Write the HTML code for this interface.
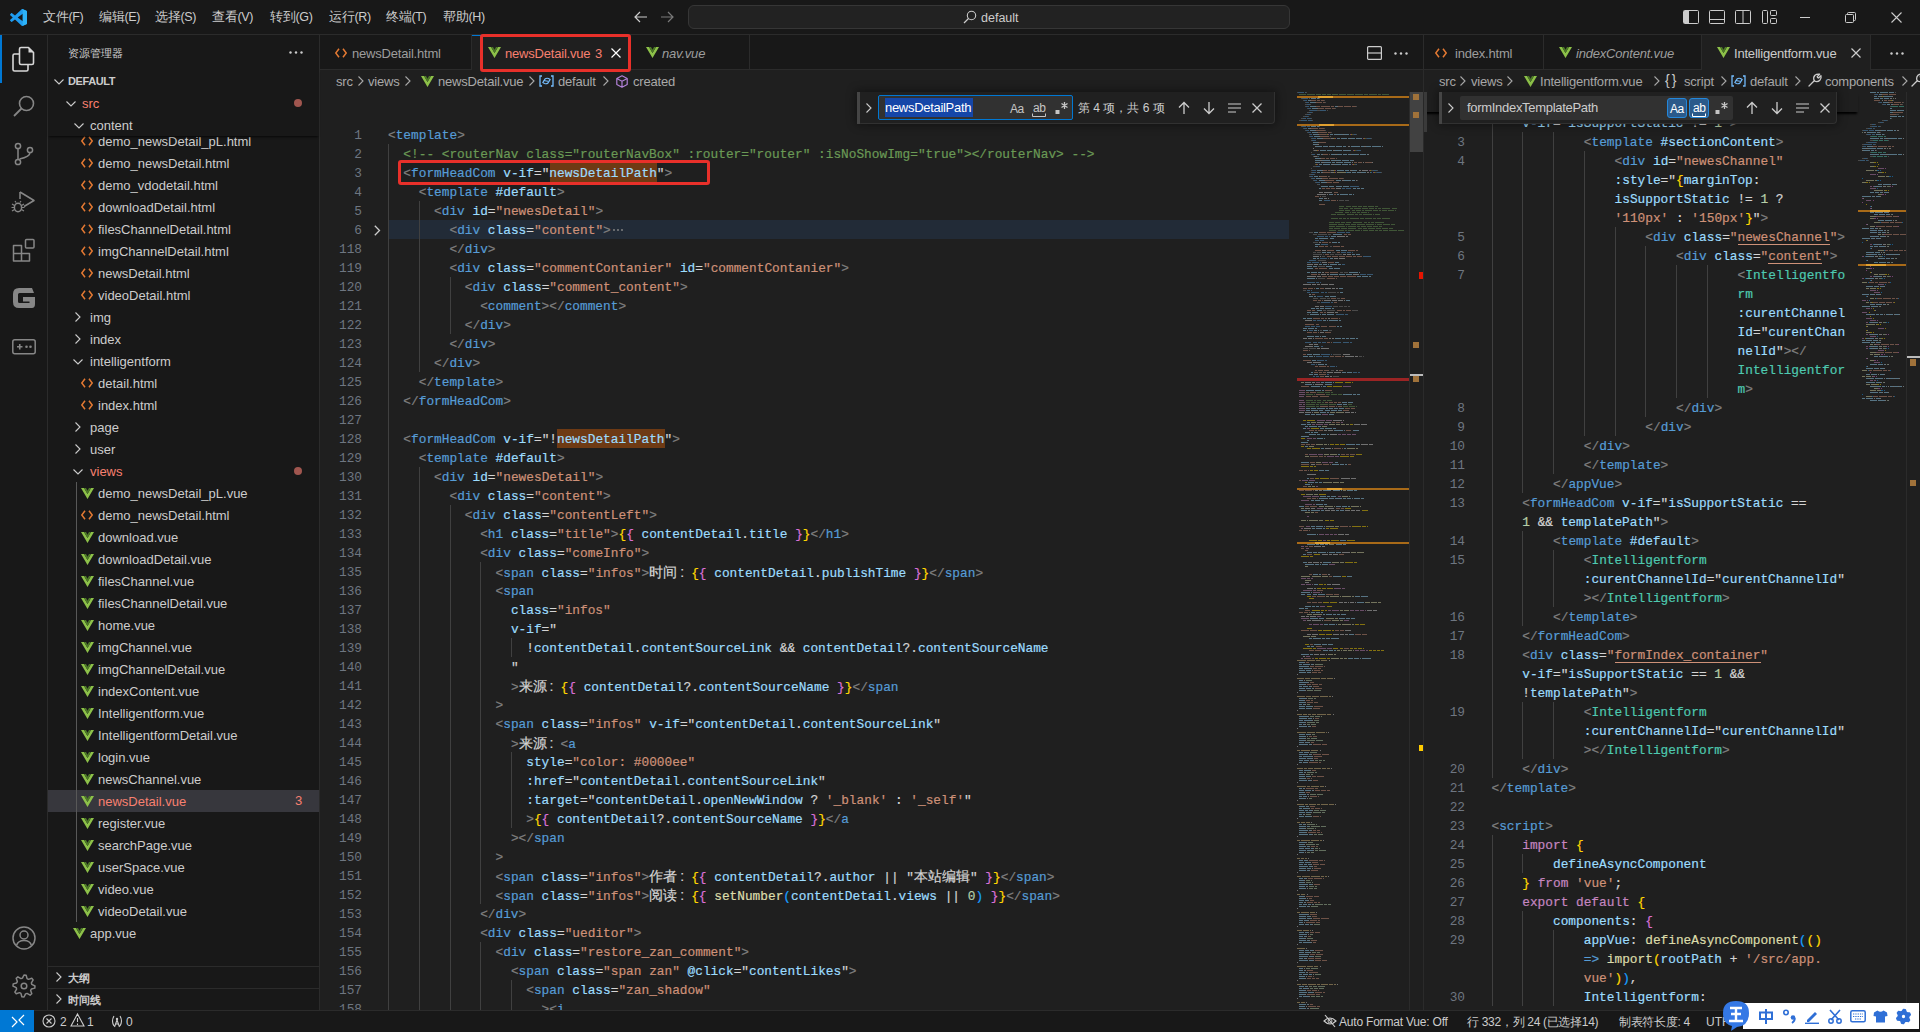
<!DOCTYPE html><html><head><meta charset="utf-8"><style>
*{box-sizing:border-box}
html,body{margin:0;padding:0;width:1920px;height:1032px;overflow:hidden;background:#181818}
body{position:relative;font-family:"Liberation Sans",sans-serif;font-size:13px;color:#cccccc}
.a{position:absolute}
.cr{position:absolute;height:19px;line-height:19px;padding-top:1px;-webkit-text-stroke:0.2px currentColor;white-space:pre;font-family:"Liberation Mono",monospace;font-size:12.81px;color:#d4d4d4}
.ln{position:absolute;height:19px;line-height:19px;padding-top:1px;text-align:right;font-family:"Liberation Mono",monospace;font-size:12.81px;color:#6e7681;width:40px}
.tr{position:absolute;height:22px;line-height:22px;white-space:pre;font-size:13px;color:#cccccc}
.ig{position:absolute;width:1px;background:#404040}
.ui{position:absolute;white-space:pre;line-height:16px}
svg{position:absolute;overflow:visible}
</style></head><body>
<div class="a" style="left:0;top:0;width:1920px;height:35px;background:#181818;border-bottom:1px solid #2b2b2b"></div><div class="a" style="left:0;top:35px;width:48px;height:975px;background:#181818;border-right:1px solid #2b2b2b"></div><div class="a" style="left:48px;top:35px;width:272px;height:975px;background:#181818;border-right:1px solid #2b2b2b"></div><div class="a" style="left:320px;top:35px;width:1103px;height:975px;background:#1f1f1f"></div><div class="a" style="left:1423px;top:35px;width:1px;height:975px;background:#2b2b2b"></div><div class="a" style="left:1424px;top:35px;width:496px;height:975px;background:#1f1f1f"></div><div class="a" style="left:320px;top:35px;width:1103px;height:35px;background:#181818;border-bottom:1px solid #2b2b2b"></div><div class="a" style="left:1424px;top:35px;width:496px;height:35px;background:#181818;border-bottom:1px solid #2b2b2b"></div><svg style="left:9.5px;top:8.5px" width="17" height="17" viewBox="0 0 100 100"><path fill-rule="evenodd" fill="#1f9cf0" d="M96.46 10.8 L75.86 0.87 C73.48 -0.28 70.63 0.2 68.76 2.07 L29.36 38.03 L12.19 25 C10.6 23.79 8.37 23.89 6.89 25.24 L1.39 30.24 C-0.42 31.89 -0.42 34.74 1.38 36.39 L16.27 50 L1.38 63.61 C-0.42 65.26 -0.42 68.11 1.39 69.76 L6.89 74.76 C8.37 76.11 10.6 76.21 12.19 75 L29.36 61.97 L68.76 97.93 C70.63 99.8 73.48 100.28 75.86 99.13 L96.46 89.2 C98.6 88.17 100 86 100 83.6 V16.4 C100 14 98.6 11.83 96.46 10.8 Z M75.03 72.7 L45.1 50 L75.03 27.3 Z"/><path fill="#2db3f8" d="M75.86 0.87 L96.46 10.8 C98.6 11.83 100 14 100 16.4 V83.6 C100 86 98.6 88.17 96.46 89.2 L75.86 99.13 C73.48 100.28 70.63 99.8 68.76 97.93 C71.5 99.5 75 98 75 95 V5 C75 2 71.5 0.5 68.76 2.07 C70.63 0.2 73.48 -0.28 75.86 0.87 Z"/></svg><div class="ui" style="left:43px;top:9px;font-size:12.5px;color:#cccccc;letter-spacing:-0.3px">文件(F)</div><div class="ui" style="left:99px;top:9px;font-size:12.5px;color:#cccccc;letter-spacing:-0.3px">编辑(E)</div><div class="ui" style="left:155px;top:9px;font-size:12.5px;color:#cccccc;letter-spacing:-0.3px">选择(S)</div><div class="ui" style="left:212px;top:9px;font-size:12.5px;color:#cccccc;letter-spacing:-0.3px">查看(V)</div><div class="ui" style="left:270px;top:9px;font-size:12.5px;color:#cccccc;letter-spacing:-0.3px">转到(G)</div><div class="ui" style="left:329px;top:9px;font-size:12.5px;color:#cccccc;letter-spacing:-0.3px">运行(R)</div><div class="ui" style="left:386px;top:9px;font-size:12.5px;color:#cccccc;letter-spacing:-0.3px">终端(T)</div><div class="ui" style="left:443px;top:9px;font-size:12.5px;color:#cccccc;letter-spacing:-0.3px">帮助(H)</div><svg style="left:634px;top:11px" width="14" height="12"><path d="M1 6 H13 M6 1 L1 6 L6 11" stroke="#cccccc" stroke-width="1.2" fill="none"/></svg><svg style="left:660px;top:11px" width="14" height="12"><path d="M1 6 H13 M8 1 L13 6 L8 11" stroke="#7a7a7a" stroke-width="1.2" fill="none"/></svg><div class="a" style="left:688px;top:5px;width:602px;height:24px;background:#222222;border:1px solid #363636;border-radius:6px"></div><svg style="left:963px;top:10px" width="14" height="14"><circle cx="8.5" cy="5.5" r="4.2" stroke="#cccccc" stroke-width="1.1" fill="none"/><path d="M5.5 8.5 L1 13" stroke="#cccccc" stroke-width="1.2"/></svg><div class="ui" style="left:981px;top:10px;font-size:12.5px;color:#cccccc">default</div><svg style="left:1683px;top:10px" width="16" height="14"><rect x="0.5" y="0.5" width="15" height="13" rx="1" stroke="#cccccc" fill="none"/><rect x="1" y="1" width="5" height="12" fill="#cccccc"/></svg><svg style="left:1709px;top:10px" width="16" height="14"><rect x="0.5" y="0.5" width="15" height="13" rx="1" stroke="#cccccc" fill="none"/><path d="M1 9.5 H15" stroke="#cccccc"/></svg><svg style="left:1735px;top:10px" width="16" height="14"><rect x="0.5" y="0.5" width="15" height="13" rx="1" stroke="#cccccc" fill="none"/><path d="M8 1 V13" stroke="#cccccc"/></svg><svg style="left:1762px;top:10px" width="15" height="14"><rect x="0.5" y="0.5" width="5" height="13" rx="1" stroke="#cccccc" fill="none"/><rect x="8.5" y="0.5" width="6" height="5" rx="1" stroke="#cccccc" fill="none"/><rect x="8.5" y="8.5" width="6" height="5" rx="1" stroke="#cccccc" fill="none"/></svg><svg style="left:1800px;top:12px" width="11" height="11"><path d="M0 5.5 H10" stroke="#cccccc" stroke-width="1"/></svg><svg style="left:1845px;top:12px" width="11" height="11"><rect x="0.5" y="2.5" width="8" height="8" rx="1" stroke="#cccccc" fill="none"/><path d="M2.5 2.5 V1.5 Q2.5 0.5 3.5 0.5 H9.5 Q10.5 0.5 10.5 1.5 V7.5 Q10.5 8.5 9.5 8.5 H8.5" stroke="#cccccc" fill="none"/></svg><svg style="left:1891px;top:12px" width="11" height="11"><path d="M0.5 0.5 L10.5 10.5 M10.5 0.5 L0.5 10.5" stroke="#cccccc" stroke-width="1.1"/></svg><div class="a" style="left:0;top:35px;width:2px;height:48px;background:#0078d4"></div><svg style="left:12px;top:46px" width="24" height="26"><path d="M9 1.5 H16.5 L21.5 6.5 V17 Q21.5 18.5 20 18.5 H9 Q7.5 18.5 7.5 17 V3 Q7.5 1.5 9 1.5 Z" stroke="#d7d7d7" stroke-width="1.6" fill="none" stroke-linejoin="round"/><path d="M16.5 1.5 L21.5 6.5 H16.5 Z" fill="#d7d7d7"/><path d="M7.5 8 H2.5 Q1 8 1 9.5 V23.5 Q1 25 2.5 25 H14.5 Q16 25 16 23.5 V18.5" stroke="#d7d7d7" stroke-width="1.6" fill="none" stroke-linejoin="round"/></svg><svg style="left:12px;top:94px" width="24" height="24"><circle cx="14.5" cy="9.5" r="7" stroke="#868686" stroke-width="1.6" fill="none"/><path d="M9.5 14.5 L2 22" stroke="#868686" stroke-width="1.8"/></svg><svg style="left:13px;top:142px" width="22" height="24"><circle cx="5" cy="4" r="2.6" stroke="#868686" stroke-width="1.5" fill="none"/><circle cx="5" cy="20" r="2.6" stroke="#868686" stroke-width="1.5" fill="none"/><circle cx="17" cy="8" r="2.6" stroke="#868686" stroke-width="1.5" fill="none"/><path d="M5 6.6 V17.4 M17 10.6 Q17 15 6.5 17" stroke="#868686" stroke-width="1.5" fill="none"/></svg><svg style="left:11px;top:190px" width="26" height="24"><path d="M9 2 L23 10.5 L13 16.5" stroke="#868686" stroke-width="1.5" fill="none" stroke-linejoin="round"/><path d="M9 2 V9" stroke="#868686" stroke-width="1.5"/><ellipse cx="7" cy="17.5" rx="3.6" ry="4.2" stroke="#868686" stroke-width="1.5" fill="none"/><path d="M1 14 L3.5 15.5 M1 21 L3.5 19.5 M13 14 L10.5 15.5 M13 21 L10.5 19.5 M0.5 17.5 H3 M11 17.5 H13.5 M5 12.5 L4 11 M9 12.5 L10 11" stroke="#868686" stroke-width="1.2"/></svg><svg style="left:12px;top:238px" width="24" height="24"><path d="M1.5 7.5 H9.5 V15.5 H17.5 V23 H1.5 Z M1.5 15.5 H9.5 V23" stroke="#868686" stroke-width="1.5" fill="none" stroke-linejoin="round"/><rect x="13.5" y="1.5" width="8.5" height="8.5" rx="1" stroke="#868686" stroke-width="1.5" fill="none"/></svg><svg style="left:12px;top:287px" width="24" height="22"><path d="M20 1 H7 Q1 1 1 7 V15 Q1 21 7 21 H20 Q23 21 23 17 V10 H11 V14.5 H17.5 V16 H7.5 Q6 16 6 14.5 V7.5 Q6 6 7.5 6 H22 Z" fill="#868686"/></svg><svg style="left:12px;top:339px" width="24" height="16"><rect x="0.8" y="0.8" width="22.4" height="14" rx="2" stroke="#868686" stroke-width="1.5" fill="none"/><path d="M5 7.8 H10.5 M7.75 5 V10.5" stroke="#868686" stroke-width="1.6"/><circle cx="14.5" cy="7.8" r="1.3" fill="#868686"/><circle cx="18.5" cy="7.8" r="1.3" fill="#868686"/></svg><svg style="left:12px;top:926px" width="24" height="24"><circle cx="12" cy="12" r="11" stroke="#868686" stroke-width="1.5" fill="none"/><circle cx="12" cy="9" r="4" stroke="#868686" stroke-width="1.5" fill="none"/><path d="M4.5 19.5 Q6 14.5 12 14.5 Q18 14.5 19.5 19.5" stroke="#868686" stroke-width="1.5" fill="none"/></svg><svg style="left:12px;top:974px" width="24" height="24"><polygon points="12.00,1.00 14.15,1.21 15.06,4.61 16.44,5.35 19.78,4.22 21.15,5.89 19.39,8.94 19.85,10.44 23.00,12.00 22.79,14.15 19.39,15.06 18.65,16.44 19.78,19.78 18.11,21.15 15.06,19.39 13.56,19.85 12.00,23.00 9.85,22.79 8.94,19.39 7.56,18.65 4.22,19.78 2.85,18.11 4.61,15.06 4.15,13.56 1.00,12.00 1.21,9.85 4.61,8.94 5.35,7.56 4.22,4.22 5.89,2.85 8.94,4.61 10.44,4.15" stroke="#868686" stroke-width="1.5" fill="none" stroke-linejoin="round"/><circle cx="12" cy="12" r="2.8" stroke="#868686" stroke-width="1.5" fill="none"/></svg><div class="ui" style="left:68px;top:45px;font-size:11px;color:#cccccc">资源管理器</div><svg style="left:289px;top:51px" width="14" height="4"><circle cx="1.5" cy="1.5" r="1.2" fill="#cccccc"/><circle cx="7" cy="1.5" r="1.2" fill="#cccccc"/><circle cx="12.5" cy="1.5" r="1.2" fill="#cccccc"/></svg><div class="a" style="left:48px;top:790px;width:271px;height:22px;background:#37373d"></div><div class="a" style="left:76px;top:482px;width:1px;height:440px;background:#585858"></div><svg style="left:81px;top:136px" width="12" height="10"><path d="M4 0.8 L0.8 5 L4 9.2 M8 0.8 L11.2 5 L8 9.2" stroke="#e37933" stroke-width="1.5" fill="none"/></svg><div class="tr" style="left:98px;top:131px;color:#cccccc;letter-spacing:0px">demo_newsDetail_pL.html</div><svg style="left:81px;top:158px" width="12" height="10"><path d="M4 0.8 L0.8 5 L4 9.2 M8 0.8 L11.2 5 L8 9.2" stroke="#e37933" stroke-width="1.5" fill="none"/></svg><div class="tr" style="left:98px;top:153px;color:#cccccc;letter-spacing:0px">demo_newsDetail.html</div><svg style="left:81px;top:180px" width="12" height="10"><path d="M4 0.8 L0.8 5 L4 9.2 M8 0.8 L11.2 5 L8 9.2" stroke="#e37933" stroke-width="1.5" fill="none"/></svg><div class="tr" style="left:98px;top:175px;color:#cccccc;letter-spacing:0px">demo_vdodetail.html</div><svg style="left:81px;top:202px" width="12" height="10"><path d="M4 0.8 L0.8 5 L4 9.2 M8 0.8 L11.2 5 L8 9.2" stroke="#e37933" stroke-width="1.5" fill="none"/></svg><div class="tr" style="left:98px;top:197px;color:#cccccc;letter-spacing:0px">downloadDetail.html</div><svg style="left:81px;top:224px" width="12" height="10"><path d="M4 0.8 L0.8 5 L4 9.2 M8 0.8 L11.2 5 L8 9.2" stroke="#e37933" stroke-width="1.5" fill="none"/></svg><div class="tr" style="left:98px;top:219px;color:#cccccc;letter-spacing:0px">filesChannelDetail.html</div><svg style="left:81px;top:246px" width="12" height="10"><path d="M4 0.8 L0.8 5 L4 9.2 M8 0.8 L11.2 5 L8 9.2" stroke="#e37933" stroke-width="1.5" fill="none"/></svg><div class="tr" style="left:98px;top:241px;color:#cccccc;letter-spacing:0px">imgChannelDetail.html</div><svg style="left:81px;top:268px" width="12" height="10"><path d="M4 0.8 L0.8 5 L4 9.2 M8 0.8 L11.2 5 L8 9.2" stroke="#e37933" stroke-width="1.5" fill="none"/></svg><div class="tr" style="left:98px;top:263px;color:#cccccc;letter-spacing:0px">newsDetail.html</div><svg style="left:81px;top:290px" width="12" height="10"><path d="M4 0.8 L0.8 5 L4 9.2 M8 0.8 L11.2 5 L8 9.2" stroke="#e37933" stroke-width="1.5" fill="none"/></svg><div class="tr" style="left:98px;top:285px;color:#cccccc;letter-spacing:0px">videoDetail.html</div><svg style="left:75px;top:312px" width="6" height="10"><path d="M0.5 0.5 L5 5 L0.5 9.5" stroke="#cccccc" stroke-width="1.1" fill="none"/></svg><div class="tr" style="left:90px;top:307px;color:#cccccc;letter-spacing:0px">img</div><svg style="left:75px;top:334px" width="6" height="10"><path d="M0.5 0.5 L5 5 L0.5 9.5" stroke="#cccccc" stroke-width="1.1" fill="none"/></svg><div class="tr" style="left:90px;top:329px;color:#cccccc;letter-spacing:0px">index</div><svg style="left:73px;top:359px" width="10" height="6"><path d="M0.5 0.5 L5 5 L9.5 0.5" stroke="#cccccc" stroke-width="1.1" fill="none"/></svg><div class="tr" style="left:90px;top:351px;color:#cccccc;letter-spacing:0px">intelligentform</div><svg style="left:81px;top:378px" width="12" height="10"><path d="M4 0.8 L0.8 5 L4 9.2 M8 0.8 L11.2 5 L8 9.2" stroke="#e37933" stroke-width="1.5" fill="none"/></svg><div class="tr" style="left:98px;top:373px;color:#cccccc;letter-spacing:0px">detail.html</div><svg style="left:81px;top:400px" width="12" height="10"><path d="M4 0.8 L0.8 5 L4 9.2 M8 0.8 L11.2 5 L8 9.2" stroke="#e37933" stroke-width="1.5" fill="none"/></svg><div class="tr" style="left:98px;top:395px;color:#cccccc;letter-spacing:0px">index.html</div><svg style="left:75px;top:422px" width="6" height="10"><path d="M0.5 0.5 L5 5 L0.5 9.5" stroke="#cccccc" stroke-width="1.1" fill="none"/></svg><div class="tr" style="left:90px;top:417px;color:#cccccc;letter-spacing:0px">page</div><svg style="left:75px;top:444px" width="6" height="10"><path d="M0.5 0.5 L5 5 L0.5 9.5" stroke="#cccccc" stroke-width="1.1" fill="none"/></svg><div class="tr" style="left:90px;top:439px;color:#cccccc;letter-spacing:0px">user</div><svg style="left:73px;top:469px" width="10" height="6"><path d="M0.5 0.5 L5 5 L9.5 0.5" stroke="#cccccc" stroke-width="1.1" fill="none"/></svg><div class="tr" style="left:90px;top:461px;color:#f88070;letter-spacing:0px">views</div><div class="a" style="left:294px;top:467px;width:8px;height:8px;border-radius:4px;background:#a0564f"></div><svg style="left:81px;top:488px" width="13" height="11" viewBox="0 0 13 11"><path d="M0 0 H3 L6.5 6 L10 0 H13 L6.5 11 Z" fill="#8dc149"/><path d="M3 0 H5 L6.5 2.7 L8 0 H10 L6.5 6 Z" fill="#4d7a27"/></svg><div class="tr" style="left:98px;top:483px;color:#cccccc;letter-spacing:0px">demo_newsDetail_pL.vue</div><svg style="left:81px;top:510px" width="12" height="10"><path d="M4 0.8 L0.8 5 L4 9.2 M8 0.8 L11.2 5 L8 9.2" stroke="#e37933" stroke-width="1.5" fill="none"/></svg><div class="tr" style="left:98px;top:505px;color:#cccccc;letter-spacing:0px">demo_newsDetail.html</div><svg style="left:81px;top:532px" width="13" height="11" viewBox="0 0 13 11"><path d="M0 0 H3 L6.5 6 L10 0 H13 L6.5 11 Z" fill="#8dc149"/><path d="M3 0 H5 L6.5 2.7 L8 0 H10 L6.5 6 Z" fill="#4d7a27"/></svg><div class="tr" style="left:98px;top:527px;color:#cccccc;letter-spacing:0px">download.vue</div><svg style="left:81px;top:554px" width="13" height="11" viewBox="0 0 13 11"><path d="M0 0 H3 L6.5 6 L10 0 H13 L6.5 11 Z" fill="#8dc149"/><path d="M3 0 H5 L6.5 2.7 L8 0 H10 L6.5 6 Z" fill="#4d7a27"/></svg><div class="tr" style="left:98px;top:549px;color:#cccccc;letter-spacing:0px">downloadDetail.vue</div><svg style="left:81px;top:576px" width="13" height="11" viewBox="0 0 13 11"><path d="M0 0 H3 L6.5 6 L10 0 H13 L6.5 11 Z" fill="#8dc149"/><path d="M3 0 H5 L6.5 2.7 L8 0 H10 L6.5 6 Z" fill="#4d7a27"/></svg><div class="tr" style="left:98px;top:571px;color:#cccccc;letter-spacing:0px">filesChannel.vue</div><svg style="left:81px;top:598px" width="13" height="11" viewBox="0 0 13 11"><path d="M0 0 H3 L6.5 6 L10 0 H13 L6.5 11 Z" fill="#8dc149"/><path d="M3 0 H5 L6.5 2.7 L8 0 H10 L6.5 6 Z" fill="#4d7a27"/></svg><div class="tr" style="left:98px;top:593px;color:#cccccc;letter-spacing:0px">filesChannelDetail.vue</div><svg style="left:81px;top:620px" width="13" height="11" viewBox="0 0 13 11"><path d="M0 0 H3 L6.5 6 L10 0 H13 L6.5 11 Z" fill="#8dc149"/><path d="M3 0 H5 L6.5 2.7 L8 0 H10 L6.5 6 Z" fill="#4d7a27"/></svg><div class="tr" style="left:98px;top:615px;color:#cccccc;letter-spacing:0px">home.vue</div><svg style="left:81px;top:642px" width="13" height="11" viewBox="0 0 13 11"><path d="M0 0 H3 L6.5 6 L10 0 H13 L6.5 11 Z" fill="#8dc149"/><path d="M3 0 H5 L6.5 2.7 L8 0 H10 L6.5 6 Z" fill="#4d7a27"/></svg><div class="tr" style="left:98px;top:637px;color:#cccccc;letter-spacing:0px">imgChannel.vue</div><svg style="left:81px;top:664px" width="13" height="11" viewBox="0 0 13 11"><path d="M0 0 H3 L6.5 6 L10 0 H13 L6.5 11 Z" fill="#8dc149"/><path d="M3 0 H5 L6.5 2.7 L8 0 H10 L6.5 6 Z" fill="#4d7a27"/></svg><div class="tr" style="left:98px;top:659px;color:#cccccc;letter-spacing:0px">imgChannelDetail.vue</div><svg style="left:81px;top:686px" width="13" height="11" viewBox="0 0 13 11"><path d="M0 0 H3 L6.5 6 L10 0 H13 L6.5 11 Z" fill="#8dc149"/><path d="M3 0 H5 L6.5 2.7 L8 0 H10 L6.5 6 Z" fill="#4d7a27"/></svg><div class="tr" style="left:98px;top:681px;color:#cccccc;letter-spacing:0px">indexContent.vue</div><svg style="left:81px;top:708px" width="13" height="11" viewBox="0 0 13 11"><path d="M0 0 H3 L6.5 6 L10 0 H13 L6.5 11 Z" fill="#8dc149"/><path d="M3 0 H5 L6.5 2.7 L8 0 H10 L6.5 6 Z" fill="#4d7a27"/></svg><div class="tr" style="left:98px;top:703px;color:#cccccc;letter-spacing:0px">Intelligentform.vue</div><svg style="left:81px;top:730px" width="13" height="11" viewBox="0 0 13 11"><path d="M0 0 H3 L6.5 6 L10 0 H13 L6.5 11 Z" fill="#8dc149"/><path d="M3 0 H5 L6.5 2.7 L8 0 H10 L6.5 6 Z" fill="#4d7a27"/></svg><div class="tr" style="left:98px;top:725px;color:#cccccc;letter-spacing:0px">IntelligentformDetail.vue</div><svg style="left:81px;top:752px" width="13" height="11" viewBox="0 0 13 11"><path d="M0 0 H3 L6.5 6 L10 0 H13 L6.5 11 Z" fill="#8dc149"/><path d="M3 0 H5 L6.5 2.7 L8 0 H10 L6.5 6 Z" fill="#4d7a27"/></svg><div class="tr" style="left:98px;top:747px;color:#cccccc;letter-spacing:0px">login.vue</div><svg style="left:81px;top:774px" width="13" height="11" viewBox="0 0 13 11"><path d="M0 0 H3 L6.5 6 L10 0 H13 L6.5 11 Z" fill="#8dc149"/><path d="M3 0 H5 L6.5 2.7 L8 0 H10 L6.5 6 Z" fill="#4d7a27"/></svg><div class="tr" style="left:98px;top:769px;color:#cccccc;letter-spacing:0px">newsChannel.vue</div><svg style="left:81px;top:796px" width="13" height="11" viewBox="0 0 13 11"><path d="M0 0 H3 L6.5 6 L10 0 H13 L6.5 11 Z" fill="#8dc149"/><path d="M3 0 H5 L6.5 2.7 L8 0 H10 L6.5 6 Z" fill="#4d7a27"/></svg><div class="tr" style="left:98px;top:791px;color:#f88070;letter-spacing:0px">newsDetail.vue</div><div class="tr" style="left:295px;top:790px;color:#f88070">3</div><svg style="left:81px;top:818px" width="13" height="11" viewBox="0 0 13 11"><path d="M0 0 H3 L6.5 6 L10 0 H13 L6.5 11 Z" fill="#8dc149"/><path d="M3 0 H5 L6.5 2.7 L8 0 H10 L6.5 6 Z" fill="#4d7a27"/></svg><div class="tr" style="left:98px;top:813px;color:#cccccc;letter-spacing:0px">register.vue</div><svg style="left:81px;top:840px" width="13" height="11" viewBox="0 0 13 11"><path d="M0 0 H3 L6.5 6 L10 0 H13 L6.5 11 Z" fill="#8dc149"/><path d="M3 0 H5 L6.5 2.7 L8 0 H10 L6.5 6 Z" fill="#4d7a27"/></svg><div class="tr" style="left:98px;top:835px;color:#cccccc;letter-spacing:0px">searchPage.vue</div><svg style="left:81px;top:862px" width="13" height="11" viewBox="0 0 13 11"><path d="M0 0 H3 L6.5 6 L10 0 H13 L6.5 11 Z" fill="#8dc149"/><path d="M3 0 H5 L6.5 2.7 L8 0 H10 L6.5 6 Z" fill="#4d7a27"/></svg><div class="tr" style="left:98px;top:857px;color:#cccccc;letter-spacing:0px">userSpace.vue</div><svg style="left:81px;top:884px" width="13" height="11" viewBox="0 0 13 11"><path d="M0 0 H3 L6.5 6 L10 0 H13 L6.5 11 Z" fill="#8dc149"/><path d="M3 0 H5 L6.5 2.7 L8 0 H10 L6.5 6 Z" fill="#4d7a27"/></svg><div class="tr" style="left:98px;top:879px;color:#cccccc;letter-spacing:0px">video.vue</div><svg style="left:81px;top:906px" width="13" height="11" viewBox="0 0 13 11"><path d="M0 0 H3 L6.5 6 L10 0 H13 L6.5 11 Z" fill="#8dc149"/><path d="M3 0 H5 L6.5 2.7 L8 0 H10 L6.5 6 Z" fill="#4d7a27"/></svg><div class="tr" style="left:98px;top:901px;color:#cccccc;letter-spacing:0px">videoDetail.vue</div><svg style="left:73px;top:928px" width="13" height="11" viewBox="0 0 13 11"><path d="M0 0 H3 L6.5 6 L10 0 H13 L6.5 11 Z" fill="#8dc149"/><path d="M3 0 H5 L6.5 2.7 L8 0 H10 L6.5 6 Z" fill="#4d7a27"/></svg><div class="tr" style="left:90px;top:923px;color:#cccccc;letter-spacing:0px">app.vue</div><div class="a" style="left:48px;top:69px;width:271px;height:67px;background:#181818;box-shadow:0 2px 2px -1px rgba(0,0,0,0.7)"></div><svg style="left:54px;top:79px" width="10" height="6"><path d="M0.5 0.5 L5 5 L9.5 0.5" stroke="#cccccc" stroke-width="1.1" fill="none"/></svg><div class="tr" style="left:68px;top:70px;font-size:11px;font-weight:bold;color:#cccccc;letter-spacing:-0.4px">DEFAULT</div><svg style="left:66px;top:101px" width="10" height="6"><path d="M0.5 0.5 L5 5 L9.5 0.5" stroke="#cccccc" stroke-width="1.1" fill="none"/></svg><div class="tr" style="left:82px;top:93px;color:#f88070">src</div><div class="a" style="left:294px;top:99px;width:8px;height:8px;border-radius:4px;background:#a0564f"></div><svg style="left:74px;top:123px" width="10" height="6"><path d="M0.5 0.5 L5 5 L9.5 0.5" stroke="#cccccc" stroke-width="1.1" fill="none"/></svg><div class="tr" style="left:90px;top:115px">content</div><div class="a" style="left:48px;top:966px;width:271px;height:1px;background:#2b2b2b"></div><div class="a" style="left:48px;top:988px;width:271px;height:1px;background:#2b2b2b"></div><svg style="left:56px;top:972px" width="6" height="10"><path d="M0.5 0.5 L5 5 L0.5 9.5" stroke="#cccccc" stroke-width="1.1" fill="none"/></svg><div class="tr" style="left:68px;top:967px;font-size:11px;font-weight:bold">大纲</div><svg style="left:56px;top:994px" width="6" height="10"><path d="M0.5 0.5 L5 5 L0.5 9.5" stroke="#cccccc" stroke-width="1.1" fill="none"/></svg><div class="tr" style="left:68px;top:989px;font-size:11px;font-weight:bold">时间线</div><div class="a" style="left:471px;top:35px;width:1px;height:34px;background:#2b2b2b"></div><svg style="left:335px;top:48px" width="12" height="10"><path d="M4 0.8 L0.8 5 L4 9.2 M8 0.8 L11.2 5 L8 9.2" stroke="#e37933" stroke-width="1.5" fill="none"/></svg><div class="ui" style="left:352px;top:46px;font-size:13px;color:#9d9d9d;letter-spacing:-0.2px">newsDetail.html</div><div class="a" style="left:472px;top:35px;width:158px;height:35px;background:#1f1f1f;border-top:1px solid #0078d4"></div><svg style="left:488px;top:47px" width="13" height="11" viewBox="0 0 13 11"><path d="M0 0 H3 L6.5 6 L10 0 H13 L6.5 11 Z" fill="#8dc149"/><path d="M3 0 H5 L6.5 2.7 L8 0 H10 L6.5 6 Z" fill="#4d7a27"/></svg><div class="ui" style="left:505px;top:46px;font-size:13px;color:#f88070;letter-spacing:-0.2px">newsDetail.vue</div><div class="ui" style="left:595px;top:46px;font-size:13px;color:#f88070;letter-spacing:-0.2px">3</div><svg style="left:611px;top:48px" width="10" height="10"><path d="M0.5 0.5 L9.5 9.5 M9.5 0.5 L0.5 9.5" stroke="#ffffff" stroke-width="1.2"/></svg><div class="a" style="left:630px;top:35px;width:1px;height:34px;background:#2b2b2b"></div><svg style="left:646px;top:47px" width="13" height="11" viewBox="0 0 13 11"><path d="M0 0 H3 L6.5 6 L10 0 H13 L6.5 11 Z" fill="#8dc149"/><path d="M3 0 H5 L6.5 2.7 L8 0 H10 L6.5 6 Z" fill="#4d7a27"/></svg><div class="ui" style="left:662px;top:46px;font-size:13px;color:#9d9d9d;font-style:italic;letter-spacing:-0.2px">nav.vue</div><div class="a" style="left:749px;top:35px;width:1px;height:34px;background:#2b2b2b"></div><svg style="left:1367px;top:46px" width="15" height="14"><rect x="0.6" y="0.6" width="13.8" height="12.8" rx="1" stroke="#cccccc" stroke-width="1.2" fill="none"/><path d="M1 7 H14" stroke="#cccccc" stroke-width="1.2"/></svg><svg style="left:1394px;top:52px" width="14" height="4"><circle cx="1.5" cy="1.5" r="1.2" fill="#cccccc"/><circle cx="7" cy="1.5" r="1.2" fill="#cccccc"/><circle cx="12.5" cy="1.5" r="1.2" fill="#cccccc"/></svg><div class="ui" style="left:336px;top:74px;font-size:13px;color:#a9a9a9;letter-spacing:-0.2px">src</div><svg style="left:358px;top:76px" width="6" height="10"><path d="M0.5 0.5 L5 5 L0.5 9.5" stroke="#a9a9a9" stroke-width="1.1" fill="none"/></svg><div class="ui" style="left:368px;top:74px;font-size:13px;color:#a9a9a9;letter-spacing:-0.2px">views</div><svg style="left:405px;top:76px" width="6" height="10"><path d="M0.5 0.5 L5 5 L0.5 9.5" stroke="#a9a9a9" stroke-width="1.1" fill="none"/></svg><svg style="left:421px;top:76px" width="13" height="11" viewBox="0 0 13 11"><path d="M0 0 H3 L6.5 6 L10 0 H13 L6.5 11 Z" fill="#8dc149"/><path d="M3 0 H5 L6.5 2.7 L8 0 H10 L6.5 6 Z" fill="#4d7a27"/></svg><div class="ui" style="left:438px;top:74px;font-size:13px;color:#a9a9a9;letter-spacing:-0.2px">newsDetail.vue</div><svg style="left:529px;top:76px" width="6" height="10"><path d="M0.5 0.5 L5 5 L0.5 9.5" stroke="#a9a9a9" stroke-width="1.1" fill="none"/></svg><svg style="left:539px;top:75px" width="15" height="12"><path d="M3 1 H1 V11 H3 M12 1 H14 V11 H12" stroke="#75beff" stroke-width="1.3" fill="none"/><path d="M3.8 7.5 L6 4 Q7.5 2.8 9.5 3.5 L11.2 4.5 L9 8 Q7.5 9.2 5.5 8.5 Z M4.5 5.5 L10.5 6.5" stroke="#75beff" stroke-width="1.2" fill="none" stroke-linejoin="round"/></svg><div class="ui" style="left:558px;top:74px;font-size:13px;color:#a9a9a9;letter-spacing:-0.2px">default</div><svg style="left:603px;top:76px" width="6" height="10"><path d="M0.5 0.5 L5 5 L0.5 9.5" stroke="#a9a9a9" stroke-width="1.1" fill="none"/></svg><svg style="left:616px;top:75px" width="12" height="13"><path d="M6 0.8 L11.2 3.5 V9.5 L6 12.2 L0.8 9.5 V3.5 Z M0.8 3.5 L6 6.2 L11.2 3.5 M6 6.2 V12.2" stroke="#b180d7" stroke-width="1.2" fill="none" stroke-linejoin="round"/></svg><div class="ui" style="left:633px;top:74px;font-size:13px;color:#a9a9a9;letter-spacing:-0.2px">created</div><div class="a" style="left:388px;top:220px;width:901px;height:19px;background:#222b37"></div><div class="a" style="left:549.5px;top:163px;width:107.7px;height:19px;background:#6e3a14"></div><div class="a" style="left:557.2px;top:429px;width:107.7px;height:19px;background:#6e3a14"></div><div class="ig" style="left:388px;top:144px;height:874px"></div><div class="ig" style="left:419px;top:201px;height:171px"></div><div class="ig" style="left:419px;top:467px;height:551px"></div><div class="ig" style="left:450px;top:277px;height:57px"></div><div class="ig" style="left:450px;top:505px;height:513px"></div><div class="ig" style="left:480px;top:562px;height:342px"></div><div class="ig" style="left:480px;top:942px;height:76px"></div><div class="ig" style="left:511px;top:638px;height:19px"></div><div class="ig" style="left:511px;top:752px;height:76px"></div><div class="ig" style="left:511px;top:980px;height:38px"></div><div class="ln" style="left:322px;top:125px">1</div><div class="cr" style="left:388.00px;top:125px"><span style="color:#808080;">&lt;</span><span style="color:#569cd6;">template</span><span style="color:#808080;">&gt;</span></div><div class="ln" style="left:322px;top:144px">2</div><div class="cr" style="left:388.00px;top:144px">  <span style="color:#6a9955;">&lt;!-- &lt;routerNav class="routerNavBox" :router="router" :isNoShowImg="true"&gt;&lt;/routerNav&gt; --&gt;</span></div><div class="ln" style="left:322px;top:163px">3</div><div class="cr" style="left:388.00px;top:163px">  <span style="color:#808080;">&lt;</span><span style="color:#569cd6;">formHeadCom</span> <span style="color:#9cdcfe;">v-if</span><span style="color:#d4d4d4;">=</span><span style="color:#d4d4d4;">"</span><span style="color:#9cdcfe;">newsDetailPath</span><span style="color:#d4d4d4;">"</span><span style="color:#808080;">&gt;</span></div><div class="ln" style="left:322px;top:182px">4</div><div class="cr" style="left:388.00px;top:182px">    <span style="color:#808080;">&lt;</span><span style="color:#569cd6;">template</span> <span style="color:#9cdcfe;">#default</span><span style="color:#808080;">&gt;</span></div><div class="ln" style="left:322px;top:201px">5</div><div class="cr" style="left:388.00px;top:201px">      <span style="color:#808080;">&lt;</span><span style="color:#569cd6;">div</span> <span style="color:#9cdcfe;">id</span><span style="color:#d4d4d4;">=</span><span style="color:#ce9178;">"</span><span style="color:#ce9178;">newesDetail"</span><span style="color:#808080;">&gt;</span></div><div class="ln" style="left:322px;top:220px">6</div><div class="cr" style="left:388.00px;top:220px">        <span style="color:#808080;">&lt;</span><span style="color:#569cd6;">div</span> <span style="color:#9cdcfe;">class</span><span style="color:#d4d4d4;">=</span><span style="color:#ce9178;">"</span><span style="color:#ce9178;">content"</span><span style="color:#808080;">&gt;</span></div><div class="ln" style="left:322px;top:239px">118</div><div class="cr" style="left:388.00px;top:239px">        <span style="color:#808080;">&lt;/</span><span style="color:#569cd6;">div</span><span style="color:#808080;">&gt;</span></div><div class="ln" style="left:322px;top:258px">119</div><div class="cr" style="left:388.00px;top:258px">        <span style="color:#808080;">&lt;</span><span style="color:#569cd6;">div</span> <span style="color:#9cdcfe;">class</span><span style="color:#d4d4d4;">=</span><span style="color:#ce9178;">"</span><span style="color:#ce9178;">commentContanier"</span> <span style="color:#9cdcfe;">id</span><span style="color:#d4d4d4;">=</span><span style="color:#ce9178;">"</span><span style="color:#ce9178;">commentContanier"</span><span style="color:#808080;">&gt;</span></div><div class="ln" style="left:322px;top:277px">120</div><div class="cr" style="left:388.00px;top:277px">          <span style="color:#808080;">&lt;</span><span style="color:#569cd6;">div</span> <span style="color:#9cdcfe;">class</span><span style="color:#d4d4d4;">=</span><span style="color:#ce9178;">"</span><span style="color:#ce9178;">comment_content"</span><span style="color:#808080;">&gt;</span></div><div class="ln" style="left:322px;top:296px">121</div><div class="cr" style="left:388.00px;top:296px">            <span style="color:#808080;">&lt;</span><span style="color:#569cd6;">comment</span><span style="color:#808080;">&gt;</span><span style="color:#808080;">&lt;/</span><span style="color:#569cd6;">comment</span><span style="color:#808080;">&gt;</span></div><div class="ln" style="left:322px;top:315px">122</div><div class="cr" style="left:388.00px;top:315px">          <span style="color:#808080;">&lt;/</span><span style="color:#569cd6;">div</span><span style="color:#808080;">&gt;</span></div><div class="ln" style="left:322px;top:334px">123</div><div class="cr" style="left:388.00px;top:334px">        <span style="color:#808080;">&lt;/</span><span style="color:#569cd6;">div</span><span style="color:#808080;">&gt;</span></div><div class="ln" style="left:322px;top:353px">124</div><div class="cr" style="left:388.00px;top:353px">      <span style="color:#808080;">&lt;/</span><span style="color:#569cd6;">div</span><span style="color:#808080;">&gt;</span></div><div class="ln" style="left:322px;top:372px">125</div><div class="cr" style="left:388.00px;top:372px">    <span style="color:#808080;">&lt;/</span><span style="color:#569cd6;">template</span><span style="color:#808080;">&gt;</span></div><div class="ln" style="left:322px;top:391px">126</div><div class="cr" style="left:388.00px;top:391px">  <span style="color:#808080;">&lt;/</span><span style="color:#569cd6;">formHeadCom</span><span style="color:#808080;">&gt;</span></div><div class="ln" style="left:322px;top:410px">127</div><div class="cr" style="left:388.00px;top:410px"></div><div class="ln" style="left:322px;top:429px">128</div><div class="cr" style="left:388.00px;top:429px">  <span style="color:#808080;">&lt;</span><span style="color:#569cd6;">formHeadCom</span> <span style="color:#9cdcfe;">v-if</span><span style="color:#d4d4d4;">=</span><span style="color:#d4d4d4;">"</span><span style="color:#d4d4d4;">!</span><span style="color:#9cdcfe;">newsDetailPath</span><span style="color:#d4d4d4;">"</span><span style="color:#808080;">&gt;</span></div><div class="ln" style="left:322px;top:448px">129</div><div class="cr" style="left:388.00px;top:448px">    <span style="color:#808080;">&lt;</span><span style="color:#569cd6;">template</span> <span style="color:#9cdcfe;">#default</span><span style="color:#808080;">&gt;</span></div><div class="ln" style="left:322px;top:467px">130</div><div class="cr" style="left:388.00px;top:467px">      <span style="color:#808080;">&lt;</span><span style="color:#569cd6;">div</span> <span style="color:#9cdcfe;">id</span><span style="color:#d4d4d4;">=</span><span style="color:#ce9178;">"</span><span style="color:#ce9178;">newesDetail"</span><span style="color:#808080;">&gt;</span></div><div class="ln" style="left:322px;top:486px">131</div><div class="cr" style="left:388.00px;top:486px">        <span style="color:#808080;">&lt;</span><span style="color:#569cd6;">div</span> <span style="color:#9cdcfe;">class</span><span style="color:#d4d4d4;">=</span><span style="color:#ce9178;">"</span><span style="color:#ce9178;">content"</span><span style="color:#808080;">&gt;</span></div><div class="ln" style="left:322px;top:505px">132</div><div class="cr" style="left:388.00px;top:505px">          <span style="color:#808080;">&lt;</span><span style="color:#569cd6;">div</span> <span style="color:#9cdcfe;">class</span><span style="color:#d4d4d4;">=</span><span style="color:#ce9178;">"</span><span style="color:#ce9178;">contentLeft"</span><span style="color:#808080;">&gt;</span></div><div class="ln" style="left:322px;top:524px">133</div><div class="cr" style="left:388.00px;top:524px">            <span style="color:#808080;">&lt;</span><span style="color:#569cd6;">h1</span> <span style="color:#9cdcfe;">class</span><span style="color:#d4d4d4;">=</span><span style="color:#ce9178;">"</span><span style="color:#ce9178;">title"</span><span style="color:#808080;">&gt;</span><span style="color:#ffd700;">{</span><span style="color:#da70d6;">{</span> <span style="color:#9cdcfe;">contentDetail</span><span style="color:#d4d4d4;">.</span><span style="color:#9cdcfe;">title</span> <span style="color:#da70d6;">}</span><span style="color:#ffd700;">}</span><span style="color:#808080;">&lt;/</span><span style="color:#569cd6;">h1</span><span style="color:#808080;">&gt;</span></div><div class="ln" style="left:322px;top:543px">134</div><div class="cr" style="left:388.00px;top:543px">            <span style="color:#808080;">&lt;</span><span style="color:#569cd6;">div</span> <span style="color:#9cdcfe;">class</span><span style="color:#d4d4d4;">=</span><span style="color:#ce9178;">"</span><span style="color:#ce9178;">comeInfo"</span><span style="color:#808080;">&gt;</span></div><div class="ln" style="left:322px;top:562px">135</div><div class="cr" style="left:388.00px;top:562px">              <span style="color:#808080;">&lt;</span><span style="color:#569cd6;">span</span> <span style="color:#9cdcfe;">class</span><span style="color:#d4d4d4;">=</span><span style="color:#ce9178;">"</span><span style="color:#ce9178;">infos"</span><span style="color:#808080;">&gt;</span><span style="color:#d4d4d4;font-family:'Liberation Sans',sans-serif;font-size:14px;letter-spacing:0;display:inline-block;width:14px;text-align:left;">时</span><span style="color:#d4d4d4;font-family:'Liberation Sans',sans-serif;font-size:14px;letter-spacing:0;display:inline-block;width:14px;text-align:left;">间</span><span style="color:#d4d4d4;font-family:'Liberation Sans',sans-serif;font-size:14px;letter-spacing:0;display:inline-block;width:14px;text-align:left;padding-left:3px;">:</span><span style="color:#ffd700;">{</span><span style="color:#da70d6;">{</span> <span style="color:#9cdcfe;">contentDetail</span><span style="color:#d4d4d4;">.</span><span style="color:#9cdcfe;">publishTime</span> <span style="color:#da70d6;">}</span><span style="color:#ffd700;">}</span><span style="color:#808080;">&lt;/</span><span style="color:#569cd6;">span</span><span style="color:#808080;">&gt;</span></div><div class="ln" style="left:322px;top:581px">136</div><div class="cr" style="left:388.00px;top:581px">              <span style="color:#808080;">&lt;</span><span style="color:#569cd6;">span</span></div><div class="ln" style="left:322px;top:600px">137</div><div class="cr" style="left:388.00px;top:600px">                <span style="color:#9cdcfe;">class</span><span style="color:#d4d4d4;">=</span><span style="color:#ce9178;">"</span><span style="color:#ce9178;">infos"</span></div><div class="ln" style="left:322px;top:619px">138</div><div class="cr" style="left:388.00px;top:619px">                <span style="color:#9cdcfe;">v-if</span><span style="color:#d4d4d4;">=</span><span style="color:#d4d4d4;">"</span></div><div class="ln" style="left:322px;top:638px">139</div><div class="cr" style="left:388.00px;top:638px">                  <span style="color:#d4d4d4;">!</span><span style="color:#9cdcfe;">contentDetail</span><span style="color:#d4d4d4;">.</span><span style="color:#9cdcfe;">contentSourceLink</span> <span style="color:#d4d4d4;">&amp;</span><span style="color:#d4d4d4;">&amp;</span> <span style="color:#9cdcfe;">contentDetail</span><span style="color:#d4d4d4;">?</span><span style="color:#d4d4d4;">.</span><span style="color:#9cdcfe;">contentSourceName</span></div><div class="ln" style="left:322px;top:657px">140</div><div class="cr" style="left:388.00px;top:657px">                <span style="color:#d4d4d4;">"</span></div><div class="ln" style="left:322px;top:676px">141</div><div class="cr" style="left:388.00px;top:676px">                <span style="color:#808080;">&gt;</span><span style="color:#d4d4d4;font-family:'Liberation Sans',sans-serif;font-size:14px;letter-spacing:0;display:inline-block;width:14px;text-align:left;">来</span><span style="color:#d4d4d4;font-family:'Liberation Sans',sans-serif;font-size:14px;letter-spacing:0;display:inline-block;width:14px;text-align:left;">源</span><span style="color:#d4d4d4;font-family:'Liberation Sans',sans-serif;font-size:14px;letter-spacing:0;display:inline-block;width:14px;text-align:left;padding-left:3px;">:</span><span style="color:#ffd700;">{</span><span style="color:#da70d6;">{</span> <span style="color:#9cdcfe;">contentDetail</span><span style="color:#d4d4d4;">?</span><span style="color:#d4d4d4;">.</span><span style="color:#9cdcfe;">contentSourceName</span> <span style="color:#da70d6;">}</span><span style="color:#ffd700;">}</span><span style="color:#808080;">&lt;/</span><span style="color:#569cd6;">span</span></div><div class="ln" style="left:322px;top:695px">142</div><div class="cr" style="left:388.00px;top:695px">              <span style="color:#808080;">&gt;</span></div><div class="ln" style="left:322px;top:714px">143</div><div class="cr" style="left:388.00px;top:714px">              <span style="color:#808080;">&lt;</span><span style="color:#569cd6;">span</span> <span style="color:#9cdcfe;">class</span><span style="color:#d4d4d4;">=</span><span style="color:#ce9178;">"</span><span style="color:#ce9178;">infos"</span> <span style="color:#9cdcfe;">v-if</span><span style="color:#d4d4d4;">=</span><span style="color:#d4d4d4;">"</span><span style="color:#9cdcfe;">contentDetail</span><span style="color:#d4d4d4;">.</span><span style="color:#9cdcfe;">contentSourceLink</span><span style="color:#d4d4d4;">"</span></div><div class="ln" style="left:322px;top:733px">144</div><div class="cr" style="left:388.00px;top:733px">                <span style="color:#808080;">&gt;</span><span style="color:#d4d4d4;font-family:'Liberation Sans',sans-serif;font-size:14px;letter-spacing:0;display:inline-block;width:14px;text-align:left;">来</span><span style="color:#d4d4d4;font-family:'Liberation Sans',sans-serif;font-size:14px;letter-spacing:0;display:inline-block;width:14px;text-align:left;">源</span><span style="color:#d4d4d4;font-family:'Liberation Sans',sans-serif;font-size:14px;letter-spacing:0;display:inline-block;width:14px;text-align:left;padding-left:3px;">:</span><span style="color:#808080;">&lt;</span><span style="color:#569cd6;">a</span></div><div class="ln" style="left:322px;top:752px">145</div><div class="cr" style="left:388.00px;top:752px">                  <span style="color:#9cdcfe;">style</span><span style="color:#d4d4d4;">=</span><span style="color:#ce9178;">"</span><span style="color:#ce9178;">color: #0000ee"</span></div><div class="ln" style="left:322px;top:771px">146</div><div class="cr" style="left:388.00px;top:771px">                  <span style="color:#9cdcfe;">:href</span><span style="color:#d4d4d4;">=</span><span style="color:#d4d4d4;">"</span><span style="color:#9cdcfe;">contentDetail</span><span style="color:#d4d4d4;">.</span><span style="color:#9cdcfe;">contentSourceLink</span><span style="color:#d4d4d4;">"</span></div><div class="ln" style="left:322px;top:790px">147</div><div class="cr" style="left:388.00px;top:790px">                  <span style="color:#9cdcfe;">:target</span><span style="color:#d4d4d4;">=</span><span style="color:#d4d4d4;">"</span><span style="color:#9cdcfe;">contentDetail</span><span style="color:#d4d4d4;">.</span><span style="color:#9cdcfe;">openNewWindow</span> <span style="color:#d4d4d4;">?</span> <span style="color:#ce9178;">'_blank'</span> <span style="color:#d4d4d4;">:</span> <span style="color:#ce9178;">'_self'</span><span style="color:#d4d4d4;">"</span></div><div class="ln" style="left:322px;top:809px">148</div><div class="cr" style="left:388.00px;top:809px">                  <span style="color:#808080;">&gt;</span><span style="color:#ffd700;">{</span><span style="color:#da70d6;">{</span> <span style="color:#9cdcfe;">contentDetail</span><span style="color:#d4d4d4;">?</span><span style="color:#d4d4d4;">.</span><span style="color:#9cdcfe;">contentSourceName</span> <span style="color:#da70d6;">}</span><span style="color:#ffd700;">}</span><span style="color:#808080;">&lt;/</span><span style="color:#569cd6;">a</span></div><div class="ln" style="left:322px;top:828px">149</div><div class="cr" style="left:388.00px;top:828px">                <span style="color:#808080;">&gt;</span><span style="color:#808080;">&lt;/</span><span style="color:#569cd6;">span</span></div><div class="ln" style="left:322px;top:847px">150</div><div class="cr" style="left:388.00px;top:847px">              <span style="color:#808080;">&gt;</span></div><div class="ln" style="left:322px;top:866px">151</div><div class="cr" style="left:388.00px;top:866px">              <span style="color:#808080;">&lt;</span><span style="color:#569cd6;">span</span> <span style="color:#9cdcfe;">class</span><span style="color:#d4d4d4;">=</span><span style="color:#ce9178;">"</span><span style="color:#ce9178;">infos"</span><span style="color:#808080;">&gt;</span><span style="color:#d4d4d4;font-family:'Liberation Sans',sans-serif;font-size:14px;letter-spacing:0;display:inline-block;width:14px;text-align:left;">作</span><span style="color:#d4d4d4;font-family:'Liberation Sans',sans-serif;font-size:14px;letter-spacing:0;display:inline-block;width:14px;text-align:left;">者</span><span style="color:#d4d4d4;font-family:'Liberation Sans',sans-serif;font-size:14px;letter-spacing:0;display:inline-block;width:14px;text-align:left;padding-left:3px;">:</span><span style="color:#ffd700;">{</span><span style="color:#da70d6;">{</span> <span style="color:#9cdcfe;">contentDetail</span><span style="color:#d4d4d4;">?</span><span style="color:#d4d4d4;">.</span><span style="color:#9cdcfe;">author</span> <span style="color:#d4d4d4;">|</span><span style="color:#d4d4d4;">|</span> <span style="color:#d4d4d4;">"</span><span style="color:#d4d4d4;font-family:'Liberation Sans',sans-serif;font-size:14px;letter-spacing:0;display:inline-block;width:14px;text-align:left;">本</span><span style="color:#d4d4d4;font-family:'Liberation Sans',sans-serif;font-size:14px;letter-spacing:0;display:inline-block;width:14px;text-align:left;">站</span><span style="color:#d4d4d4;font-family:'Liberation Sans',sans-serif;font-size:14px;letter-spacing:0;display:inline-block;width:14px;text-align:left;">编</span><span style="color:#d4d4d4;font-family:'Liberation Sans',sans-serif;font-size:14px;letter-spacing:0;display:inline-block;width:14px;text-align:left;">辑</span><span style="color:#d4d4d4;">"</span> <span style="color:#da70d6;">}</span><span style="color:#ffd700;">}</span><span style="color:#808080;">&lt;/</span><span style="color:#569cd6;">span</span><span style="color:#808080;">&gt;</span></div><div class="ln" style="left:322px;top:885px">152</div><div class="cr" style="left:388.00px;top:885px">              <span style="color:#808080;">&lt;</span><span style="color:#569cd6;">span</span> <span style="color:#9cdcfe;">class</span><span style="color:#d4d4d4;">=</span><span style="color:#ce9178;">"</span><span style="color:#ce9178;">infos"</span><span style="color:#808080;">&gt;</span><span style="color:#d4d4d4;font-family:'Liberation Sans',sans-serif;font-size:14px;letter-spacing:0;display:inline-block;width:14px;text-align:left;">阅</span><span style="color:#d4d4d4;font-family:'Liberation Sans',sans-serif;font-size:14px;letter-spacing:0;display:inline-block;width:14px;text-align:left;">读</span><span style="color:#d4d4d4;font-family:'Liberation Sans',sans-serif;font-size:14px;letter-spacing:0;display:inline-block;width:14px;text-align:left;padding-left:3px;">:</span><span style="color:#ffd700;">{</span><span style="color:#da70d6;">{</span> <span style="color:#dcdcaa;">setNumber</span><span style="color:#179fff;">(</span><span style="color:#9cdcfe;">contentDetail</span><span style="color:#d4d4d4;">.</span><span style="color:#9cdcfe;">views</span> <span style="color:#d4d4d4;">|</span><span style="color:#d4d4d4;">|</span> <span style="color:#b5cea8;">0</span><span style="color:#179fff;">)</span> <span style="color:#da70d6;">}</span><span style="color:#ffd700;">}</span><span style="color:#808080;">&lt;/</span><span style="color:#569cd6;">span</span><span style="color:#808080;">&gt;</span></div><div class="ln" style="left:322px;top:904px">153</div><div class="cr" style="left:388.00px;top:904px">            <span style="color:#808080;">&lt;/</span><span style="color:#569cd6;">div</span><span style="color:#808080;">&gt;</span></div><div class="ln" style="left:322px;top:923px">154</div><div class="cr" style="left:388.00px;top:923px">            <span style="color:#808080;">&lt;</span><span style="color:#569cd6;">div</span> <span style="color:#9cdcfe;">class</span><span style="color:#d4d4d4;">=</span><span style="color:#ce9178;">"</span><span style="color:#ce9178;">ueditor"</span><span style="color:#808080;">&gt;</span></div><div class="ln" style="left:322px;top:942px">155</div><div class="cr" style="left:388.00px;top:942px">              <span style="color:#808080;">&lt;</span><span style="color:#569cd6;">div</span> <span style="color:#9cdcfe;">class</span><span style="color:#d4d4d4;">=</span><span style="color:#ce9178;">"</span><span style="color:#ce9178;">restore_zan_comment"</span><span style="color:#808080;">&gt;</span></div><div class="ln" style="left:322px;top:961px">156</div><div class="cr" style="left:388.00px;top:961px">                <span style="color:#808080;">&lt;</span><span style="color:#569cd6;">span</span> <span style="color:#9cdcfe;">class</span><span style="color:#d4d4d4;">=</span><span style="color:#ce9178;">"</span><span style="color:#ce9178;">span zan"</span> <span style="color:#9cdcfe;">@click</span><span style="color:#d4d4d4;">=</span><span style="color:#d4d4d4;">"</span><span style="color:#9cdcfe;">contentLikes</span><span style="color:#d4d4d4;">"</span><span style="color:#808080;">&gt;</span></div><div class="ln" style="left:322px;top:980px">157</div><div class="cr" style="left:388.00px;top:980px">                  <span style="color:#808080;">&lt;</span><span style="color:#569cd6;">span</span> <span style="color:#9cdcfe;">class</span><span style="color:#d4d4d4;">=</span><span style="color:#ce9178;">"</span><span style="color:#ce9178;">zan_shadow"</span></div><div class="ln" style="left:322px;top:999px">158</div><div class="cr" style="left:388.00px;top:999px">                    <span style="color:#808080;">&gt;</span><span style="color:#808080;">&lt;</span><span style="color:#569cd6;">i</span></div><svg style="left:613.0px;top:229px" width="12" height="3"><circle cx="1" cy="1" r="0.9" fill="#8a8a8a"/><circle cx="5" cy="1" r="0.9" fill="#8a8a8a"/><circle cx="9" cy="1" r="0.9" fill="#8a8a8a"/></svg><svg style="left:374px;top:225px" width="7" height="11"><path d="M0.8 0.8 L5.5 5.5 L0.8 10.2" stroke="#cccccc" stroke-width="1.3" fill="none"/></svg><svg style="left:1435px;top:48px" width="12" height="10"><path d="M4 0.8 L0.8 5 L4 9.2 M8 0.8 L11.2 5 L8 9.2" stroke="#e37933" stroke-width="1.5" fill="none"/></svg><div class="ui" style="left:1455px;top:46px;font-size:13px;color:#9d9d9d;letter-spacing:-0.2px">index.html</div><div class="a" style="left:1543px;top:35px;width:1px;height:34px;background:#2b2b2b"></div><svg style="left:1559px;top:47px" width="13" height="11" viewBox="0 0 13 11"><path d="M0 0 H3 L6.5 6 L10 0 H13 L6.5 11 Z" fill="#8dc149"/><path d="M3 0 H5 L6.5 2.7 L8 0 H10 L6.5 6 Z" fill="#4d7a27"/></svg><div class="ui" style="left:1576px;top:46px;font-size:13px;color:#9d9d9d;font-style:italic;letter-spacing:-0.2px">indexContent.vue</div><div class="a" style="left:1701px;top:35px;width:1px;height:34px;background:#2b2b2b"></div><div class="a" style="left:1702px;top:35px;width:168px;height:35px;background:#1f1f1f"></div><svg style="left:1717px;top:47px" width="13" height="11" viewBox="0 0 13 11"><path d="M0 0 H3 L6.5 6 L10 0 H13 L6.5 11 Z" fill="#8dc149"/><path d="M3 0 H5 L6.5 2.7 L8 0 H10 L6.5 6 Z" fill="#4d7a27"/></svg><div class="ui" style="left:1734px;top:46px;font-size:13px;color:#cccccc;letter-spacing:-0.2px">Intelligentform.vue</div><svg style="left:1851px;top:48px" width="10" height="10"><path d="M0.5 0.5 L9.5 9.5 M9.5 0.5 L0.5 9.5" stroke="#cccccc" stroke-width="1.2"/></svg><div class="a" style="left:1870px;top:35px;width:1px;height:34px;background:#2b2b2b"></div><svg style="left:1890px;top:52px" width="14" height="4"><circle cx="1.5" cy="1.5" r="1.2" fill="#cccccc"/><circle cx="7" cy="1.5" r="1.2" fill="#cccccc"/><circle cx="12.5" cy="1.5" r="1.2" fill="#cccccc"/></svg><div class="ui" style="left:1439px;top:74px;font-size:13px;color:#a9a9a9;letter-spacing:-0.2px">src</div><svg style="left:1460px;top:76px" width="6" height="10"><path d="M0.5 0.5 L5 5 L0.5 9.5" stroke="#a9a9a9" stroke-width="1.1" fill="none"/></svg><div class="ui" style="left:1471px;top:74px;font-size:13px;color:#a9a9a9;letter-spacing:-0.2px">views</div><svg style="left:1507px;top:76px" width="6" height="10"><path d="M0.5 0.5 L5 5 L0.5 9.5" stroke="#a9a9a9" stroke-width="1.1" fill="none"/></svg><svg style="left:1524px;top:76px" width="13" height="11" viewBox="0 0 13 11"><path d="M0 0 H3 L6.5 6 L10 0 H13 L6.5 11 Z" fill="#8dc149"/><path d="M3 0 H5 L6.5 2.7 L8 0 H10 L6.5 6 Z" fill="#4d7a27"/></svg><div class="ui" style="left:1540px;top:74px;font-size:13px;color:#a9a9a9;letter-spacing:-0.2px">Intelligentform.vue</div><svg style="left:1654px;top:76px" width="6" height="10"><path d="M0.5 0.5 L5 5 L0.5 9.5" stroke="#a9a9a9" stroke-width="1.1" fill="none"/></svg><div class="ui" style="left:1665px;top:72px;font-size:14px;color:#cccccc;letter-spacing:2px">{}</div><div class="ui" style="left:1684px;top:74px;font-size:13px;color:#a9a9a9;letter-spacing:-0.2px">script</div><svg style="left:1721px;top:76px" width="6" height="10"><path d="M0.5 0.5 L5 5 L0.5 9.5" stroke="#a9a9a9" stroke-width="1.1" fill="none"/></svg><svg style="left:1731px;top:75px" width="15" height="12"><path d="M3 1 H1 V11 H3 M12 1 H14 V11 H12" stroke="#75beff" stroke-width="1.3" fill="none"/><path d="M3.8 7.5 L6 4 Q7.5 2.8 9.5 3.5 L11.2 4.5 L9 8 Q7.5 9.2 5.5 8.5 Z M4.5 5.5 L10.5 6.5" stroke="#75beff" stroke-width="1.2" fill="none" stroke-linejoin="round"/></svg><div class="ui" style="left:1750px;top:74px;font-size:13px;color:#a9a9a9;letter-spacing:-0.2px">default</div><svg style="left:1795px;top:76px" width="6" height="10"><path d="M0.5 0.5 L5 5 L0.5 9.5" stroke="#a9a9a9" stroke-width="1.1" fill="none"/></svg><svg style="left:1807px;top:73px" width="15" height="15"><path d="M2 13 L7.5 7.5 M7.2 7.8 Q5.8 4.5 8 2.3 Q10 0.6 12.6 1.2 L10.2 3.6 L10.6 4.6 L11.6 5 L14 2.6 Q14.6 5.2 12.9 7.2 Q10.6 9.4 7.4 8" stroke="#cccccc" stroke-width="1.3" fill="none" stroke-linejoin="round" stroke-linecap="round"/></svg><div class="ui" style="left:1825px;top:74px;font-size:13px;color:#a9a9a9;letter-spacing:-0.2px">components</div><svg style="left:1902px;top:76px" width="6" height="10"><path d="M0.5 0.5 L5 5 L0.5 9.5" stroke="#a9a9a9" stroke-width="1.1" fill="none"/></svg><svg style="left:1910px;top:73px" width="15" height="15"><path d="M2 13 L7.5 7.5 M7.2 7.8 Q5.8 4.5 8 2.3 Q10 0.6 12.6 1.2 L10.2 3.6 L10.6 4.6 L11.6 5 L14 2.6 Q14.6 5.2 12.9 7.2 Q10.6 9.4 7.4 8" stroke="#cccccc" stroke-width="1.3" fill="none" stroke-linejoin="round" stroke-linecap="round"/></svg><div class="ig" style="left:1492px;top:124px;height:654px"></div><div class="ig" style="left:1492px;top:835px;height:171px"></div><div class="ig" style="left:1522px;top:132px;height:361px"></div><div class="ig" style="left:1522px;top:531px;height:95px"></div><div class="ig" style="left:1522px;top:702px;height:57px"></div><div class="ig" style="left:1522px;top:854px;height:19px"></div><div class="ig" style="left:1522px;top:911px;height:95px"></div><div class="ig" style="left:1553px;top:132px;height:342px"></div><div class="ig" style="left:1553px;top:550px;height:57px"></div><div class="ig" style="left:1553px;top:702px;height:57px"></div><div class="ig" style="left:1553px;top:930px;height:76px"></div><div class="ig" style="left:1584px;top:151px;height:285px"></div><div class="ig" style="left:1615px;top:227px;height:209px"></div><div class="ig" style="left:1645px;top:246px;height:171px"></div><div class="ig" style="left:1676px;top:265px;height:133px"></div><div class="ig" style="left:1707px;top:265px;height:133px"></div><div class="cr" style="left:1522.26px;top:113px"><span style="color:#9cdcfe;">v-if</span><span style="color:#d4d4d4;">=</span><span style="color:#d4d4d4;">"</span><span style="color:#9cdcfe;">isSupportStatic</span> <span style="color:#d4d4d4;">!</span><span style="color:#d4d4d4;">=</span> <span style="color:#b5cea8;">1</span><span style="color:#d4d4d4;">"</span><span style="color:#808080;">&gt;</span></div><div class="ln" style="left:1425px;top:132px">3</div><div class="cr" style="left:1583.78px;top:132px"><span style="color:#808080;">&lt;</span><span style="color:#569cd6;">template</span> <span style="color:#9cdcfe;">#sectionContent</span><span style="color:#808080;">&gt;</span></div><div class="ln" style="left:1425px;top:151px">4</div><div class="cr" style="left:1614.54px;top:151px"><span style="color:#808080;">&lt;</span><span style="color:#569cd6;">div</span> <span style="color:#9cdcfe;">id</span><span style="color:#d4d4d4;">=</span><span style="color:#ce9178;">"</span><span style="color:#ce9178;">newesChannel"</span></div><div class="cr" style="left:1614.54px;top:170px"><span style="color:#9cdcfe;">:style</span><span style="color:#d4d4d4;">=</span><span style="color:#d4d4d4;">"</span><span style="color:#ffd700;">{</span><span style="color:#9cdcfe;">marginTop</span><span style="color:#d4d4d4;">:</span></div><div class="cr" style="left:1614.54px;top:189px"><span style="color:#9cdcfe;">isSupportStatic</span> <span style="color:#d4d4d4;">!</span><span style="color:#d4d4d4;">=</span> <span style="color:#b5cea8;">1</span> <span style="color:#d4d4d4;">?</span></div><div class="cr" style="left:1614.54px;top:208px"><span style="color:#ce9178;">'110px'</span> <span style="color:#d4d4d4;">:</span> <span style="color:#ce9178;">'150px'</span><span style="color:#ffd700;">}</span><span style="color:#d4d4d4;">"</span><span style="color:#808080;">&gt;</span></div><div class="ln" style="left:1425px;top:227px">5</div><div class="cr" style="left:1645.30px;top:227px"><span style="color:#808080;">&lt;</span><span style="color:#569cd6;">div</span> <span style="color:#9cdcfe;">class</span><span style="color:#d4d4d4;">=</span><span style="color:#ce9178;">"</span><span style="color:#ce9178;">newesChannel"</span><span style="color:#808080;">&gt;</span></div><div class="ln" style="left:1425px;top:246px">6</div><div class="cr" style="left:1676.06px;top:246px"><span style="color:#808080;">&lt;</span><span style="color:#569cd6;">div</span> <span style="color:#9cdcfe;">class</span><span style="color:#d4d4d4;">=</span><span style="color:#ce9178;">"</span><span style="color:#ce9178;">content"</span><span style="color:#808080;">&gt;</span></div><div class="ln" style="left:1425px;top:265px">7</div><div class="cr" style="left:1737.58px;top:265px"><span style="color:#808080;">&lt;</span><span style="color:#4ec9b0;">Intelligentfo</span></div><div class="cr" style="left:1737.58px;top:284px"><span style="color:#4ec9b0;">rm</span></div><div class="cr" style="left:1737.58px;top:303px"><span style="color:#9cdcfe;">:curentChannel</span></div><div class="cr" style="left:1737.58px;top:322px"><span style="color:#9cdcfe;">Id</span><span style="color:#d4d4d4;">=</span><span style="color:#d4d4d4;">"</span><span style="color:#9cdcfe;">curentChan</span></div><div class="cr" style="left:1737.58px;top:341px"><span style="color:#9cdcfe;">nelId</span><span style="color:#d4d4d4;">"</span><span style="color:#808080;">&gt;&lt;/</span></div><div class="cr" style="left:1737.58px;top:360px"><span style="color:#4ec9b0;">Intelligentfor</span></div><div class="cr" style="left:1737.58px;top:379px"><span style="color:#4ec9b0;">m</span><span style="color:#808080;">&gt;</span></div><div class="ln" style="left:1425px;top:398px">8</div><div class="cr" style="left:1676.06px;top:398px"><span style="color:#808080;">&lt;/</span><span style="color:#569cd6;">div</span><span style="color:#808080;">&gt;</span></div><div class="ln" style="left:1425px;top:417px">9</div><div class="cr" style="left:1645.30px;top:417px"><span style="color:#808080;">&lt;/</span><span style="color:#569cd6;">div</span><span style="color:#808080;">&gt;</span></div><div class="ln" style="left:1425px;top:436px">10</div><div class="cr" style="left:1583.78px;top:436px"><span style="color:#808080;">&lt;/</span><span style="color:#569cd6;">div</span><span style="color:#808080;">&gt;</span></div><div class="ln" style="left:1425px;top:455px">11</div><div class="cr" style="left:1583.78px;top:455px"><span style="color:#808080;">&lt;/</span><span style="color:#569cd6;">template</span><span style="color:#808080;">&gt;</span></div><div class="ln" style="left:1425px;top:474px">12</div><div class="cr" style="left:1553.02px;top:474px"><span style="color:#808080;">&lt;/</span><span style="color:#569cd6;">appVue</span><span style="color:#808080;">&gt;</span></div><div class="ln" style="left:1425px;top:493px">13</div><div class="cr" style="left:1522.26px;top:493px"><span style="color:#808080;">&lt;</span><span style="color:#569cd6;">formHeadCom</span> <span style="color:#9cdcfe;">v-if</span><span style="color:#d4d4d4;">=</span><span style="color:#d4d4d4;">"</span><span style="color:#9cdcfe;">isSupportStatic</span> <span style="color:#d4d4d4;">=</span><span style="color:#d4d4d4;">=</span></div><div class="cr" style="left:1522.26px;top:512px"><span style="color:#b5cea8;">1</span> <span style="color:#d4d4d4;">&amp;</span><span style="color:#d4d4d4;">&amp;</span> <span style="color:#9cdcfe;">templatePath</span><span style="color:#d4d4d4;">"</span><span style="color:#808080;">&gt;</span></div><div class="ln" style="left:1425px;top:531px">14</div><div class="cr" style="left:1553.02px;top:531px"><span style="color:#808080;">&lt;</span><span style="color:#569cd6;">template</span> <span style="color:#9cdcfe;">#default</span><span style="color:#808080;">&gt;</span></div><div class="ln" style="left:1425px;top:550px">15</div><div class="cr" style="left:1583.78px;top:550px"><span style="color:#808080;">&lt;</span><span style="color:#4ec9b0;">Intelligentform</span></div><div class="cr" style="left:1583.78px;top:569px"><span style="color:#9cdcfe;">:curentChannelId</span><span style="color:#d4d4d4;">=</span><span style="color:#d4d4d4;">"</span><span style="color:#9cdcfe;">curentChannelId</span><span style="color:#d4d4d4;">"</span></div><div class="cr" style="left:1583.78px;top:588px"><span style="color:#808080;">&gt;</span><span style="color:#808080;">&lt;/</span><span style="color:#4ec9b0;">Intelligentform</span><span style="color:#808080;">&gt;</span></div><div class="ln" style="left:1425px;top:607px">16</div><div class="cr" style="left:1553.02px;top:607px"><span style="color:#808080;">&lt;/</span><span style="color:#569cd6;">template</span><span style="color:#808080;">&gt;</span></div><div class="ln" style="left:1425px;top:626px">17</div><div class="cr" style="left:1522.26px;top:626px"><span style="color:#808080;">&lt;/</span><span style="color:#569cd6;">formHeadCom</span><span style="color:#808080;">&gt;</span></div><div class="ln" style="left:1425px;top:645px">18</div><div class="cr" style="left:1522.26px;top:645px"><span style="color:#808080;">&lt;</span><span style="color:#569cd6;">div</span> <span style="color:#9cdcfe;">class</span><span style="color:#d4d4d4;">=</span><span style="color:#ce9178;">"</span><span style="color:#ce9178;">formIndex_container"</span></div><div class="cr" style="left:1522.26px;top:664px"><span style="color:#9cdcfe;">v-if</span><span style="color:#d4d4d4;">=</span><span style="color:#d4d4d4;">"</span><span style="color:#9cdcfe;">isSupportStatic</span> <span style="color:#d4d4d4;">=</span><span style="color:#d4d4d4;">=</span> <span style="color:#b5cea8;">1</span> <span style="color:#d4d4d4;">&amp;</span><span style="color:#d4d4d4;">&amp;</span></div><div class="cr" style="left:1522.26px;top:683px"><span style="color:#d4d4d4;">!</span><span style="color:#9cdcfe;">templatePath</span><span style="color:#d4d4d4;">"</span><span style="color:#808080;">&gt;</span></div><div class="ln" style="left:1425px;top:702px">19</div><div class="cr" style="left:1583.78px;top:702px"><span style="color:#808080;">&lt;</span><span style="color:#4ec9b0;">Intelligentform</span></div><div class="cr" style="left:1583.78px;top:721px"><span style="color:#9cdcfe;">:curentChannelId</span><span style="color:#d4d4d4;">=</span><span style="color:#d4d4d4;">"</span><span style="color:#9cdcfe;">curentChannelId</span><span style="color:#d4d4d4;">"</span></div><div class="cr" style="left:1583.78px;top:740px"><span style="color:#808080;">&gt;</span><span style="color:#808080;">&lt;/</span><span style="color:#4ec9b0;">Intelligentform</span><span style="color:#808080;">&gt;</span></div><div class="ln" style="left:1425px;top:759px">20</div><div class="cr" style="left:1522.26px;top:759px"><span style="color:#808080;">&lt;/</span><span style="color:#569cd6;">div</span><span style="color:#808080;">&gt;</span></div><div class="ln" style="left:1425px;top:778px">21</div><div class="cr" style="left:1491.50px;top:778px"><span style="color:#808080;">&lt;/</span><span style="color:#569cd6;">template</span><span style="color:#808080;">&gt;</span></div><div class="ln" style="left:1425px;top:797px">22</div><div class="cr" style="left:1491.50px;top:797px"></div><div class="ln" style="left:1425px;top:816px">23</div><div class="cr" style="left:1491.50px;top:816px"><span style="color:#808080;">&lt;</span><span style="color:#569cd6;">script</span><span style="color:#808080;">&gt;</span></div><div class="ln" style="left:1425px;top:835px">24</div><div class="cr" style="left:1522.26px;top:835px"><span style="color:#c586c0;">import</span> <span style="color:#ffd700;">{</span></div><div class="ln" style="left:1425px;top:854px">25</div><div class="cr" style="left:1553.02px;top:854px"><span style="color:#9cdcfe;">defineAsyncComponent</span></div><div class="ln" style="left:1425px;top:873px">26</div><div class="cr" style="left:1522.26px;top:873px"><span style="color:#ffd700;">}</span> <span style="color:#c586c0;">from</span> <span style="color:#ce9178;">'vue'</span><span style="color:#d4d4d4;">;</span></div><div class="ln" style="left:1425px;top:892px">27</div><div class="cr" style="left:1522.26px;top:892px"><span style="color:#c586c0;">export</span> <span style="color:#c586c0;">default</span> <span style="color:#ffd700;">{</span></div><div class="ln" style="left:1425px;top:911px">28</div><div class="cr" style="left:1553.02px;top:911px"><span style="color:#9cdcfe;">components</span><span style="color:#d4d4d4;">:</span> <span style="color:#da70d6;">{</span></div><div class="ln" style="left:1425px;top:930px">29</div><div class="cr" style="left:1583.78px;top:930px"><span style="color:#9cdcfe;">appVue</span><span style="color:#d4d4d4;">:</span> <span style="color:#dcdcaa;">defineAsyncComponent</span><span style="color:#179fff;">(</span><span style="color:#ffd700;">(</span><span style="color:#ffd700;">)</span></div><div class="cr" style="left:1583.78px;top:949px"><span style="color:#569cd6;">=&gt;</span> <span style="color:#dcdcaa;">import</span><span style="color:#ffd700;">(</span><span style="color:#9cdcfe;">rootPath</span> <span style="color:#d4d4d4;">+</span> <span style="color:#ce9178;">'/src/app.</span></div><div class="cr" style="left:1583.78px;top:968px"><span style="color:#ce9178;">vue'</span><span style="color:#ffd700;">)</span><span style="color:#179fff;">)</span><span style="color:#d4d4d4;">,</span></div><div class="ln" style="left:1425px;top:987px">30</div><div class="cr" style="left:1583.78px;top:987px"><span style="color:#9cdcfe;">Intelligentform</span><span style="color:#d4d4d4;">:</span></div><div class="a" style="left:1737.6px;top:244px;width:92.3px;height:1px;background:#ce9178"></div><div class="a" style="left:1768.3px;top:263px;width:53.8px;height:1px;background:#ce9178"></div><div class="a" style="left:1614.5px;top:662px;width:146.1px;height:1px;background:#ce9178"></div><div class="a" style="left:1424px;top:92px;width:434px;height:20px;background:#1f1f1f;box-shadow:0 3px 2px -1px #000"></div><div class="a" style="left:857px;top:92px;width:418px;height:32px;background:#202020;border:1px solid #313131;border-top:none;border-radius:0 0 4px 4px;box-shadow:0 0 8px 2px rgba(0,0,0,0.36)"></div><div class="a" style="left:857px;top:92px;width:3px;height:32px;background:#454545"></div><svg style="left:866px;top:103px" width="6" height="10"><path d="M0.5 0.5 L5 5 L0.5 9.5" stroke="#cccccc" stroke-width="1.1" fill="none"/></svg><div class="a" style="left:878px;top:95px;width:195px;height:25px;background:#313131;border:1px solid #0078d4;border-radius:2px"></div><div class="a" style="left:885px;top:98px;width:88px;height:19px;background:#1546a8"></div><div class="ui" style="left:885px;top:100px;font-size:13px;color:#ffffff;letter-spacing:-0.3px">newsDetailPath</div><div class="ui" style="left:1010px;top:101px;font-size:12px;color:#c5c5c5;letter-spacing:-0.5px">Aa</div><div class="ui" style="left:1033px;top:100px;font-size:12px;color:#c5c5c5;letter-spacing:-0.3px">ab</div><svg style="left:1032px;top:113px" width="14" height="4"><path d="M0.5 0.5 V3.5 H13.5 V0.5" stroke="#c5c5c5" stroke-width="1" fill="none"/></svg><svg style="left:1055px;top:101px" width="14" height="14"><rect x="0.5" y="9" width="4" height="4" fill="#c5c5c5"/><path d="M9.5 1 V8 M6.5 2.5 L12.5 6.5 M12.5 2.5 L6.5 6.5" stroke="#c5c5c5" stroke-width="1.3"/></svg><div class="ui" style="left:1078px;top:100px;font-size:12px;color:#cccccc">第 4 项，共 6 项</div><svg style="left:1178px;top:101px" width="12" height="14"><path d="M6 13 V1.5 M1 6.5 L6 1.5 L11 6.5" stroke="#cccccc" stroke-width="1.3" fill="none"/></svg><svg style="left:1203px;top:101px" width="12" height="14"><path d="M6 1 V12.5 M1 7.5 L6 12.5 L11 7.5" stroke="#cccccc" stroke-width="1.3" fill="none"/></svg><svg style="left:1227px;top:102px" width="15" height="12"><path d="M1 2 H14 M1 6 H14 M1 10 H9" stroke="#cccccc" stroke-width="1.2" fill="none"/></svg><svg style="left:1252px;top:103px" width="10" height="10"><path d="M0.5 0.5 L9.5 9.5 M9.5 0.5 L0.5 9.5" stroke="#cccccc" stroke-width="1.3"/></svg><div class="a" style="left:1439px;top:92px;width:398px;height:32px;background:#202020;border:1px solid #313131;border-top:none;border-radius:0 0 4px 4px;box-shadow:0 0 8px 2px rgba(0,0,0,0.36)"></div><div class="a" style="left:1439px;top:92px;width:3px;height:32px;background:#454545"></div><svg style="left:1448px;top:103px" width="6" height="10"><path d="M0.5 0.5 L5 5 L0.5 9.5" stroke="#cccccc" stroke-width="1.1" fill="none"/></svg><div class="a" style="left:1460px;top:96px;width:273px;height:24px;background:#313131;border-radius:2px"></div><div class="ui" style="left:1467px;top:100px;font-size:13px;color:#cccccc;letter-spacing:-0.3px">formIndexTemplatePath</div><div class="a" style="left:1667px;top:98px;width:20px;height:20px;background:#2b5a8a;border:1px solid #2488db;border-radius:3px"></div><div class="a" style="left:1689px;top:98px;width:20px;height:20px;background:#2b5a8a;border:1px solid #2488db;border-radius:3px"></div><div class="ui" style="left:1670px;top:101px;font-size:12px;color:#ffffff;letter-spacing:-0.5px">Aa</div><div class="ui" style="left:1693px;top:100px;font-size:12px;color:#ffffff;letter-spacing:-0.3px">ab</div><svg style="left:1692px;top:113px" width="14" height="4"><path d="M0.5 0.5 V3.5 H13.5 V0.5" stroke="#ffffff" stroke-width="1" fill="none"/></svg><svg style="left:1715px;top:101px" width="14" height="14"><rect x="0.5" y="9" width="4" height="4" fill="#c5c5c5"/><path d="M9.5 1 V8 M6.5 2.5 L12.5 6.5 M12.5 2.5 L6.5 6.5" stroke="#c5c5c5" stroke-width="1.3"/></svg><svg style="left:1746px;top:101px" width="12" height="14"><path d="M6 13 V1.5 M1 6.5 L6 1.5 L11 6.5" stroke="#cccccc" stroke-width="1.3" fill="none"/></svg><svg style="left:1771px;top:101px" width="12" height="14"><path d="M6 1 V12.5 M1 7.5 L6 12.5 L11 7.5" stroke="#cccccc" stroke-width="1.3" fill="none"/></svg><svg style="left:1795px;top:102px" width="15" height="12"><path d="M1 2 H14 M1 6 H14 M1 10 H9" stroke="#cccccc" stroke-width="1.2" fill="none"/></svg><svg style="left:1820px;top:103px" width="10" height="10"><path d="M0.5 0.5 L9.5 9.5 M9.5 0.5 L0.5 9.5" stroke="#cccccc" stroke-width="1.3"/></svg><svg style="left:1297px;top:92px;opacity:0.45" width="112" height="918"><path d="M0 0 h1 v1 h-1zM9 0 h1 v1 h-1zM2 4 h1 v1 h-1zM36 4 h1 v1 h-1zM4 6 h1 v1 h-1zM22 6 h1 v1 h-1zM6 8 h1 v1 h-1zM27 8 h1 v1 h-1zM8 10 h1 v1 h-1zM28 10 h1 v1 h-1zM8 12 h2 v1 h-2zM13 12 h1 v1 h-1zM8 14 h1 v1 h-1zM59 14 h1 v1 h-1zM10 16 h1 v1 h-1zM38 16 h1 v1 h-1zM12 18 h1 v1 h-1zM20 18 h1 v1 h-1zM21 18 h2 v1 h-2zM30 18 h1 v1 h-1zM10 20 h2 v1 h-2zM15 20 h1 v1 h-1zM8 22 h2 v1 h-2zM13 22 h1 v1 h-1zM6 24 h2 v1 h-2zM11 24 h1 v1 h-1zM4 26 h2 v1 h-2zM14 26 h1 v1 h-1zM2 28 h2 v1 h-2zM15 28 h1 v1 h-1zM2 32 h1 v1 h-1zM37 32 h1 v1 h-1zM4 34 h1 v1 h-1zM22 34 h1 v1 h-1zM6 36 h1 v1 h-1zM27 36 h1 v1 h-1zM8 38 h1 v1 h-1zM28 38 h1 v1 h-1zM10 40 h1 v1 h-1zM34 40 h1 v1 h-1zM12 42 h1 v1 h-1zM29 42 h1 v1 h-1zM55 42 h2 v1 h-2zM59 42 h1 v1 h-1zM12 44 h1 v1 h-1zM33 44 h1 v1 h-1zM14 46 h1 v1 h-1zM33 46 h1 v1 h-1zM68 46 h2 v1 h-2zM74 46 h1 v1 h-1zM14 48 h1 v1 h-1zM16 58 h1 v1 h-1zM58 58 h2 v1 h-2zM14 60 h1 v1 h-1zM14 62 h1 v1 h-1zM16 64 h1 v1 h-1zM20 64 h1 v1 h-1zM18 72 h1 v1 h-1zM57 72 h2 v1 h-2zM16 74 h1 v1 h-1zM17 74 h2 v1 h-2zM14 76 h1 v1 h-1zM14 78 h1 v1 h-1zM33 78 h1 v1 h-1zM74 78 h2 v1 h-2zM80 78 h1 v1 h-1zM14 80 h1 v1 h-1zM33 80 h1 v1 h-1zM78 80 h2 v1 h-2zM84 80 h1 v1 h-1zM12 82 h2 v1 h-2zM17 82 h1 v1 h-1zM12 84 h1 v1 h-1zM32 84 h1 v1 h-1zM14 86 h1 v1 h-1zM46 86 h1 v1 h-1zM16 88 h1 v1 h-1zM60 88 h1 v1 h-1zM18 90 h1 v1 h-1zM20 92 h1 v1 h-1zM21 92 h1 v1 h-1zM25 104 h4 v1 h-4zM42 108 h5 v1 h-5zM48 108 h4 v1 h-4zM12 140 h4 v1 h-4zM16 142 h4 v1 h-4zM21 142 h9 v1 h-9zM31 142 h3 v1 h-3zM16 150 h5 v1 h-5zM33 154 h2 v1 h-2zM16 160 h3 v1 h-3zM20 160 h4 v1 h-4zM35 160 h3 v1 h-3zM16 162 h9 v1 h-9zM26 162 h1 v1 h-1zM33 162 h4 v1 h-4zM38 162 h7 v1 h-7zM25 164 h3 v1 h-3zM21 168 h8 v1 h-8zM21 174 h7 v1 h-7zM43 180 h3 v1 h-3zM47 180 h4 v1 h-4zM21 186 h7 v1 h-7zM6 198 h3 v1 h-3zM31 200 h8 v1 h-8zM40 200 h2 v1 h-2zM16 206 h5 v1 h-5zM23 206 h6 v1 h-6zM30 206 h3 v1 h-3zM40 206 h3 v1 h-3zM20 210 h3 v1 h-3zM36 214 h5 v1 h-5zM42 214 h4 v1 h-4zM47 214 h3 v1 h-3zM51 214 h2 v1 h-2zM26 218 h3 v1 h-3zM30 218 h8 v1 h-8zM55 218 h6 v1 h-6zM10 222 h2 v1 h-2zM23 238 h2 v1 h-2zM32 238 h3 v1 h-3zM6 256 h5 v1 h-5zM12 256 h7 v1 h-7zM36 262 h8 v1 h-8zM62 264 h3 v1 h-3zM66 264 h1 v1 h-1zM34 278 h3 v1 h-3zM36 284 h6 v1 h-6z" fill="#808080"/><path d="M1 0 h6 v1 h-6zM8 0 h1 v1 h-1zM3 4 h3 v1 h-3zM7 4 h6 v1 h-6zM5 6 h6 v1 h-6zM12 6 h1 v1 h-1zM7 8 h3 v1 h-3zM9 10 h3 v1 h-3zM10 12 h3 v1 h-3zM9 14 h3 v1 h-3zM11 16 h3 v1 h-3zM13 18 h7 v1 h-7zM23 18 h6 v1 h-6zM12 20 h3 v1 h-3zM10 22 h3 v1 h-3zM8 24 h3 v1 h-3zM6 26 h3 v1 h-3zM10 26 h4 v1 h-4zM4 28 h6 v1 h-6zM11 28 h4 v1 h-4zM3 32 h9 v1 h-9zM13 32 h1 v1 h-1zM5 34 h4 v1 h-4zM10 34 h3 v1 h-3zM7 36 h3 v1 h-3zM9 38 h3 v1 h-3zM11 40 h3 v1 h-3zM13 42 h2 v1 h-2zM57 42 h2 v1 h-2zM13 44 h3 v1 h-3zM15 46 h4 v1 h-4zM70 46 h4 v1 h-4zM15 48 h4 v1 h-4zM60 58 h4 v1 h-4zM15 62 h3 v1 h-3zM21 64 h1 v1 h-1zM59 72 h1 v1 h-1zM19 74 h4 v1 h-4zM15 78 h4 v1 h-4zM76 78 h4 v1 h-4zM15 80 h4 v1 h-4zM80 80 h4 v1 h-4zM14 82 h3 v1 h-3zM13 84 h3 v1 h-3zM15 86 h3 v1 h-3zM17 88 h3 v1 h-3zM19 90 h4 v1 h-4zM22 92 h1 v1 h-1zM53 94 h9 v1 h-9zM45 96 h3 v1 h-3zM49 96 h5 v1 h-5zM27 108 h6 v1 h-6zM40 140 h8 v1 h-8zM49 140 h4 v1 h-4zM20 144 h7 v1 h-7zM28 144 h3 v1 h-3zM32 144 h1 v1 h-1zM18 148 h4 v1 h-4zM23 148 h4 v1 h-4zM24 152 h7 v1 h-7zM44 160 h5 v1 h-5zM50 160 h4 v1 h-4zM55 160 h1 v1 h-1zM66 164 h8 v1 h-8zM23 166 h7 v1 h-7zM31 166 h1 v1 h-1zM12 168 h7 v1 h-7zM10 170 h4 v1 h-4zM15 170 h7 v1 h-7zM23 170 h1 v1 h-1zM45 172 h3 v1 h-3zM63 182 h6 v1 h-6zM70 182 h6 v1 h-6zM10 190 h8 v1 h-8zM19 190 h3 v1 h-3zM23 190 h1 v1 h-1zM10 198 h3 v1 h-3zM14 198 h1 v1 h-1zM10 200 h3 v1 h-3zM14 200 h8 v1 h-8zM24 200 h3 v1 h-3zM28 200 h2 v1 h-2zM20 204 h6 v1 h-6zM24 210 h9 v1 h-9zM34 210 h2 v1 h-2zM28 214 h7 v1 h-7zM39 222 h8 v1 h-8zM48 222 h3 v1 h-3zM16 228 h3 v1 h-3zM20 228 h5 v1 h-5zM8 234 h5 v1 h-5zM14 234 h4 v1 h-4zM19 234 h4 v1 h-4zM12 238 h4 v1 h-4zM8 250 h6 v1 h-6zM16 250 h4 v1 h-4zM21 250 h3 v1 h-3zM25 250 h4 v1 h-4zM36 250 h8 v1 h-8zM46 250 h6 v1 h-6zM53 250 h2 v1 h-2zM24 254 h2 v1 h-2zM24 262 h9 v1 h-9zM34 262 h1 v1 h-1zM19 264 h6 v1 h-6zM26 264 h6 v1 h-6zM20 268 h7 v1 h-7zM28 268 h2 v1 h-2zM14 272 h4 v1 h-4zM19 272 h1 v1 h-1zM33 274 h5 v1 h-5zM39 274 h1 v1 h-1zM56 280 h4 v1 h-4zM61 280 h2 v1 h-2zM30 282 h2 v1 h-2zM16 284 h2 v1 h-2zM19 284 h3 v1 h-3z" fill="#569cd6"/><path d="M2 2 h7 v1 h-7zM10 2 h8 v1 h-8zM19 2 h5 v1 h-5zM25 2 h4 v1 h-4zM30 2 h4 v1 h-4zM35 2 h6 v1 h-6zM42 2 h7 v1 h-7zM50 2 h7 v1 h-7zM58 2 h8 v1 h-8zM67 2 h4 v1 h-4zM72 2 h8 v1 h-8zM81 2 h3 v1 h-3zM85 2 h7 v1 h-7zM42 114 h5 v1 h-5zM49 114 h5 v1 h-5zM55 114 h5 v1 h-5zM61 114 h4 v1 h-4zM66 114 h4 v1 h-4zM71 114 h6 v1 h-6zM78 114 h3 v1 h-3zM42 116 h4 v1 h-4zM47 116 h4 v1 h-4zM53 116 h3 v1 h-3zM57 116 h7 v1 h-7zM65 116 h6 v1 h-6zM72 116 h5 v1 h-5zM78 116 h2 v1 h-2zM81 116 h3 v1 h-3zM85 116 h8 v1 h-8zM95 116 h5 v1 h-5zM42 118 h5 v1 h-5zM48 118 h5 v1 h-5zM55 118 h3 v1 h-3zM59 118 h5 v1 h-5zM65 118 h2 v1 h-2zM68 118 h7 v1 h-7zM76 118 h5 v1 h-5zM82 118 h2 v1 h-2zM85 118 h5 v1 h-5zM91 118 h6 v1 h-6zM98 118 h1 v1 h-1zM38 120 h8 v1 h-8zM48 120 h4 v1 h-4zM53 120 h1 v1 h-1zM55 120 h4 v1 h-4zM60 120 h3 v1 h-3zM64 120 h6 v1 h-6zM71 120 h1 v1 h-1zM34 122 h5 v1 h-5zM40 122 h8 v1 h-8zM50 122 h7 v1 h-7zM58 122 h3 v1 h-3zM62 122 h3 v1 h-3zM66 122 h9 v1 h-9zM76 122 h1 v1 h-1zM78 122 h5 v1 h-5zM34 126 h7 v1 h-7zM42 126 h3 v1 h-3zM46 126 h3 v1 h-3zM50 126 h2 v1 h-2zM53 126 h9 v1 h-9zM63 126 h4 v1 h-4zM68 126 h7 v1 h-7zM76 126 h3 v1 h-3zM80 126 h4 v1 h-4zM85 126 h8 v1 h-8zM32 130 h5 v1 h-5zM38 130 h5 v1 h-5zM44 130 h4 v1 h-4zM49 130 h5 v1 h-5zM56 130 h9 v1 h-9zM67 130 h3 v1 h-3zM71 130 h2 v1 h-2zM74 130 h3 v1 h-3zM78 130 h9 v1 h-9zM32 132 h8 v1 h-8zM41 132 h6 v1 h-6zM48 132 h5 v1 h-5zM54 132 h5 v1 h-5zM60 132 h8 v1 h-8zM69 132 h8 v1 h-8zM78 132 h1 v1 h-1zM80 132 h5 v1 h-5zM86 132 h7 v1 h-7zM94 132 h4 v1 h-4zM32 134 h6 v1 h-6zM39 134 h9 v1 h-9zM49 134 h1 v1 h-1zM51 134 h8 v1 h-8zM60 134 h3 v1 h-3zM64 134 h5 v1 h-5zM70 134 h5 v1 h-5zM76 134 h5 v1 h-5zM82 134 h3 v1 h-3zM32 136 h4 v1 h-4zM37 136 h6 v1 h-6zM44 136 h6 v1 h-6zM51 136 h8 v1 h-8zM61 136 h4 v1 h-4zM66 136 h4 v1 h-4zM71 136 h7 v1 h-7zM79 136 h5 v1 h-5zM85 136 h6 v1 h-6zM92 136 h4 v1 h-4zM32 138 h7 v1 h-7zM41 138 h6 v1 h-6zM48 138 h2 v1 h-2zM51 138 h6 v1 h-6zM58 138 h5 v1 h-5zM64 138 h1 v1 h-1zM66 138 h5 v1 h-5zM72 138 h5 v1 h-5zM78 138 h3 v1 h-3zM82 138 h3 v1 h-3zM86 138 h5 v1 h-5zM92 138 h8 v1 h-8zM101 138 h6 v1 h-6zM20 300 h7 v1 h-7zM28 300 h5 v1 h-5zM34 300 h2 v1 h-2zM9 302 h7 v1 h-7zM17 302 h1 v1 h-1zM29 302 h4 v1 h-4zM34 302 h6 v1 h-6zM41 302 h4 v1 h-4zM9 308 h7 v1 h-7zM17 308 h2 v1 h-2zM20 308 h4 v1 h-4zM26 308 h3 v1 h-3zM30 308 h5 v1 h-5zM9 310 h4 v1 h-4zM14 310 h5 v1 h-5zM20 310 h4 v1 h-4zM25 310 h2 v1 h-2zM9 312 h9 v1 h-9zM19 312 h3 v1 h-3zM23 312 h8 v1 h-8zM32 312 h7 v1 h-7zM51 312 h4 v1 h-4zM9 314 h9 v1 h-9zM19 314 h3 v1 h-3zM46 314 h5 v1 h-5zM52 314 h6 v1 h-6zM59 314 h1 v1 h-1z" fill="#6a9955"/><path d="M15 4 h4 v1 h-4zM21 4 h3 v1 h-3zM25 4 h4 v1 h-4zM30 4 h5 v1 h-5zM14 6 h5 v1 h-5zM20 6 h2 v1 h-2zM11 8 h2 v1 h-2zM13 10 h5 v1 h-5zM13 14 h5 v1 h-5zM38 14 h2 v1 h-2zM15 16 h5 v1 h-5zM15 32 h4 v1 h-4zM22 32 h6 v1 h-6zM29 32 h6 v1 h-6zM14 34 h5 v1 h-5zM20 34 h2 v1 h-2zM11 36 h2 v1 h-2zM13 38 h5 v1 h-5zM15 40 h5 v1 h-5zM16 42 h5 v1 h-5zM33 42 h3 v1 h-3zM37 42 h9 v1 h-9zM47 42 h5 v1 h-5zM17 44 h5 v1 h-5zM20 46 h5 v1 h-5zM40 46 h3 v1 h-3zM44 46 h6 v1 h-6zM51 46 h2 v1 h-2zM54 46 h4 v1 h-4zM59 46 h6 v1 h-6zM16 50 h5 v1 h-5zM16 52 h4 v1 h-4zM19 54 h6 v1 h-6zM26 54 h5 v1 h-5zM33 54 h5 v1 h-5zM39 54 h6 v1 h-6zM46 54 h3 v1 h-3zM54 54 h9 v1 h-9zM64 54 h3 v1 h-3zM69 54 h5 v1 h-5zM75 54 h9 v1 h-9zM85 54 h1 v1 h-1zM23 58 h6 v1 h-6zM30 58 h5 v1 h-5zM38 58 h7 v1 h-7zM46 58 h8 v1 h-8zM20 62 h3 v1 h-3zM24 62 h1 v1 h-1zM34 62 h4 v1 h-4zM40 62 h5 v1 h-5zM46 62 h4 v1 h-4zM51 62 h2 v1 h-2zM54 62 h8 v1 h-8zM63 62 h6 v1 h-6zM70 62 h1 v1 h-1zM18 66 h5 v1 h-5zM18 68 h5 v1 h-5zM25 68 h8 v1 h-8zM34 68 h4 v1 h-4zM39 68 h5 v1 h-5zM45 68 h7 v1 h-7zM53 68 h3 v1 h-3zM18 70 h5 v1 h-5zM24 70 h1 v1 h-1zM27 70 h7 v1 h-7zM35 70 h3 v1 h-3zM39 70 h1 v1 h-1zM41 70 h5 v1 h-5zM47 70 h7 v1 h-7zM22 72 h3 v1 h-3zM26 72 h7 v1 h-7zM34 72 h1 v1 h-1zM37 72 h7 v1 h-7zM45 72 h6 v1 h-6zM52 72 h2 v1 h-2zM20 78 h5 v1 h-5zM40 78 h7 v1 h-7zM48 78 h4 v1 h-4zM55 78 h5 v1 h-5zM20 80 h3 v1 h-3zM24 80 h1 v1 h-1zM50 80 h4 v1 h-4zM55 80 h4 v1 h-4zM60 80 h3 v1 h-3zM64 80 h5 v1 h-5zM17 84 h4 v1 h-4zM19 86 h5 v1 h-5zM22 88 h5 v1 h-5zM39 88 h5 v1 h-5zM47 88 h7 v1 h-7zM55 88 h3 v1 h-3zM24 90 h5 v1 h-5zM24 94 h7 v1 h-7zM32 94 h5 v1 h-5zM39 94 h6 v1 h-6zM46 94 h6 v1 h-6zM22 96 h2 v1 h-2zM56 96 h3 v1 h-3zM60 96 h3 v1 h-3zM64 96 h3 v1 h-3zM32 102 h4 v1 h-4zM40 102 h2 v1 h-2zM43 102 h8 v1 h-8zM52 102 h3 v1 h-3zM56 102 h1 v1 h-1zM22 106 h4 v1 h-4zM22 108 h3 v1 h-3zM17 140 h4 v1 h-4zM36 142 h9 v1 h-9zM34 144 h5 v1 h-5zM18 146 h3 v1 h-3zM22 146 h9 v1 h-9zM33 146 h4 v1 h-4zM35 150 h5 v1 h-5zM41 150 h2 v1 h-2zM18 152 h5 v1 h-5zM18 154 h3 v1 h-3zM39 158 h4 v1 h-4zM44 158 h6 v1 h-6zM25 160 h4 v1 h-4zM30 160 h4 v1 h-4zM55 162 h3 v1 h-3zM59 162 h4 v1 h-4zM16 166 h3 v1 h-3zM20 166 h2 v1 h-2zM33 166 h3 v1 h-3zM38 170 h4 v1 h-4zM22 172 h3 v1 h-3zM26 172 h4 v1 h-4zM31 172 h1 v1 h-1zM33 172 h7 v1 h-7zM41 172 h3 v1 h-3zM10 174 h5 v1 h-5zM16 174 h4 v1 h-4zM29 174 h6 v1 h-6zM10 176 h6 v1 h-6zM32 176 h4 v1 h-4zM37 176 h6 v1 h-6zM10 180 h3 v1 h-3zM14 180 h6 v1 h-6zM21 180 h3 v1 h-3zM52 180 h9 v1 h-9zM62 180 h1 v1 h-1zM33 182 h8 v1 h-8zM42 182 h6 v1 h-6zM49 182 h6 v1 h-6zM60 184 h4 v1 h-4zM65 184 h6 v1 h-6zM72 184 h2 v1 h-2zM10 186 h8 v1 h-8zM19 186 h1 v1 h-1zM19 196 h3 v1 h-3zM42 196 h4 v1 h-4zM43 200 h3 v1 h-3zM12 204 h4 v1 h-4zM17 204 h2 v1 h-2zM28 204 h4 v1 h-4zM33 204 h6 v1 h-6zM49 208 h4 v1 h-4zM14 216 h4 v1 h-4zM19 216 h3 v1 h-3zM23 216 h4 v1 h-4zM28 216 h6 v1 h-6zM35 216 h2 v1 h-2zM20 218 h5 v1 h-5zM10 220 h4 v1 h-4zM15 220 h6 v1 h-6zM13 222 h9 v1 h-9zM23 222 h1 v1 h-1zM25 222 h4 v1 h-4zM30 222 h7 v1 h-7zM6 226 h3 v1 h-3zM10 226 h5 v1 h-5zM26 228 h3 v1 h-3zM30 228 h1 v1 h-1zM32 228 h9 v1 h-9zM42 228 h2 v1 h-2zM40 234 h2 v1 h-2zM43 234 h2 v1 h-2zM6 236 h4 v1 h-4zM11 236 h6 v1 h-6zM18 236 h2 v1 h-2zM6 238 h3 v1 h-3zM10 238 h1 v1 h-1zM17 238 h3 v1 h-3zM21 238 h1 v1 h-1zM26 238 h5 v1 h-5zM10 244 h7 v1 h-7zM18 244 h4 v1 h-4zM23 244 h1 v1 h-1zM25 244 h4 v1 h-4zM38 246 h6 v1 h-6zM45 246 h3 v1 h-3zM49 246 h3 v1 h-3zM53 246 h5 v1 h-5zM59 246 h2 v1 h-2zM17 254 h5 v1 h-5zM10 262 h5 v1 h-5zM16 262 h7 v1 h-7zM6 264 h5 v1 h-5zM12 264 h4 v1 h-4zM17 264 h1 v1 h-1zM15 268 h4 v1 h-4zM21 272 h6 v1 h-6zM28 272 h2 v1 h-2zM14 280 h2 v1 h-2zM45 280 h4 v1 h-4zM50 280 h5 v1 h-5zM12 282 h4 v1 h-4zM17 282 h4 v1 h-4zM10 288 h3 v1 h-3zM14 288 h3 v1 h-3zM24 290 h3 v1 h-3zM28 290 h7 v1 h-7zM36 290 h1 v1 h-1zM8 292 h7 v1 h-7zM16 292 h1 v1 h-1zM28 292 h7 v1 h-7zM14 294 h9 v1 h-9zM24 294 h1 v1 h-1zM26 294 h3 v1 h-3zM9 298 h8 v1 h-8zM18 298 h6 v1 h-6zM25 298 h2 v1 h-2zM46 302 h9 v1 h-9zM56 302 h3 v1 h-3zM60 302 h3 v1 h-3zM45 310 h5 v1 h-5zM51 310 h5 v1 h-5zM40 312 h5 v1 h-5zM46 312 h4 v1 h-4zM9 316 h4 v1 h-4zM14 316 h5 v1 h-5zM20 316 h8 v1 h-8zM29 316 h2 v1 h-2zM32 316 h4 v1 h-4zM37 316 h4 v1 h-4zM42 316 h5 v1 h-5zM9 318 h4 v1 h-4zM14 318 h7 v1 h-7zM22 318 h4 v1 h-4zM28 318 h5 v1 h-5zM34 318 h6 v1 h-6zM41 318 h4 v1 h-4zM23 320 h6 v1 h-6zM30 320 h2 v1 h-2zM8 322 h5 v1 h-5zM14 322 h4 v1 h-4zM19 322 h5 v1 h-5zM32 322 h5 v1 h-5zM10 330 h3 v1 h-3zM4 332 h5 v1 h-5zM10 332 h4 v1 h-4zM8 334 h3 v1 h-3zM12 334 h8 v1 h-8zM21 334 h3 v1 h-3zM6 336 h3 v1 h-3zM23 336 h4 v1 h-4zM28 336 h7 v1 h-7zM36 336 h3 v1 h-3zM37 338 h9 v1 h-9zM47 338 h1 v1 h-1zM56 338 h6 v1 h-6zM8 340 h5 v1 h-5zM14 340 h2 v1 h-2zM17 340 h4 v1 h-4zM12 342 h7 v1 h-7zM20 342 h3 v1 h-3zM24 342 h5 v1 h-5zM30 342 h2 v1 h-2zM4 344 h8 v1 h-8zM20 346 h6 v1 h-6zM27 346 h1 v1 h-1zM10 348 h2 v1 h-2zM4 350 h7 v1 h-7zM49 352 h9 v1 h-9zM59 352 h4 v1 h-4zM8 354 h3 v1 h-3zM24 356 h3 v1 h-3zM47 356 h2 v1 h-2zM41 362 h2 v1 h-2zM4 370 h8 v1 h-8zM38 370 h3 v1 h-3zM35 372 h7 v1 h-7zM43 372 h4 v1 h-4zM48 372 h2 v1 h-2zM22 378 h5 v1 h-5zM28 378 h4 v1 h-4zM10 386 h2 v1 h-2zM11 390 h6 v1 h-6zM18 390 h3 v1 h-3zM22 390 h3 v1 h-3zM8 392 h5 v1 h-5zM14 392 h1 v1 h-1zM4 396 h3 v1 h-3zM24 396 h9 v1 h-9zM34 396 h5 v1 h-5zM26 398 h8 v1 h-8zM36 398 h7 v1 h-7zM44 398 h1 v1 h-1zM50 398 h6 v1 h-6zM57 398 h3 v1 h-3zM23 404 h6 v1 h-6zM30 404 h3 v1 h-3zM34 404 h5 v1 h-5zM22 406 h9 v1 h-9zM32 406 h5 v1 h-5zM38 406 h7 v1 h-7zM46 406 h3 v1 h-3zM50 406 h4 v1 h-4zM55 406 h1 v1 h-1zM57 406 h6 v1 h-6zM64 406 h3 v1 h-3zM14 408 h3 v1 h-3zM18 408 h5 v1 h-5zM24 408 h3 v1 h-3zM19 412 h7 v1 h-7zM27 412 h3 v1 h-3zM2 414 h5 v1 h-5zM39 414 h5 v1 h-5zM45 414 h5 v1 h-5zM51 414 h2 v1 h-2zM4 418 h6 v1 h-6zM11 418 h2 v1 h-2zM14 418 h9 v1 h-9zM24 418 h3 v1 h-3zM39 418 h3 v1 h-3zM43 418 h4 v1 h-4zM14 434 h4 v1 h-4zM19 434 h7 v1 h-7zM27 434 h1 v1 h-1zM15 436 h3 v1 h-3zM19 436 h6 v1 h-6zM26 436 h2 v1 h-2zM10 442 h9 v1 h-9zM20 442 h1 v1 h-1zM43 448 h6 v1 h-6zM10 450 h5 v1 h-5zM10 452 h8 v1 h-8zM19 452 h3 v1 h-3zM23 452 h4 v1 h-4zM28 452 h3 v1 h-3zM39 452 h6 v1 h-6zM46 452 h3 v1 h-3zM10 460 h5 v1 h-5zM16 460 h4 v1 h-4zM21 460 h8 v1 h-8zM30 460 h1 v1 h-1zM32 460 h6 v1 h-6zM39 460 h5 v1 h-5zM6 462 h3 v1 h-3zM6 470 h4 v1 h-4zM26 470 h8 v1 h-8zM8 472 h9 v1 h-9zM18 472 h4 v1 h-4zM23 472 h1 v1 h-1zM25 472 h6 v1 h-6zM16 482 h5 v1 h-5zM22 482 h2 v1 h-2zM36 484 h8 v1 h-8zM50 484 h5 v1 h-5zM17 492 h4 v1 h-4zM4 500 h9 v1 h-9zM14 500 h1 v1 h-1zM4 502 h4 v1 h-4zM10 502 h4 v1 h-4zM16 502 h4 v1 h-4zM21 502 h7 v1 h-7zM58 504 h5 v1 h-5zM64 504 h7 v1 h-7zM60 510 h7 v1 h-7zM8 514 h6 v1 h-6zM15 514 h3 v1 h-3zM19 514 h3 v1 h-3zM2 516 h5 v1 h-5zM8 516 h3 v1 h-3zM14 520 h4 v1 h-4zM19 520 h4 v1 h-4zM24 520 h2 v1 h-2zM26 522 h2 v1 h-2zM29 522 h6 v1 h-6zM36 522 h3 v1 h-3zM40 522 h3 v1 h-3zM44 522 h5 v1 h-5zM13 526 h8 v1 h-8zM22 526 h5 v1 h-5zM42 526 h6 v1 h-6zM49 526 h4 v1 h-4zM54 526 h4 v1 h-4zM27 532 h4 v1 h-4zM32 532 h6 v1 h-6zM39 532 h1 v1 h-1zM52 542 h5 v1 h-5zM12 546 h3 v1 h-3zM16 546 h8 v1 h-8zM25 546 h3 v1 h-3zM29 546 h4 v1 h-4zM34 546 h8 v1 h-8zM17 552 h7 v1 h-7zM25 552 h5 v1 h-5zM31 552 h5 v1 h-5zM10 554 h3 v1 h-3zM14 554 h3 v1 h-3zM26 558 h5 v1 h-5zM32 558 h4 v1 h-4zM37 558 h2 v1 h-2zM4 562 h8 v1 h-8zM13 562 h3 v1 h-3zM51 566 h5 v1 h-5zM57 566 h5 v1 h-5zM63 566 h1 v1 h-1zM65 566 h9 v1 h-9zM2 570 h5 v1 h-5zM2 572 h3 v1 h-3zM6 572 h7 v1 h-7zM14 572 h2 v1 h-2zM2 574 h9 v1 h-9zM2 576 h4 v1 h-4zM7 576 h7 v1 h-7zM2 578 h6 v1 h-6zM9 578 h5 v1 h-5zM2 580 h7 v1 h-7zM10 580 h3 v1 h-3zM2 588 h4 v1 h-4zM2 590 h9 v1 h-9zM2 592 h6 v1 h-6zM2 594 h3 v1 h-3zM6 594 h5 v1 h-5zM12 594 h2 v1 h-2zM2 596 h6 v1 h-6zM9 596 h5 v1 h-5zM15 596 h1 v1 h-1zM2 598 h6 v1 h-6zM2 606 h7 v1 h-7zM2 608 h5 v1 h-5zM2 610 h6 v1 h-6zM2 612 h3 v1 h-3zM6 612 h2 v1 h-2zM2 614 h6 v1 h-6zM9 614 h6 v1 h-6zM2 616 h6 v1 h-6zM9 616 h5 v1 h-5zM2 624 h9 v1 h-9zM2 626 h8 v1 h-8zM11 626 h4 v1 h-4zM2 628 h4 v1 h-4zM7 628 h8 v1 h-8zM2 630 h6 v1 h-6zM2 632 h3 v1 h-3zM6 632 h2 v1 h-2zM2 634 h8 v1 h-8zM11 634 h2 v1 h-2zM2 642 h6 v1 h-6zM9 642 h4 v1 h-4zM2 644 h7 v1 h-7zM2 646 h6 v1 h-6zM2 648 h6 v1 h-6zM2 650 h5 v1 h-5zM8 650 h4 v1 h-4zM2 652 h9 v1 h-9zM12 652 h2 v1 h-2zM2 660 h4 v1 h-4zM7 660 h4 v1 h-4zM2 662 h9 v1 h-9zM12 662 h2 v1 h-2zM2 664 h3 v1 h-3zM6 664 h9 v1 h-9zM2 666 h7 v1 h-7zM10 666 h5 v1 h-5zM2 668 h4 v1 h-4zM7 668 h5 v1 h-5zM13 668 h3 v1 h-3zM2 670 h3 v1 h-3zM6 670 h4 v1 h-4zM2 678 h4 v1 h-4zM7 678 h6 v1 h-6zM2 680 h4 v1 h-4zM7 680 h1 v1 h-1zM2 682 h5 v1 h-5zM2 684 h6 v1 h-6zM9 684 h4 v1 h-4zM2 686 h6 v1 h-6zM2 688 h8 v1 h-8zM11 688 h3 v1 h-3zM2 696 h3 v1 h-3zM6 696 h1 v1 h-1zM2 698 h5 v1 h-5zM8 698 h6 v1 h-6zM15 698 h1 v1 h-1zM2 700 h5 v1 h-5zM2 702 h7 v1 h-7zM10 702 h1 v1 h-1zM2 704 h3 v1 h-3zM6 704 h4 v1 h-4zM2 706 h7 v1 h-7zM2 714 h6 v1 h-6zM9 714 h2 v1 h-2zM2 716 h3 v1 h-3zM6 716 h6 v1 h-6zM2 718 h5 v1 h-5zM8 718 h3 v1 h-3zM12 718 h3 v1 h-3zM2 720 h6 v1 h-6zM9 720 h5 v1 h-5zM2 722 h3 v1 h-3zM6 722 h1 v1 h-1zM2 724 h5 v1 h-5zM8 724 h6 v1 h-6zM2 732 h3 v1 h-3zM6 732 h2 v1 h-2zM2 734 h7 v1 h-7zM10 734 h2 v1 h-2zM2 736 h6 v1 h-6zM2 738 h9 v1 h-9zM12 738 h2 v1 h-2zM2 740 h7 v1 h-7zM2 742 h9 v1 h-9zM12 742 h3 v1 h-3zM2 750 h7 v1 h-7zM2 752 h5 v1 h-5zM2 754 h7 v1 h-7zM10 754 h2 v1 h-2zM2 756 h5 v1 h-5zM8 756 h5 v1 h-5zM14 756 h2 v1 h-2zM2 758 h7 v1 h-7zM10 758 h6 v1 h-6zM2 760 h5 v1 h-5zM2 768 h4 v1 h-4zM7 768 h3 v1 h-3zM2 770 h5 v1 h-5zM8 770 h5 v1 h-5zM2 772 h4 v1 h-4zM7 772 h3 v1 h-3zM11 772 h3 v1 h-3zM2 774 h9 v1 h-9zM12 774 h3 v1 h-3zM2 776 h7 v1 h-7zM10 776 h4 v1 h-4zM2 778 h7 v1 h-7zM10 778 h2 v1 h-2zM2 786 h4 v1 h-4zM7 786 h2 v1 h-2zM2 788 h5 v1 h-5zM2 790 h5 v1 h-5zM2 792 h9 v1 h-9zM12 792 h3 v1 h-3zM2 794 h6 v1 h-6zM9 794 h1 v1 h-1zM2 796 h7 v1 h-7zM2 804 h5 v1 h-5zM2 806 h7 v1 h-7zM2 808 h5 v1 h-5zM8 808 h3 v1 h-3zM2 810 h4 v1 h-4zM7 810 h1 v1 h-1zM2 812 h3 v1 h-3zM6 812 h4 v1 h-4zM11 812 h3 v1 h-3zM15 812 h1 v1 h-1zM2 814 h7 v1 h-7zM10 814 h2 v1 h-2zM2 822 h9 v1 h-9zM2 824 h7 v1 h-7zM10 824 h3 v1 h-3zM2 826 h7 v1 h-7zM10 826 h4 v1 h-4zM2 828 h4 v1 h-4zM7 828 h4 v1 h-4zM2 830 h4 v1 h-4zM2 832 h5 v1 h-5zM8 832 h4 v1 h-4zM13 832 h2 v1 h-2zM2 840 h5 v1 h-5zM8 840 h3 v1 h-3zM2 842 h8 v1 h-8zM2 844 h4 v1 h-4zM7 844 h2 v1 h-2zM2 846 h6 v1 h-6zM2 848 h7 v1 h-7zM10 848 h2 v1 h-2zM2 850 h3 v1 h-3zM6 850 h8 v1 h-8zM2 858 h5 v1 h-5zM8 858 h4 v1 h-4zM13 858 h3 v1 h-3zM2 860 h5 v1 h-5zM8 860 h5 v1 h-5zM2 862 h9 v1 h-9zM2 864 h9 v1 h-9zM12 864 h4 v1 h-4zM2 866 h4 v1 h-4zM7 866 h2 v1 h-2zM2 868 h9 v1 h-9zM12 868 h4 v1 h-4zM2 876 h4 v1 h-4zM2 878 h4 v1 h-4zM7 878 h1 v1 h-1zM2 880 h6 v1 h-6zM9 880 h1 v1 h-1zM2 882 h3 v1 h-3zM6 882 h5 v1 h-5zM12 882 h3 v1 h-3zM2 884 h6 v1 h-6zM2 886 h6 v1 h-6zM2 894 h5 v1 h-5zM8 894 h2 v1 h-2zM2 896 h3 v1 h-3zM6 896 h5 v1 h-5zM2 898 h6 v1 h-6zM2 900 h8 v1 h-8zM11 900 h5 v1 h-5zM2 902 h6 v1 h-6zM2 904 h3 v1 h-3zM6 904 h6 v1 h-6zM2 912 h7 v1 h-7zM10 912 h1 v1 h-1zM2 914 h6 v1 h-6zM2 916 h7 v1 h-7zM10 916 h1 v1 h-1z" fill="#9cdcfe"/><path d="M19 4 h1 v1 h-1zM20 4 h1 v1 h-1zM35 4 h1 v1 h-1zM13 8 h1 v1 h-1zM18 10 h1 v1 h-1zM18 14 h1 v1 h-1zM40 14 h1 v1 h-1zM20 16 h1 v1 h-1zM19 32 h1 v1 h-1zM20 32 h1 v1 h-1zM21 32 h1 v1 h-1zM36 32 h1 v1 h-1zM13 36 h1 v1 h-1zM18 38 h1 v1 h-1zM20 40 h1 v1 h-1zM21 42 h1 v1 h-1zM46 42 h1 v1 h-1zM22 44 h1 v1 h-1zM25 46 h1 v1 h-1zM34 46 h1 v1 h-1zM35 46 h1 v1 h-1zM36 46 h1 v1 h-1zM53 46 h1 v1 h-1zM21 50 h1 v1 h-1zM20 52 h1 v1 h-1zM21 52 h1 v1 h-1zM18 54 h1 v1 h-1zM32 54 h1 v1 h-1zM51 54 h1 v1 h-1zM52 54 h1 v1 h-1zM67 54 h1 v1 h-1zM68 54 h1 v1 h-1zM16 56 h1 v1 h-1zM17 58 h1 v1 h-1zM18 58 h1 v1 h-1zM19 58 h1 v1 h-1zM36 58 h1 v1 h-1zM37 58 h1 v1 h-1zM25 62 h1 v1 h-1zM38 62 h1 v1 h-1zM39 62 h1 v1 h-1zM53 62 h1 v1 h-1zM71 62 h1 v1 h-1zM17 64 h1 v1 h-1zM18 64 h1 v1 h-1zM19 64 h1 v1 h-1zM23 66 h1 v1 h-1zM23 68 h1 v1 h-1zM24 68 h1 v1 h-1zM38 68 h1 v1 h-1zM56 68 h1 v1 h-1zM25 70 h1 v1 h-1zM26 70 h1 v1 h-1zM40 70 h1 v1 h-1zM55 70 h1 v1 h-1zM66 70 h1 v1 h-1zM75 70 h1 v1 h-1zM35 72 h1 v1 h-1zM36 72 h1 v1 h-1zM25 78 h1 v1 h-1zM34 78 h1 v1 h-1zM35 78 h1 v1 h-1zM36 78 h1 v1 h-1zM53 78 h1 v1 h-1zM54 78 h1 v1 h-1zM62 78 h1 v1 h-1zM63 78 h1 v1 h-1zM65 78 h1 v1 h-1zM66 78 h1 v1 h-1zM67 78 h1 v1 h-1zM68 78 h1 v1 h-1zM69 78 h1 v1 h-1zM70 78 h1 v1 h-1zM25 80 h1 v1 h-1zM34 80 h1 v1 h-1zM35 80 h1 v1 h-1zM36 80 h1 v1 h-1zM63 80 h1 v1 h-1zM70 80 h1 v1 h-1zM71 80 h1 v1 h-1zM22 84 h1 v1 h-1zM24 86 h1 v1 h-1zM27 88 h1 v1 h-1zM45 88 h1 v1 h-1zM46 88 h1 v1 h-1zM59 88 h1 v1 h-1zM29 90 h1 v1 h-1zM39 96 h5 v1 h-5zM22 100 h4 v1 h-4zM27 100 h8 v1 h-8zM20 102 h9 v1 h-9zM30 102 h1 v1 h-1zM27 106 h3 v1 h-3zM31 106 h1 v1 h-1zM40 144 h8 v1 h-8zM49 144 h2 v1 h-2zM22 150 h2 v1 h-2zM25 158 h4 v1 h-4zM46 162 h3 v1 h-3zM50 162 h4 v1 h-4zM16 164 h6 v1 h-6zM23 164 h1 v1 h-1zM37 166 h4 v1 h-4zM42 166 h6 v1 h-6zM25 170 h5 v1 h-5zM10 172 h6 v1 h-6zM17 172 h4 v1 h-4zM25 180 h2 v1 h-2zM24 182 h5 v1 h-5zM30 182 h2 v1 h-2zM56 182 h6 v1 h-6zM10 184 h9 v1 h-9zM20 184 h4 v1 h-4zM6 192 h8 v1 h-8zM15 192 h4 v1 h-4zM20 192 h3 v1 h-3zM24 192 h7 v1 h-7zM32 192 h5 v1 h-5zM28 196 h6 v1 h-6zM35 196 h3 v1 h-3zM39 196 h2 v1 h-2zM12 202 h2 v1 h-2zM27 208 h7 v1 h-7zM35 208 h5 v1 h-5zM41 208 h5 v1 h-5zM47 208 h1 v1 h-1zM18 214 h4 v1 h-4zM23 214 h4 v1 h-4zM30 220 h7 v1 h-7zM38 220 h3 v1 h-3zM31 226 h2 v1 h-2zM8 228 h7 v1 h-7zM23 240 h4 v1 h-4zM6 246 h4 v1 h-4zM11 246 h4 v1 h-4zM16 246 h1 v1 h-1zM32 246 h2 v1 h-2zM35 246 h2 v1 h-2zM12 252 h4 v1 h-4zM17 252 h4 v1 h-4zM8 254 h8 v1 h-8zM20 256 h3 v1 h-3zM24 256 h8 v1 h-8zM46 262 h7 v1 h-7zM48 264 h9 v1 h-9zM58 264 h3 v1 h-3zM10 270 h5 v1 h-5zM16 270 h8 v1 h-8zM39 278 h2 v1 h-2zM30 280 h6 v1 h-6zM37 280 h7 v1 h-7zM28 284 h4 v1 h-4zM33 284 h2 v1 h-2zM18 288 h4 v1 h-4zM8 290 h6 v1 h-6zM15 290 h3 v1 h-3zM18 292 h8 v1 h-8zM2 320 h5 v1 h-5zM8 320 h6 v1 h-6zM15 320 h1 v1 h-1zM48 320 h5 v1 h-5zM54 320 h3 v1 h-3zM58 320 h1 v1 h-1zM36 328 h9 v1 h-9zM46 328 h1 v1 h-1zM20 330 h7 v1 h-7zM28 330 h6 v1 h-6zM57 332 h6 v1 h-6zM64 332 h6 v1 h-6zM27 338 h3 v1 h-3zM31 338 h5 v1 h-5zM33 342 h7 v1 h-7zM64 352 h7 v1 h-7zM72 352 h4 v1 h-4zM28 356 h6 v1 h-6zM35 356 h1 v1 h-1zM14 372 h4 v1 h-4zM10 382 h9 v1 h-9zM44 386 h9 v1 h-9zM54 386 h5 v1 h-5zM18 398 h3 v1 h-3zM22 398 h3 v1 h-3zM8 416 h5 v1 h-5zM14 416 h4 v1 h-4zM27 416 h3 v1 h-3zM31 416 h6 v1 h-6zM28 418 h5 v1 h-5zM34 418 h4 v1 h-4zM48 418 h5 v1 h-5zM54 418 h4 v1 h-4zM59 418 h4 v1 h-4zM7 436 h7 v1 h-7zM41 442 h6 v1 h-6zM48 442 h4 v1 h-4zM34 450 h5 v1 h-5zM40 450 h1 v1 h-1zM17 454 h7 v1 h-7zM25 454 h3 v1 h-3zM45 460 h8 v1 h-8zM25 462 h6 v1 h-6zM32 462 h3 v1 h-3zM36 462 h5 v1 h-5zM11 470 h4 v1 h-4zM16 470 h6 v1 h-6zM23 470 h2 v1 h-2zM31 482 h2 v1 h-2zM8 490 h4 v1 h-4zM30 492 h4 v1 h-4zM35 492 h8 v1 h-8zM10 496 h6 v1 h-6zM17 496 h2 v1 h-2zM42 510 h4 v1 h-4zM47 510 h3 v1 h-3zM51 510 h1 v1 h-1zM53 510 h4 v1 h-4zM58 510 h1 v1 h-1zM70 518 h5 v1 h-5zM76 518 h4 v1 h-4zM4 524 h4 v1 h-4zM9 524 h3 v1 h-3zM13 524 h6 v1 h-6zM10 528 h4 v1 h-4zM15 528 h9 v1 h-9zM25 528 h1 v1 h-1zM48 538 h6 v1 h-6zM10 542 h4 v1 h-4zM15 542 h6 v1 h-6zM36 542 h6 v1 h-6zM43 542 h4 v1 h-4zM48 542 h3 v1 h-3zM17 562 h5 v1 h-5zM23 562 h5 v1 h-5zM29 562 h1 v1 h-1zM6 564 h2 v1 h-2zM32 568 h1 v1 h-1zM7 570 h1 v1 h-1zM16 572 h1 v1 h-1zM11 574 h1 v1 h-1zM14 576 h1 v1 h-1zM15 578 h1 v1 h-1zM13 580 h1 v1 h-1zM0 582 h1 v1 h-1zM37 586 h1 v1 h-1zM7 588 h1 v1 h-1zM11 590 h1 v1 h-1zM8 592 h1 v1 h-1zM14 594 h1 v1 h-1zM16 596 h1 v1 h-1zM8 598 h1 v1 h-1zM0 600 h1 v1 h-1zM35 604 h1 v1 h-1zM9 606 h1 v1 h-1zM7 608 h1 v1 h-1zM8 610 h1 v1 h-1zM8 612 h1 v1 h-1zM15 614 h1 v1 h-1zM14 616 h1 v1 h-1zM0 618 h1 v1 h-1zM36 622 h1 v1 h-1zM11 624 h1 v1 h-1zM16 626 h1 v1 h-1zM15 628 h1 v1 h-1zM8 630 h1 v1 h-1zM8 632 h1 v1 h-1zM13 634 h1 v1 h-1zM0 636 h1 v1 h-1zM31 640 h1 v1 h-1zM13 642 h1 v1 h-1zM10 644 h1 v1 h-1zM8 646 h1 v1 h-1zM8 648 h1 v1 h-1zM12 650 h1 v1 h-1zM14 652 h1 v1 h-1zM0 654 h1 v1 h-1zM23 658 h1 v1 h-1zM11 660 h1 v1 h-1zM14 662 h1 v1 h-1zM15 664 h1 v1 h-1zM15 666 h1 v1 h-1zM16 668 h1 v1 h-1zM10 670 h1 v1 h-1zM0 672 h1 v1 h-1zM34 676 h1 v1 h-1zM13 678 h1 v1 h-1zM8 680 h1 v1 h-1zM7 682 h1 v1 h-1zM13 684 h1 v1 h-1zM8 686 h1 v1 h-1zM14 688 h1 v1 h-1zM0 690 h1 v1 h-1zM28 694 h1 v1 h-1zM7 696 h1 v1 h-1zM16 698 h1 v1 h-1zM7 700 h1 v1 h-1zM11 702 h1 v1 h-1zM11 704 h1 v1 h-1zM10 706 h1 v1 h-1zM0 708 h1 v1 h-1zM38 712 h1 v1 h-1zM11 714 h1 v1 h-1zM12 716 h1 v1 h-1zM15 718 h1 v1 h-1zM14 720 h1 v1 h-1zM7 722 h1 v1 h-1zM14 724 h1 v1 h-1zM0 726 h1 v1 h-1zM14 730 h1 v1 h-1zM8 732 h1 v1 h-1zM12 734 h1 v1 h-1zM8 736 h1 v1 h-1zM14 738 h1 v1 h-1zM9 740 h1 v1 h-1zM15 742 h1 v1 h-1zM0 744 h1 v1 h-1zM26 748 h1 v1 h-1zM9 750 h1 v1 h-1zM7 752 h1 v1 h-1zM12 754 h1 v1 h-1zM16 756 h1 v1 h-1zM16 758 h1 v1 h-1zM8 760 h1 v1 h-1zM0 762 h1 v1 h-1zM11 766 h1 v1 h-1zM10 768 h1 v1 h-1zM13 770 h1 v1 h-1zM14 772 h1 v1 h-1zM15 774 h1 v1 h-1zM15 776 h1 v1 h-1zM12 778 h1 v1 h-1zM0 780 h1 v1 h-1zM31 784 h1 v1 h-1zM9 786 h1 v1 h-1zM7 788 h1 v1 h-1zM7 790 h1 v1 h-1zM15 792 h1 v1 h-1zM10 794 h1 v1 h-1zM10 796 h1 v1 h-1zM0 798 h1 v1 h-1zM10 802 h1 v1 h-1zM7 804 h1 v1 h-1zM10 806 h1 v1 h-1zM11 808 h1 v1 h-1zM8 810 h1 v1 h-1zM16 812 h1 v1 h-1zM12 814 h1 v1 h-1zM0 816 h1 v1 h-1zM19 820 h1 v1 h-1zM11 822 h1 v1 h-1zM13 824 h1 v1 h-1zM14 826 h1 v1 h-1zM11 828 h1 v1 h-1zM7 830 h1 v1 h-1zM15 832 h1 v1 h-1zM0 834 h1 v1 h-1zM15 838 h1 v1 h-1zM11 840 h1 v1 h-1zM11 842 h1 v1 h-1zM9 844 h1 v1 h-1zM8 846 h1 v1 h-1zM12 848 h1 v1 h-1zM14 850 h1 v1 h-1zM0 852 h1 v1 h-1zM9 856 h1 v1 h-1zM16 858 h1 v1 h-1zM13 860 h1 v1 h-1zM11 862 h1 v1 h-1zM16 864 h1 v1 h-1zM9 866 h1 v1 h-1zM16 868 h1 v1 h-1zM0 870 h1 v1 h-1zM23 874 h1 v1 h-1zM7 876 h1 v1 h-1zM8 878 h1 v1 h-1zM10 880 h1 v1 h-1zM16 882 h1 v1 h-1zM9 884 h1 v1 h-1zM8 886 h1 v1 h-1zM0 888 h1 v1 h-1zM40 892 h1 v1 h-1zM10 894 h1 v1 h-1zM11 896 h1 v1 h-1zM8 898 h1 v1 h-1zM16 900 h1 v1 h-1zM8 902 h1 v1 h-1zM12 904 h1 v1 h-1zM0 906 h1 v1 h-1zM9 910 h1 v1 h-1zM11 912 h1 v1 h-1zM9 914 h1 v1 h-1zM11 916 h1 v1 h-1z" fill="#d4d4d4"/><path d="M14 8 h1 v1 h-1zM15 8 h4 v1 h-4zM20 8 h3 v1 h-3zM24 8 h3 v1 h-3zM19 10 h1 v1 h-1zM20 10 h5 v1 h-5zM26 10 h2 v1 h-2zM19 14 h1 v1 h-1zM20 14 h3 v1 h-3zM24 14 h9 v1 h-9zM34 14 h3 v1 h-3zM41 14 h1 v1 h-1zM42 14 h4 v1 h-4zM47 14 h7 v1 h-7zM55 14 h4 v1 h-4zM21 16 h1 v1 h-1zM22 16 h5 v1 h-5zM28 16 h6 v1 h-6zM35 16 h3 v1 h-3zM14 36 h1 v1 h-1zM15 36 h6 v1 h-6zM22 36 h5 v1 h-5zM19 38 h1 v1 h-1zM20 38 h8 v1 h-8zM21 40 h1 v1 h-1zM22 40 h8 v1 h-8zM31 40 h3 v1 h-3zM22 42 h1 v1 h-1zM23 42 h6 v1 h-6zM23 44 h1 v1 h-1zM24 44 h8 v1 h-8zM26 46 h1 v1 h-1zM27 46 h6 v1 h-6zM22 50 h1 v1 h-1zM23 50 h6 v1 h-6zM26 62 h1 v1 h-1zM27 62 h4 v1 h-4zM32 62 h1 v1 h-1zM24 66 h1 v1 h-1zM25 66 h3 v1 h-3zM29 66 h3 v1 h-3zM33 66 h5 v1 h-5zM39 66 h1 v1 h-1zM57 70 h3 v1 h-3zM61 70 h4 v1 h-4zM68 70 h7 v1 h-7zM26 78 h1 v1 h-1zM27 78 h3 v1 h-3zM31 78 h2 v1 h-2zM26 80 h1 v1 h-1zM27 80 h6 v1 h-6zM23 84 h1 v1 h-1zM24 84 h6 v1 h-6zM31 84 h1 v1 h-1zM25 86 h1 v1 h-1zM26 86 h5 v1 h-5zM32 86 h9 v1 h-9zM42 86 h4 v1 h-4zM28 88 h1 v1 h-1zM29 88 h8 v1 h-8zM30 90 h1 v1 h-1zM31 90 h4 v1 h-4zM36 90 h6 v1 h-6zM25 96 h3 v1 h-3zM29 96 h4 v1 h-4zM34 96 h4 v1 h-4zM37 100 h4 v1 h-4zM37 102 h2 v1 h-2zM18 104 h4 v1 h-4zM23 104 h1 v1 h-1zM34 108 h5 v1 h-5zM40 108 h1 v1 h-1zM22 112 h6 v1 h-6zM22 140 h7 v1 h-7zM30 140 h9 v1 h-9zM47 142 h3 v1 h-3zM51 142 h3 v1 h-3zM25 150 h6 v1 h-6zM32 150 h2 v1 h-2zM22 154 h5 v1 h-5zM28 154 h3 v1 h-3zM36 154 h7 v1 h-7zM44 154 h3 v1 h-3zM18 158 h6 v1 h-6zM30 158 h7 v1 h-7zM51 158 h7 v1 h-7zM59 158 h2 v1 h-2zM40 160 h3 v1 h-3zM28 162 h4 v1 h-4zM30 164 h4 v1 h-4zM35 164 h6 v1 h-6zM42 164 h6 v1 h-6zM49 164 h6 v1 h-6zM56 164 h3 v1 h-3zM60 164 h5 v1 h-5zM31 170 h6 v1 h-6zM18 176 h3 v1 h-3zM22 176 h8 v1 h-8zM28 180 h4 v1 h-4zM33 180 h8 v1 h-8zM14 182 h6 v1 h-6zM21 182 h2 v1 h-2zM25 184 h5 v1 h-5zM31 184 h5 v1 h-5zM37 184 h5 v1 h-5zM43 184 h6 v1 h-6zM50 184 h9 v1 h-9zM30 186 h8 v1 h-8zM39 186 h1 v1 h-1zM6 196 h4 v1 h-4zM11 196 h5 v1 h-5zM17 196 h1 v1 h-1zM23 196 h4 v1 h-4zM15 202 h3 v1 h-3zM34 206 h5 v1 h-5zM44 206 h4 v1 h-4zM16 208 h4 v1 h-4zM21 208 h3 v1 h-3zM25 208 h1 v1 h-1zM37 210 h3 v1 h-3zM10 218 h4 v1 h-4zM15 218 h3 v1 h-3zM40 218 h5 v1 h-5zM46 218 h2 v1 h-2zM49 218 h5 v1 h-5zM23 220 h3 v1 h-3zM27 220 h2 v1 h-2zM16 226 h7 v1 h-7zM24 226 h3 v1 h-3zM28 226 h2 v1 h-2zM34 226 h7 v1 h-7zM42 226 h1 v1 h-1zM8 232 h9 v1 h-9zM19 232 h3 v1 h-3zM24 234 h6 v1 h-6zM32 234 h7 v1 h-7zM10 240 h5 v1 h-5zM16 240 h4 v1 h-4zM21 240 h1 v1 h-1zM28 240 h6 v1 h-6zM18 246 h8 v1 h-8zM27 246 h4 v1 h-4zM30 250 h3 v1 h-3zM34 250 h1 v1 h-1zM6 258 h5 v1 h-5zM12 258 h1 v1 h-1zM6 262 h3 v1 h-3zM33 264 h4 v1 h-4zM38 264 h6 v1 h-6zM45 264 h2 v1 h-2zM6 268 h8 v1 h-8zM18 274 h3 v1 h-3zM22 274 h7 v1 h-7zM30 274 h2 v1 h-2zM18 278 h2 v1 h-2zM21 278 h5 v1 h-5zM27 278 h5 v1 h-5zM42 278 h4 v1 h-4zM17 280 h4 v1 h-4zM22 280 h3 v1 h-3zM26 280 h3 v1 h-3zM22 282 h7 v1 h-7zM23 284 h4 v1 h-4zM4 294 h8 v1 h-8zM28 298 h7 v1 h-7zM9 300 h3 v1 h-3zM13 300 h6 v1 h-6zM19 302 h9 v1 h-9zM9 304 h5 v1 h-5zM15 304 h6 v1 h-6zM23 304 h9 v1 h-9zM28 310 h3 v1 h-3zM32 310 h4 v1 h-4zM37 310 h3 v1 h-3zM41 310 h3 v1 h-3zM23 314 h8 v1 h-8zM32 314 h6 v1 h-6zM39 314 h1 v1 h-1zM41 314 h4 v1 h-4zM48 316 h5 v1 h-5zM54 316 h4 v1 h-4zM46 318 h6 v1 h-6zM35 330 h3 v1 h-3zM39 330 h4 v1 h-4zM12 338 h5 v1 h-5zM18 338 h2 v1 h-2zM21 338 h5 v1 h-5zM49 338 h5 v1 h-5zM4 352 h4 v1 h-4zM9 352 h4 v1 h-4zM14 352 h4 v1 h-4zM37 356 h7 v1 h-7zM45 356 h1 v1 h-1zM8 362 h3 v1 h-3zM44 362 h4 v1 h-4zM49 362 h3 v1 h-3zM53 362 h5 v1 h-5zM13 364 h8 v1 h-8zM22 364 h4 v1 h-4zM27 364 h2 v1 h-2zM13 370 h5 v1 h-5zM4 372 h8 v1 h-8zM19 372 h6 v1 h-6zM26 372 h6 v1 h-6zM33 372 h1 v1 h-1zM51 372 h3 v1 h-3zM2 378 h4 v1 h-4zM7 378 h3 v1 h-3zM11 378 h1 v1 h-1zM13 386 h4 v1 h-4zM33 386 h9 v1 h-9zM2 388 h2 v1 h-2zM6 394 h4 v1 h-4zM8 396 h3 v1 h-3zM12 396 h8 v1 h-8zM21 396 h2 v1 h-2zM2 398 h5 v1 h-5zM8 398 h7 v1 h-7zM16 398 h1 v1 h-1zM10 406 h4 v1 h-4zM15 406 h4 v1 h-4zM20 406 h1 v1 h-1zM8 414 h4 v1 h-4zM13 414 h7 v1 h-7zM39 416 h4 v1 h-4zM44 416 h3 v1 h-3zM18 420 h3 v1 h-3zM2 434 h5 v1 h-5zM43 434 h8 v1 h-8zM52 434 h2 v1 h-2zM2 438 h3 v1 h-3zM6 438 h5 v1 h-5zM12 438 h1 v1 h-1zM8 454 h3 v1 h-3zM12 454 h4 v1 h-4zM4 456 h3 v1 h-3zM8 458 h3 v1 h-3zM10 462 h5 v1 h-5zM42 462 h5 v1 h-5zM12 482 h3 v1 h-3zM25 482 h5 v1 h-5zM32 484 h3 v1 h-3zM20 498 h6 v1 h-6zM29 502 h7 v1 h-7zM37 502 h5 v1 h-5zM15 504 h4 v1 h-4zM20 504 h8 v1 h-8zM10 510 h4 v1 h-4zM15 510 h5 v1 h-5zM21 510 h4 v1 h-4zM8 518 h5 v1 h-5zM2 520 h4 v1 h-4zM7 520 h4 v1 h-4zM12 520 h1 v1 h-1zM27 528 h7 v1 h-7zM4 538 h8 v1 h-8zM13 538 h7 v1 h-7zM38 538 h4 v1 h-4zM43 538 h4 v1 h-4zM58 542 h6 v1 h-6zM65 542 h5 v1 h-5zM13 552 h3 v1 h-3zM19 554 h6 v1 h-6zM47 556 h5 v1 h-5zM12 558 h5 v1 h-5zM18 558 h6 v1 h-6zM7 566 h7 v1 h-7zM15 566 h2 v1 h-2zM9 570 h3 v1 h-3zM13 574 h4 v1 h-4zM18 574 h8 v1 h-8zM27 574 h1 v1 h-1zM16 576 h4 v1 h-4zM21 576 h3 v1 h-3zM17 578 h6 v1 h-6zM24 578 h2 v1 h-2zM15 580 h5 v1 h-5zM21 580 h3 v1 h-3zM13 590 h4 v1 h-4zM10 592 h4 v1 h-4zM15 592 h6 v1 h-6zM22 592 h3 v1 h-3zM16 594 h6 v1 h-6zM18 596 h7 v1 h-7zM9 608 h4 v1 h-4zM14 608 h2 v1 h-2zM10 610 h6 v1 h-6zM17 610 h4 v1 h-4zM17 614 h9 v1 h-9zM16 616 h7 v1 h-7zM18 626 h4 v1 h-4zM15 634 h4 v1 h-4zM12 644 h3 v1 h-3zM16 644 h4 v1 h-4zM14 650 h3 v1 h-3zM16 652 h8 v1 h-8zM25 652 h5 v1 h-5zM16 662 h8 v1 h-8zM25 662 h7 v1 h-7zM17 664 h8 v1 h-8zM17 666 h4 v1 h-4zM12 670 h9 v1 h-9zM22 670 h2 v1 h-2zM15 678 h4 v1 h-4zM15 684 h4 v1 h-4zM20 684 h7 v1 h-7zM10 686 h3 v1 h-3zM14 686 h1 v1 h-1zM16 688 h5 v1 h-5zM9 696 h8 v1 h-8zM18 696 h3 v1 h-3zM18 698 h5 v1 h-5zM24 698 h5 v1 h-5zM30 698 h3 v1 h-3zM9 700 h4 v1 h-4zM13 704 h7 v1 h-7zM21 704 h1 v1 h-1zM13 714 h5 v1 h-5zM14 716 h3 v1 h-3zM18 716 h5 v1 h-5zM24 716 h1 v1 h-1zM16 724 h6 v1 h-6zM23 724 h1 v1 h-1zM16 738 h3 v1 h-3zM20 738 h3 v1 h-3zM11 740 h8 v1 h-8zM20 740 h3 v1 h-3zM24 740 h1 v1 h-1zM14 754 h4 v1 h-4zM19 754 h2 v1 h-2zM12 768 h9 v1 h-9zM22 768 h4 v1 h-4zM27 768 h1 v1 h-1zM15 770 h6 v1 h-6zM16 772 h6 v1 h-6zM23 772 h5 v1 h-5zM17 774 h3 v1 h-3zM17 776 h7 v1 h-7zM14 778 h7 v1 h-7zM11 786 h5 v1 h-5zM17 786 h8 v1 h-8zM26 786 h1 v1 h-1zM17 792 h6 v1 h-6zM9 804 h7 v1 h-7zM17 804 h5 v1 h-5zM12 806 h3 v1 h-3zM13 808 h4 v1 h-4zM10 810 h6 v1 h-6zM17 810 h3 v1 h-3zM21 810 h2 v1 h-2zM13 822 h7 v1 h-7zM15 824 h5 v1 h-5zM16 826 h7 v1 h-7zM24 826 h8 v1 h-8zM13 828 h7 v1 h-7zM21 828 h2 v1 h-2zM9 830 h9 v1 h-9zM19 830 h4 v1 h-4zM13 840 h4 v1 h-4zM18 840 h5 v1 h-5zM11 844 h3 v1 h-3zM14 848 h6 v1 h-6zM16 850 h3 v1 h-3zM18 858 h8 v1 h-8zM13 862 h5 v1 h-5zM19 862 h7 v1 h-7zM11 866 h6 v1 h-6zM18 866 h6 v1 h-6zM18 868 h6 v1 h-6zM25 868 h5 v1 h-5zM10 878 h6 v1 h-6zM12 880 h9 v1 h-9zM11 884 h4 v1 h-4zM16 884 h1 v1 h-1zM10 886 h4 v1 h-4zM15 886 h3 v1 h-3zM19 886 h3 v1 h-3zM10 898 h4 v1 h-4zM15 898 h5 v1 h-5zM21 898 h1 v1 h-1zM18 900 h7 v1 h-7zM26 900 h2 v1 h-2zM10 902 h8 v1 h-8zM19 902 h4 v1 h-4zM13 912 h3 v1 h-3zM11 914 h8 v1 h-8zM20 914 h3 v1 h-3z" fill="#ce9178"/><path d="M30 42 h1 v1 h-1zM54 42 h1 v1 h-1zM37 46 h1 v1 h-1zM67 46 h1 v1 h-1zM20 58 h1 v1 h-1zM57 58 h1 v1 h-1zM19 72 h1 v1 h-1zM56 72 h1 v1 h-1zM37 78 h1 v1 h-1zM73 78 h1 v1 h-1zM37 80 h1 v1 h-1zM77 80 h1 v1 h-1zM38 290 h8 v1 h-8zM48 290 h6 v1 h-6zM55 290 h1 v1 h-1zM30 294 h5 v1 h-5zM36 294 h9 v1 h-9zM6 328 h3 v1 h-3zM10 328 h8 v1 h-8zM53 332 h3 v1 h-3zM14 336 h8 v1 h-8zM4 346 h4 v1 h-4zM33 352 h4 v1 h-4zM38 352 h4 v1 h-4zM43 352 h5 v1 h-5zM4 354 h3 v1 h-3zM10 356 h4 v1 h-4zM15 356 h8 v1 h-8zM59 362 h6 v1 h-6zM43 364 h9 v1 h-9zM53 364 h4 v1 h-4zM4 374 h8 v1 h-8zM13 374 h3 v1 h-3zM17 374 h2 v1 h-2zM13 378 h3 v1 h-3zM17 378 h4 v1 h-4zM18 386 h4 v1 h-4zM23 386 h9 v1 h-9zM8 390 h2 v1 h-2zM4 402 h4 v1 h-4zM22 402 h7 v1 h-7zM48 416 h6 v1 h-6zM65 418 h6 v1 h-6zM28 428 h4 v1 h-4zM33 428 h4 v1 h-4zM55 434 h9 v1 h-9zM65 434 h4 v1 h-4zM70 434 h1 v1 h-1zM29 436 h3 v1 h-3zM33 436 h8 v1 h-8zM12 448 h8 v1 h-8zM21 448 h4 v1 h-4zM30 448 h3 v1 h-3zM34 448 h8 v1 h-8zM50 448 h8 v1 h-8zM17 450 h9 v1 h-9zM27 450 h4 v1 h-4zM32 450 h1 v1 h-1zM17 462 h6 v1 h-6zM4 464 h8 v1 h-8zM13 464 h3 v1 h-3zM48 470 h8 v1 h-8zM57 470 h3 v1 h-3zM45 484 h4 v1 h-4zM22 492 h4 v1 h-4zM27 492 h2 v1 h-2zM20 496 h4 v1 h-4zM25 496 h4 v1 h-4zM30 496 h6 v1 h-6zM10 504 h4 v1 h-4zM12 506 h5 v1 h-5zM26 510 h6 v1 h-6zM33 510 h7 v1 h-7zM30 514 h5 v1 h-5zM15 518 h8 v1 h-8zM24 518 h3 v1 h-3zM28 518 h2 v1 h-2zM58 532 h4 v1 h-4zM63 532 h5 v1 h-5zM10 536 h5 v1 h-5zM21 538 h4 v1 h-4zM26 538 h8 v1 h-8zM35 538 h2 v1 h-2zM22 542 h6 v1 h-6zM29 542 h6 v1 h-6zM8 552 h4 v1 h-4zM6 556 h9 v1 h-9zM16 556 h3 v1 h-3zM36 556 h5 v1 h-5zM43 556 h3 v1 h-3zM53 556 h3 v1 h-3zM57 556 h3 v1 h-3zM61 556 h4 v1 h-4zM66 556 h1 v1 h-1zM72 558 h3 v1 h-3zM76 558 h3 v1 h-3zM80 558 h3 v1 h-3zM84 558 h3 v1 h-3zM18 566 h3 v1 h-3zM22 566 h7 v1 h-7zM30 566 h3 v1 h-3z" fill="#ffd700"/><path d="M31 42 h1 v1 h-1zM53 42 h1 v1 h-1zM38 46 h1 v1 h-1zM66 46 h1 v1 h-1zM21 58 h1 v1 h-1zM56 58 h1 v1 h-1zM20 72 h1 v1 h-1zM55 72 h1 v1 h-1zM38 78 h1 v1 h-1zM72 78 h1 v1 h-1zM38 80 h1 v1 h-1zM76 80 h1 v1 h-1z" fill="#da70d6"/><path d="M40 80 h9 v1 h-9zM4 288 h5 v1 h-5zM4 290 h3 v1 h-3zM17 320 h5 v1 h-5zM33 320 h5 v1 h-5zM39 320 h8 v1 h-8zM14 330 h5 v1 h-5zM32 332 h6 v1 h-6zM39 332 h4 v1 h-4zM44 332 h4 v1 h-4zM49 332 h3 v1 h-3zM25 334 h5 v1 h-5zM19 352 h7 v1 h-7zM27 352 h3 v1 h-3zM31 352 h1 v1 h-1zM12 354 h5 v1 h-5zM50 356 h8 v1 h-8zM59 356 h2 v1 h-2zM27 362 h5 v1 h-5zM33 362 h7 v1 h-7zM8 364 h4 v1 h-4zM19 370 h5 v1 h-5zM26 390 h9 v1 h-9zM36 390 h6 v1 h-6zM43 390 h4 v1 h-4zM11 394 h3 v1 h-3zM15 394 h3 v1 h-3zM46 398 h3 v1 h-3zM9 402 h7 v1 h-7zM17 402 h4 v1 h-4zM45 404 h6 v1 h-6zM52 404 h1 v1 h-1zM22 414 h5 v1 h-5zM28 414 h8 v1 h-8zM37 414 h1 v1 h-1zM54 414 h8 v1 h-8zM63 414 h1 v1 h-1zM4 416 h3 v1 h-3zM8 420 h5 v1 h-5zM14 420 h3 v1 h-3zM4 428 h5 v1 h-5zM10 428 h1 v1 h-1zM12 428 h9 v1 h-9zM22 428 h4 v1 h-4zM29 434 h8 v1 h-8zM38 434 h4 v1 h-4zM32 452 h5 v1 h-5zM54 460 h5 v1 h-5zM60 460 h7 v1 h-7zM35 470 h7 v1 h-7zM43 470 h4 v1 h-4zM8 474 h3 v1 h-3zM4 484 h9 v1 h-9zM15 484 h9 v1 h-9zM25 484 h6 v1 h-6zM8 488 h6 v1 h-6zM29 504 h3 v1 h-3zM33 504 h9 v1 h-9zM43 504 h1 v1 h-1zM45 504 h9 v1 h-9zM55 504 h2 v1 h-2zM68 510 h5 v1 h-5zM74 510 h6 v1 h-6zM81 510 h3 v1 h-3zM43 518 h3 v1 h-3zM47 518 h5 v1 h-5zM10 522 h5 v1 h-5zM16 522 h9 v1 h-9zM29 526 h8 v1 h-8zM38 526 h3 v1 h-3zM35 528 h7 v1 h-7zM43 528 h3 v1 h-3zM41 532 h3 v1 h-3zM45 532 h9 v1 h-9zM55 532 h2 v1 h-2zM6 544 h7 v1 h-7zM14 544 h5 v1 h-5zM40 558 h3 v1 h-3zM44 558 h1 v1 h-1zM46 558 h4 v1 h-4zM51 558 h4 v1 h-4zM56 558 h1 v1 h-1zM31 562 h5 v1 h-5zM37 562 h2 v1 h-2zM34 566 h8 v1 h-8zM43 566 h3 v1 h-3zM47 566 h3 v1 h-3z" fill="#dcdcaa"/><path d="M49 80 h1 v1 h-1zM74 80 h1 v1 h-1z" fill="#179fff"/><path d="M73 80 h1 v1 h-1zM18 572 h8 v1 h-8zM9 588 h6 v1 h-6zM10 598 h6 v1 h-6zM17 598 h7 v1 h-7zM11 606 h5 v1 h-5zM17 606 h2 v1 h-2zM10 612 h3 v1 h-3zM13 624 h4 v1 h-4zM18 624 h5 v1 h-5zM24 624 h1 v1 h-1zM17 628 h5 v1 h-5zM10 630 h8 v1 h-8zM19 630 h3 v1 h-3zM10 632 h3 v1 h-3zM14 632 h5 v1 h-5zM15 642 h3 v1 h-3zM10 646 h3 v1 h-3zM14 646 h6 v1 h-6zM10 648 h8 v1 h-8zM19 648 h7 v1 h-7zM13 660 h7 v1 h-7zM18 668 h3 v1 h-3zM22 668 h3 v1 h-3zM26 668 h2 v1 h-2zM10 680 h7 v1 h-7zM18 680 h2 v1 h-2zM9 682 h4 v1 h-4zM14 682 h2 v1 h-2zM13 702 h6 v1 h-6zM20 702 h6 v1 h-6zM12 706 h3 v1 h-3zM17 718 h5 v1 h-5zM23 718 h6 v1 h-6zM16 720 h8 v1 h-8zM25 720 h3 v1 h-3zM9 722 h5 v1 h-5zM10 732 h8 v1 h-8zM19 732 h1 v1 h-1zM14 734 h9 v1 h-9zM24 734 h5 v1 h-5zM10 736 h7 v1 h-7zM18 736 h1 v1 h-1zM17 742 h3 v1 h-3zM21 742 h5 v1 h-5zM11 750 h5 v1 h-5zM9 752 h9 v1 h-9zM19 752 h3 v1 h-3zM18 756 h3 v1 h-3zM22 756 h1 v1 h-1zM18 758 h3 v1 h-3zM22 758 h7 v1 h-7zM10 760 h3 v1 h-3zM14 760 h3 v1 h-3zM9 788 h4 v1 h-4zM14 788 h1 v1 h-1zM9 790 h5 v1 h-5zM15 790 h1 v1 h-1zM12 794 h5 v1 h-5zM18 794 h2 v1 h-2zM12 796 h4 v1 h-4zM17 796 h3 v1 h-3zM18 812 h8 v1 h-8zM27 812 h3 v1 h-3zM31 812 h3 v1 h-3zM14 814 h7 v1 h-7zM17 832 h6 v1 h-6zM13 842 h3 v1 h-3zM10 846 h6 v1 h-6zM15 860 h4 v1 h-4zM20 860 h3 v1 h-3zM18 864 h6 v1 h-6zM9 876 h4 v1 h-4zM14 876 h7 v1 h-7zM18 882 h6 v1 h-6zM12 894 h3 v1 h-3zM16 894 h4 v1 h-4zM21 894 h7 v1 h-7zM13 896 h3 v1 h-3zM17 896 h4 v1 h-4zM22 896 h5 v1 h-5zM14 904 h4 v1 h-4zM19 904 h4 v1 h-4zM24 904 h2 v1 h-2zM13 916 h9 v1 h-9z" fill="#b5cea8"/><path d="M19 290 h4 v1 h-4zM46 294 h8 v1 h-8zM2 298 h6 v1 h-6zM2 300 h6 v1 h-6zM2 302 h6 v1 h-6zM2 304 h5 v1 h-5zM2 308 h5 v1 h-5zM2 310 h6 v1 h-6zM2 312 h3 v1 h-3zM6 312 h2 v1 h-2zM2 314 h6 v1 h-6zM2 316 h6 v1 h-6zM2 318 h6 v1 h-6zM25 322 h6 v1 h-6zM20 328 h8 v1 h-8zM29 328 h6 v1 h-6zM44 330 h2 v1 h-2zM15 332 h3 v1 h-3zM19 332 h7 v1 h-7zM27 332 h4 v1 h-4zM10 336 h3 v1 h-3zM41 342 h3 v1 h-3zM45 342 h4 v1 h-4zM50 342 h4 v1 h-4zM55 342 h4 v1 h-4zM10 346 h5 v1 h-5zM16 346 h3 v1 h-3zM12 362 h8 v1 h-8zM21 362 h5 v1 h-5zM30 364 h7 v1 h-7zM38 364 h4 v1 h-4zM25 370 h6 v1 h-6zM32 370 h4 v1 h-4zM5 388 h6 v1 h-6zM12 388 h6 v1 h-6zM19 394 h2 v1 h-2zM6 404 h8 v1 h-8zM15 404 h7 v1 h-7zM41 404 h3 v1 h-3zM4 408 h8 v1 h-8zM8 412 h7 v1 h-7zM16 412 h2 v1 h-2zM20 416 h6 v1 h-6zM10 424 h2 v1 h-2zM9 434 h4 v1 h-4zM4 436 h2 v1 h-2zM22 442 h5 v1 h-5zM28 442 h4 v1 h-4zM33 442 h3 v1 h-3zM37 442 h3 v1 h-3zM26 448 h3 v1 h-3zM4 454 h3 v1 h-3zM9 456 h3 v1 h-3zM32 472 h6 v1 h-6zM4 486 h5 v1 h-5zM10 486 h3 v1 h-3zM14 486 h2 v1 h-2zM4 492 h4 v1 h-4zM9 492 h5 v1 h-5zM15 492 h1 v1 h-1zM37 496 h7 v1 h-7zM45 496 h3 v1 h-3zM6 498 h9 v1 h-9zM16 498 h3 v1 h-3zM16 500 h7 v1 h-7zM24 500 h1 v1 h-1zM23 514 h5 v1 h-5zM31 518 h3 v1 h-3zM35 518 h7 v1 h-7zM53 518 h4 v1 h-4zM58 518 h4 v1 h-4zM63 518 h4 v1 h-4zM68 518 h1 v1 h-1zM20 524 h4 v1 h-4zM4 526 h8 v1 h-8zM6 528 h3 v1 h-3zM47 528 h5 v1 h-5zM12 532 h3 v1 h-3zM16 532 h6 v1 h-6zM23 532 h3 v1 h-3zM20 556 h9 v1 h-9zM30 556 h5 v1 h-5zM58 558 h4 v1 h-4zM63 558 h5 v1 h-5zM69 558 h2 v1 h-2zM9 564 h4 v1 h-4zM4 566 h2 v1 h-2z" fill="#c586c0"/><path d="M0 568 h9 v1 h-9zM10 568 h8 v1 h-8zM19 568 h4 v1 h-4zM24 568 h6 v1 h-6zM0 586 h7 v1 h-7zM8 586 h5 v1 h-5zM14 586 h9 v1 h-9zM24 586 h5 v1 h-5zM30 586 h6 v1 h-6zM0 604 h8 v1 h-8zM9 604 h5 v1 h-5zM15 604 h7 v1 h-7zM23 604 h8 v1 h-8zM32 604 h2 v1 h-2zM0 622 h5 v1 h-5zM6 622 h4 v1 h-4zM11 622 h3 v1 h-3zM15 622 h4 v1 h-4zM20 622 h9 v1 h-9zM30 622 h4 v1 h-4zM0 640 h9 v1 h-9zM10 640 h8 v1 h-8zM19 640 h9 v1 h-9zM29 640 h1 v1 h-1zM0 658 h3 v1 h-3zM4 658 h9 v1 h-9zM14 658 h7 v1 h-7zM0 676 h6 v1 h-6zM7 676 h3 v1 h-3zM11 676 h5 v1 h-5zM17 676 h7 v1 h-7zM25 676 h4 v1 h-4zM30 676 h3 v1 h-3zM0 694 h9 v1 h-9zM10 694 h3 v1 h-3zM14 694 h8 v1 h-8zM23 694 h4 v1 h-4zM0 712 h7 v1 h-7zM8 712 h3 v1 h-3zM12 712 h7 v1 h-7zM20 712 h3 v1 h-3zM24 712 h7 v1 h-7zM32 712 h5 v1 h-5zM0 730 h3 v1 h-3zM4 730 h4 v1 h-4zM9 730 h4 v1 h-4zM0 748 h3 v1 h-3zM4 748 h9 v1 h-9zM14 748 h8 v1 h-8zM23 748 h2 v1 h-2zM0 766 h3 v1 h-3zM4 766 h3 v1 h-3zM8 766 h2 v1 h-2zM0 784 h4 v1 h-4zM5 784 h8 v1 h-8zM14 784 h9 v1 h-9zM24 784 h3 v1 h-3zM28 784 h2 v1 h-2zM0 802 h3 v1 h-3zM4 802 h4 v1 h-4zM0 820 h3 v1 h-3zM4 820 h8 v1 h-8zM13 820 h5 v1 h-5zM0 838 h5 v1 h-5zM6 838 h6 v1 h-6zM13 838 h1 v1 h-1zM0 856 h8 v1 h-8zM0 874 h9 v1 h-9zM10 874 h6 v1 h-6zM17 874 h4 v1 h-4zM0 892 h4 v1 h-4zM5 892 h5 v1 h-5zM11 892 h8 v1 h-8zM20 892 h3 v1 h-3zM24 892 h7 v1 h-7zM32 892 h4 v1 h-4zM37 892 h2 v1 h-2zM0 910 h3 v1 h-3zM4 910 h4 v1 h-4z" fill="#d7ba7d"/></svg><div class="a" style="left:1297px;top:96px;width:112px;height:2px;background:#a86a18"></div><div class="a" style="left:1318px;top:96px;width:15px;height:2px;background:#e0a030"></div><div class="a" style="left:1297px;top:124px;width:112px;height:2px;background:#a86a18"></div><div class="a" style="left:1319px;top:124px;width:15px;height:2px;background:#e0a030"></div><div class="a" style="left:1297px;top:488px;width:112px;height:2px;background:#a86a18"></div><div class="a" style="left:1327px;top:488px;width:15px;height:2px;background:#e0a030"></div><div class="a" style="left:1297px;top:542px;width:112px;height:2px;background:#a86a18"></div><div class="a" style="left:1315px;top:542px;width:15px;height:2px;background:#e0a030"></div><div class="a" style="left:1297px;top:378px;width:112px;height:3px;background:#9b2424"></div><div class="a" style="left:1409px;top:92px;width:14px;height:918px;border-left:1px solid #2b2b2b"></div><div class="a" style="left:1410px;top:92px;width:13px;height:60px;background:rgba(121,121,121,0.4)"></div><div class="a" style="left:1413px;top:94px;width:6px;height:6px;background:#a0723a"></div><div class="a" style="left:1413px;top:112px;width:6px;height:6px;background:#a0723a"></div><div class="a" style="left:1413px;top:342px;width:6px;height:6px;background:#a0723a"></div><div class="a" style="left:1413px;top:376px;width:6px;height:6px;background:#a0723a"></div><div class="a" style="left:1419px;top:272px;width:4px;height:7px;background:#e51400"></div><div class="a" style="left:1410px;top:374px;width:13px;height:2px;background:#bbbbbb"></div><div class="a" style="left:1419px;top:745px;width:4px;height:6px;background:#ffcc00"></div><svg style="left:1858px;top:92px;opacity:0.45" width="48" height="310"><path d="M12 0 h6 v1 h-6zM19 0 h2 v1 h-2zM22 0 h8 v1 h-8zM31 0 h5 v1 h-5zM21 2 h2 v1 h-2zM16 4 h3 v1 h-3zM20 4 h2 v1 h-2zM25 4 h9 v1 h-9zM16 6 h5 v1 h-5zM22 6 h3 v1 h-3zM26 6 h5 v1 h-5zM25 10 h5 v1 h-5zM29 12 h3 v1 h-3zM33 12 h1 v1 h-1zM32 16 h2 v1 h-2zM32 18 h6 v1 h-6zM39 18 h7 v1 h-7zM32 20 h2 v1 h-2zM32 24 h7 v1 h-7zM40 24 h3 v1 h-3zM44 24 h2 v1 h-2zM32 26 h1 v1 h-1zM17 38 h4 v1 h-4zM23 38 h5 v1 h-5zM29 38 h6 v1 h-6zM36 38 h2 v1 h-2zM9 40 h9 v1 h-9zM19 40 h2 v1 h-2zM18 42 h5 v1 h-5zM24 42 h2 v1 h-2zM12 46 h9 v1 h-9zM22 46 h3 v1 h-3zM26 46 h2 v1 h-2zM30 46 h9 v1 h-9zM40 46 h4 v1 h-4zM9 54 h5 v1 h-5zM4 56 h4 v1 h-4zM10 56 h8 v1 h-8zM19 56 h6 v1 h-6zM5 58 h7 v1 h-7zM13 58 h3 v1 h-3zM12 62 h9 v1 h-9zM22 62 h6 v1 h-6zM30 62 h9 v1 h-9zM40 62 h4 v1 h-4zM20 92 h4 v1 h-4zM25 92 h7 v1 h-7zM34 92 h4 v1 h-4zM16 94 h3 v1 h-3zM20 94 h4 v1 h-4zM12 100 h4 v1 h-4zM17 100 h4 v1 h-4zM22 100 h2 v1 h-2zM26 100 h4 v1 h-4zM4 104 h9 v1 h-9zM14 104 h2 v1 h-2zM18 104 h4 v1 h-4zM12 120 h4 v1 h-4zM17 120 h7 v1 h-7zM26 120 h4 v1 h-4zM16 122 h4 v1 h-4zM21 122 h6 v1 h-6zM28 122 h3 v1 h-3zM20 128 h6 v1 h-6zM27 128 h7 v1 h-7zM4 136 h7 v1 h-7zM12 136 h4 v1 h-4zM17 136 h2 v1 h-2zM12 138 h7 v1 h-7zM20 138 h5 v1 h-5zM26 138 h1 v1 h-1zM12 140 h7 v1 h-7zM20 140 h3 v1 h-3zM24 140 h3 v1 h-3zM12 144 h9 v1 h-9zM22 144 h5 v1 h-5zM4 146 h8 v1 h-8zM13 146 h3 v1 h-3zM18 146 h4 v1 h-4zM16 152 h3 v1 h-3zM20 152 h4 v1 h-4zM12 154 h3 v1 h-3zM16 154 h4 v1 h-4zM21 154 h6 v1 h-6zM8 160 h8 v1 h-8zM17 160 h5 v1 h-5zM8 162 h4 v1 h-4zM13 162 h6 v1 h-6zM20 162 h3 v1 h-3zM24 162 h1 v1 h-1zM28 162 h3 v1 h-3zM32 162 h4 v1 h-4zM37 162 h4 v1 h-4zM8 164 h3 v1 h-3zM12 164 h4 v1 h-4zM20 166 h7 v1 h-7zM28 166 h4 v1 h-4zM33 166 h2 v1 h-2zM16 170 h4 v1 h-4zM21 170 h7 v1 h-7zM29 170 h2 v1 h-2zM4 172 h7 v1 h-7zM12 172 h4 v1 h-4zM18 172 h4 v1 h-4zM16 184 h3 v1 h-3zM20 184 h4 v1 h-4zM8 186 h3 v1 h-3zM12 186 h4 v1 h-4zM8 194 h7 v1 h-7zM16 194 h4 v1 h-4zM22 194 h4 v1 h-4zM4 202 h7 v1 h-7zM12 202 h4 v1 h-4zM18 202 h4 v1 h-4zM12 212 h5 v1 h-5zM18 212 h6 v1 h-6zM25 212 h2 v1 h-2zM4 214 h8 v1 h-8zM13 214 h6 v1 h-6zM8 222 h4 v1 h-4zM13 222 h4 v1 h-4zM18 222 h3 v1 h-3zM22 222 h3 v1 h-3zM28 222 h3 v1 h-3zM32 222 h3 v1 h-3zM37 222 h4 v1 h-4zM12 230 h3 v1 h-3zM16 230 h4 v1 h-4zM12 242 h3 v1 h-3zM16 242 h4 v1 h-4zM8 246 h3 v1 h-3zM12 246 h4 v1 h-4zM4 248 h3 v1 h-3zM8 248 h6 v1 h-6zM15 248 h4 v1 h-4zM4 250 h8 v1 h-8zM13 250 h3 v1 h-3zM18 250 h4 v1 h-4zM12 254 h3 v1 h-3zM16 254 h4 v1 h-4zM12 256 h3 v1 h-3zM16 256 h4 v1 h-4zM16 264 h4 v1 h-4zM21 264 h9 v1 h-9zM12 272 h7 v1 h-7zM20 272 h5 v1 h-5zM26 272 h1 v1 h-1zM8 276 h7 v1 h-7zM16 276 h4 v1 h-4zM22 276 h4 v1 h-4zM8 282 h4 v1 h-4zM13 282 h6 v1 h-6zM22 282 h4 v1 h-4zM8 286 h4 v1 h-4zM13 286 h3 v1 h-3zM17 286 h8 v1 h-8zM28 286 h3 v1 h-3zM32 286 h4 v1 h-4zM37 286 h4 v1 h-4zM8 290 h9 v1 h-9zM18 290 h5 v1 h-5zM12 294 h4 v1 h-4zM17 294 h6 v1 h-6zM24 294 h3 v1 h-3zM28 294 h1 v1 h-1zM32 294 h3 v1 h-3zM36 294 h4 v1 h-4zM41 294 h3 v1 h-3zM12 300 h8 v1 h-8zM21 300 h3 v1 h-3zM26 300 h4 v1 h-4zM4 306 h3 v1 h-3zM8 306 h7 v1 h-7zM18 306 h4 v1 h-4zM12 308 h7 v1 h-7zM20 308 h7 v1 h-7z" fill="#9cdcfe"/><path d="M37 0 h1 v1 h-1zM16 2 h1 v1 h-1zM35 8 h1 v1 h-1zM20 10 h1 v1 h-1zM45 10 h1 v1 h-1zM24 12 h1 v1 h-1zM44 12 h1 v1 h-1zM32 14 h1 v1 h-1zM38 22 h1 v1 h-1zM39 22 h2 v1 h-2zM33 26 h1 v1 h-1zM24 28 h2 v1 h-2zM29 28 h1 v1 h-1zM20 30 h2 v1 h-2zM25 30 h1 v1 h-1zM12 32 h2 v1 h-2zM17 32 h1 v1 h-1zM12 34 h2 v1 h-2zM22 34 h1 v1 h-1zM8 36 h2 v1 h-2zM16 36 h1 v1 h-1zM4 38 h1 v1 h-1zM22 40 h1 v1 h-1zM8 42 h1 v1 h-1zM26 42 h1 v1 h-1zM12 44 h1 v1 h-1zM12 48 h1 v1 h-1zM13 48 h2 v1 h-2zM30 48 h1 v1 h-1zM8 50 h2 v1 h-2zM18 50 h1 v1 h-1zM4 52 h2 v1 h-2zM17 52 h1 v1 h-1zM4 54 h1 v1 h-1zM18 58 h1 v1 h-1zM12 60 h1 v1 h-1zM12 64 h1 v1 h-1zM13 64 h2 v1 h-2zM30 64 h1 v1 h-1zM4 66 h2 v1 h-2zM9 66 h1 v1 h-1zM0 68 h2 v1 h-2zM10 68 h1 v1 h-1z" fill="#808080"/><path d="M17 2 h3 v1 h-3zM21 10 h3 v1 h-3zM25 12 h3 v1 h-3zM26 28 h3 v1 h-3zM22 30 h3 v1 h-3zM14 32 h3 v1 h-3zM14 34 h5 v1 h-5zM20 34 h2 v1 h-2zM10 36 h4 v1 h-4zM15 36 h1 v1 h-1zM5 38 h5 v1 h-5zM11 38 h5 v1 h-5zM9 42 h4 v1 h-4zM14 42 h3 v1 h-3zM10 50 h8 v1 h-8zM6 52 h8 v1 h-8zM15 52 h2 v1 h-2zM5 54 h3 v1 h-3zM6 66 h3 v1 h-3zM2 68 h5 v1 h-5zM8 68 h2 v1 h-2z" fill="#569cd6"/><path d="M23 2 h1 v1 h-1zM22 4 h1 v1 h-1zM23 4 h1 v1 h-1zM34 4 h1 v1 h-1zM32 6 h1 v1 h-1zM33 6 h1 v1 h-1zM37 6 h1 v1 h-1zM24 8 h1 v1 h-1zM34 8 h1 v1 h-1zM30 10 h1 v1 h-1zM34 12 h1 v1 h-1zM34 20 h1 v1 h-1zM21 38 h1 v1 h-1zM22 38 h1 v1 h-1zM39 38 h1 v1 h-1zM40 38 h1 v1 h-1zM6 40 h1 v1 h-1zM7 40 h1 v1 h-1zM21 40 h1 v1 h-1zM28 46 h1 v1 h-1zM29 46 h1 v1 h-1zM45 46 h1 v1 h-1zM14 54 h1 v1 h-1zM8 56 h1 v1 h-1zM9 56 h1 v1 h-1zM26 56 h1 v1 h-1zM27 56 h1 v1 h-1zM31 56 h1 v1 h-1zM32 56 h1 v1 h-1zM4 58 h1 v1 h-1zM17 58 h1 v1 h-1zM28 62 h1 v1 h-1zM29 62 h1 v1 h-1zM45 62 h1 v1 h-1zM32 92 h1 v1 h-1zM38 92 h1 v1 h-1zM19 94 h1 v1 h-1zM25 94 h1 v1 h-1zM26 94 h1 v1 h-1zM27 94 h1 v1 h-1zM24 100 h1 v1 h-1zM30 100 h1 v1 h-1zM16 104 h1 v1 h-1zM22 104 h1 v1 h-1zM5 106 h1 v1 h-1zM13 114 h1 v1 h-1zM13 116 h1 v1 h-1zM24 120 h1 v1 h-1zM30 120 h1 v1 h-1zM31 122 h1 v1 h-1zM34 122 h1 v1 h-1zM35 128 h1 v1 h-1zM38 128 h1 v1 h-1zM9 132 h1 v1 h-1zM19 136 h1 v1 h-1zM22 136 h1 v1 h-1zM27 138 h1 v1 h-1zM30 138 h1 v1 h-1zM27 140 h1 v1 h-1zM30 140 h1 v1 h-1zM27 144 h1 v1 h-1zM30 144 h1 v1 h-1zM16 146 h1 v1 h-1zM22 146 h1 v1 h-1zM9 148 h1 v1 h-1zM19 152 h1 v1 h-1zM25 152 h1 v1 h-1zM26 152 h1 v1 h-1zM27 152 h1 v1 h-1zM27 154 h1 v1 h-1zM30 154 h1 v1 h-1zM13 156 h1 v1 h-1zM23 160 h1 v1 h-1zM26 160 h1 v1 h-1zM12 162 h1 v1 h-1zM26 162 h1 v1 h-1zM31 162 h1 v1 h-1zM36 162 h1 v1 h-1zM41 162 h1 v1 h-1zM11 164 h1 v1 h-1zM17 164 h1 v1 h-1zM18 164 h1 v1 h-1zM19 164 h1 v1 h-1zM35 166 h1 v1 h-1zM38 166 h1 v1 h-1zM9 168 h1 v1 h-1zM31 170 h1 v1 h-1zM34 170 h1 v1 h-1zM16 172 h1 v1 h-1zM22 172 h1 v1 h-1zM13 180 h1 v1 h-1zM19 184 h1 v1 h-1zM25 184 h1 v1 h-1zM26 184 h1 v1 h-1zM27 184 h1 v1 h-1zM11 186 h1 v1 h-1zM17 186 h1 v1 h-1zM18 186 h1 v1 h-1zM19 186 h1 v1 h-1zM13 188 h1 v1 h-1zM20 194 h1 v1 h-1zM26 194 h1 v1 h-1zM16 202 h1 v1 h-1zM22 202 h1 v1 h-1zM9 204 h1 v1 h-1zM27 212 h1 v1 h-1zM30 212 h1 v1 h-1zM19 214 h1 v1 h-1zM22 214 h1 v1 h-1zM17 218 h1 v1 h-1zM12 222 h1 v1 h-1zM26 222 h1 v1 h-1zM31 222 h1 v1 h-1zM36 222 h1 v1 h-1zM41 222 h1 v1 h-1zM15 230 h1 v1 h-1zM21 230 h1 v1 h-1zM22 230 h1 v1 h-1zM23 230 h1 v1 h-1zM9 234 h1 v1 h-1zM9 238 h1 v1 h-1zM15 242 h1 v1 h-1zM21 242 h1 v1 h-1zM22 242 h1 v1 h-1zM23 242 h1 v1 h-1zM11 246 h1 v1 h-1zM17 246 h1 v1 h-1zM18 246 h1 v1 h-1zM19 246 h1 v1 h-1zM19 248 h1 v1 h-1zM22 248 h1 v1 h-1zM16 250 h1 v1 h-1zM22 250 h1 v1 h-1zM15 254 h1 v1 h-1zM21 254 h1 v1 h-1zM22 254 h1 v1 h-1zM23 254 h1 v1 h-1zM15 256 h1 v1 h-1zM21 256 h1 v1 h-1zM22 256 h1 v1 h-1zM23 256 h1 v1 h-1zM31 264 h1 v1 h-1zM34 264 h1 v1 h-1zM9 266 h1 v1 h-1zM27 272 h1 v1 h-1zM30 272 h1 v1 h-1zM9 274 h1 v1 h-1zM20 276 h1 v1 h-1zM26 276 h1 v1 h-1zM20 282 h1 v1 h-1zM26 282 h1 v1 h-1zM12 286 h1 v1 h-1zM26 286 h1 v1 h-1zM31 286 h1 v1 h-1zM36 286 h1 v1 h-1zM41 286 h1 v1 h-1zM23 290 h1 v1 h-1zM26 290 h1 v1 h-1zM16 294 h1 v1 h-1zM30 294 h1 v1 h-1zM35 294 h1 v1 h-1zM40 294 h1 v1 h-1zM45 294 h1 v1 h-1zM24 300 h1 v1 h-1zM30 300 h1 v1 h-1zM16 306 h1 v1 h-1zM22 306 h1 v1 h-1zM27 308 h1 v1 h-1zM30 308 h1 v1 h-1z" fill="#d4d4d4"/><path d="M24 2 h1 v1 h-1zM25 2 h5 v1 h-5zM31 2 h7 v1 h-7zM16 8 h6 v1 h-6zM26 8 h3 v1 h-3zM30 8 h3 v1 h-3zM31 10 h1 v1 h-1zM32 10 h3 v1 h-3zM36 10 h7 v1 h-7zM44 10 h1 v1 h-1zM35 12 h1 v1 h-1zM36 12 h5 v1 h-5zM42 12 h2 v1 h-2zM35 20 h1 v1 h-1zM36 20 h9 v1 h-9zM32 22 h6 v1 h-6zM15 54 h1 v1 h-1zM16 54 h3 v1 h-3zM20 54 h9 v1 h-9zM30 54 h3 v1 h-3zM34 54 h2 v1 h-2zM23 118 h3 v1 h-3zM27 118 h6 v1 h-6zM34 118 h9 v1 h-9zM19 124 h8 v1 h-8zM28 124 h6 v1 h-6zM35 124 h5 v1 h-5zM23 130 h8 v1 h-8zM32 130 h4 v1 h-4zM37 130 h7 v1 h-7zM19 134 h8 v1 h-8zM28 134 h6 v1 h-6zM35 134 h5 v1 h-5zM27 142 h7 v1 h-7zM35 142 h6 v1 h-6zM42 142 h6 v1 h-6zM27 158 h3 v1 h-3zM31 158 h4 v1 h-4zM36 158 h4 v1 h-4zM41 158 h4 v1 h-4zM46 158 h2 v1 h-2zM11 190 h5 v1 h-5zM17 190 h3 v1 h-3zM21 190 h8 v1 h-8zM30 190 h2 v1 h-2zM19 206 h5 v1 h-5zM25 206 h8 v1 h-8zM34 206 h3 v1 h-3zM38 206 h2 v1 h-2zM15 210 h5 v1 h-5zM21 210 h6 v1 h-6zM28 210 h6 v1 h-6zM35 210 h1 v1 h-1zM19 252 h3 v1 h-3zM23 252 h8 v1 h-8zM32 252 h4 v1 h-4zM37 252 h3 v1 h-3zM19 260 h7 v1 h-7zM27 260 h7 v1 h-7zM35 260 h5 v1 h-5zM11 278 h3 v1 h-3zM15 278 h9 v1 h-9zM25 278 h4 v1 h-4zM30 278 h2 v1 h-2zM15 304 h5 v1 h-5zM21 304 h8 v1 h-8zM30 304 h4 v1 h-4zM35 304 h1 v1 h-1z" fill="#ce9178"/><path d="M24 4 h1 v1 h-1zM33 8 h1 v1 h-1zM16 70 h1 v1 h-1zM17 70 h1 v1 h-1zM19 70 h1 v1 h-1zM20 72 h1 v1 h-1zM16 74 h1 v1 h-1zM17 74 h1 v1 h-1zM19 74 h1 v1 h-1zM24 80 h1 v1 h-1zM25 80 h1 v1 h-1zM27 80 h1 v1 h-1zM8 90 h1 v1 h-1zM9 90 h1 v1 h-1zM11 90 h1 v1 h-1zM27 98 h1 v1 h-1zM28 98 h1 v1 h-1zM30 98 h1 v1 h-1zM8 112 h1 v1 h-1zM8 148 h1 v1 h-1zM12 180 h1 v1 h-1zM27 182 h1 v1 h-1zM28 182 h1 v1 h-1zM30 182 h1 v1 h-1zM19 196 h1 v1 h-1zM20 196 h1 v1 h-1zM22 196 h1 v1 h-1zM14 210 h1 v1 h-1zM36 210 h1 v1 h-1zM15 216 h1 v1 h-1zM16 218 h1 v1 h-1zM11 220 h1 v1 h-1zM12 224 h1 v1 h-1zM15 226 h1 v1 h-1zM19 232 h1 v1 h-1zM20 232 h1 v1 h-1zM22 232 h1 v1 h-1zM8 234 h1 v1 h-1zM27 236 h1 v1 h-1zM8 238 h1 v1 h-1zM12 240 h1 v1 h-1zM13 240 h1 v1 h-1zM15 240 h1 v1 h-1zM7 246 h1 v1 h-1zM24 246 h1 v1 h-1zM26 246 h1 v1 h-1zM27 258 h1 v1 h-1zM19 292 h1 v1 h-1zM20 292 h1 v1 h-1zM22 292 h1 v1 h-1z" fill="#ffd700"/><path d="M35 6 h1 v1 h-1zM4 40 h1 v1 h-1zM29 56 h1 v1 h-1zM29 94 h3 v1 h-3zM33 122 h1 v1 h-1zM37 128 h1 v1 h-1zM21 136 h1 v1 h-1zM29 138 h1 v1 h-1zM29 140 h1 v1 h-1zM29 144 h1 v1 h-1zM29 152 h3 v1 h-3zM29 154 h1 v1 h-1zM25 160 h1 v1 h-1zM21 164 h3 v1 h-3zM37 166 h1 v1 h-1zM33 170 h1 v1 h-1zM29 184 h3 v1 h-3zM21 186 h3 v1 h-3zM29 212 h1 v1 h-1zM21 214 h1 v1 h-1zM25 230 h3 v1 h-3zM25 242 h3 v1 h-3zM21 246 h3 v1 h-3zM21 248 h1 v1 h-1zM25 254 h3 v1 h-3zM25 256 h3 v1 h-3zM33 264 h1 v1 h-1zM29 272 h1 v1 h-1zM25 290 h1 v1 h-1zM29 308 h1 v1 h-1z" fill="#b5cea8"/><path d="M33 14 h7 v1 h-7zM41 14 h5 v1 h-5zM13 44 h6 v1 h-6zM20 44 h5 v1 h-5zM26 44 h2 v1 h-2zM15 48 h5 v1 h-5zM21 48 h4 v1 h-4zM26 48 h4 v1 h-4zM13 60 h6 v1 h-6zM20 60 h4 v1 h-4zM25 60 h3 v1 h-3zM15 64 h3 v1 h-3zM19 64 h6 v1 h-6zM26 64 h3 v1 h-3z" fill="#4ec9b0"/><path d="M12 70 h4 v1 h-4zM12 74 h4 v1 h-4zM8 78 h8 v1 h-8zM17 78 h2 v1 h-2zM20 80 h4 v1 h-4zM20 84 h7 v1 h-7zM28 84 h3 v1 h-3zM8 88 h8 v1 h-8zM17 88 h2 v1 h-2zM4 90 h4 v1 h-4zM16 98 h9 v1 h-9zM26 98 h1 v1 h-1zM20 102 h4 v1 h-4zM16 118 h6 v1 h-6zM12 124 h6 v1 h-6zM12 126 h4 v1 h-4zM16 130 h6 v1 h-6zM12 134 h5 v1 h-5zM20 142 h3 v1 h-3zM24 142 h2 v1 h-2zM20 158 h6 v1 h-6zM8 176 h4 v1 h-4zM16 182 h4 v1 h-4zM21 182 h6 v1 h-6zM4 190 h5 v1 h-5zM8 196 h3 v1 h-3zM12 196 h6 v1 h-6zM12 206 h4 v1 h-4zM17 206 h1 v1 h-1zM8 210 h3 v1 h-3zM12 210 h2 v1 h-2zM8 232 h9 v1 h-9zM18 232 h1 v1 h-1zM8 240 h4 v1 h-4zM12 252 h3 v1 h-3zM16 252 h2 v1 h-2zM12 260 h6 v1 h-6zM12 262 h3 v1 h-3zM16 262 h6 v1 h-6zM12 268 h4 v1 h-4zM4 278 h5 v1 h-5zM4 284 h3 v1 h-3zM8 284 h5 v1 h-5zM14 284 h1 v1 h-1zM8 292 h4 v1 h-4zM13 292 h6 v1 h-6zM16 296 h4 v1 h-4zM12 298 h6 v1 h-6zM19 298 h4 v1 h-4zM8 304 h6 v1 h-6z" fill="#dcdcaa"/><path d="M20 76 h6 v1 h-6zM12 82 h6 v1 h-6zM12 94 h2 v1 h-2zM12 96 h6 v1 h-6zM8 108 h5 v1 h-5zM12 152 h2 v1 h-2zM4 164 h2 v1 h-2zM12 184 h2 v1 h-2zM4 186 h2 v1 h-2zM20 192 h6 v1 h-6zM12 198 h6 v1 h-6zM16 200 h6 v1 h-6zM4 208 h4 v1 h-4zM9 208 h1 v1 h-1zM8 216 h4 v1 h-4zM13 216 h1 v1 h-1zM4 220 h5 v1 h-5zM8 226 h6 v1 h-6zM12 228 h6 v1 h-6zM8 230 h2 v1 h-2zM20 236 h6 v1 h-6zM8 242 h2 v1 h-2zM12 244 h6 v1 h-6zM4 246 h2 v1 h-2zM8 254 h2 v1 h-2zM8 256 h2 v1 h-2zM20 258 h6 v1 h-6zM16 270 h6 v1 h-6zM12 288 h3 v1 h-3zM16 288 h2 v1 h-2z" fill="#c586c0"/><path d="M27 76 h1 v1 h-1zM19 82 h1 v1 h-1zM15 94 h1 v1 h-1zM32 94 h1 v1 h-1zM34 94 h1 v1 h-1zM24 102 h1 v1 h-1zM25 102 h1 v1 h-1zM27 102 h1 v1 h-1zM4 106 h1 v1 h-1zM15 108 h1 v1 h-1zM4 110 h1 v1 h-1zM12 116 h1 v1 h-1zM22 118 h1 v1 h-1zM44 118 h1 v1 h-1zM18 124 h1 v1 h-1zM40 124 h1 v1 h-1zM16 126 h1 v1 h-1zM17 126 h1 v1 h-1zM19 126 h1 v1 h-1zM8 132 h1 v1 h-1zM18 134 h1 v1 h-1zM40 134 h1 v1 h-1zM26 142 h1 v1 h-1zM12 174 h1 v1 h-1zM12 176 h1 v1 h-1zM13 176 h1 v1 h-1zM15 176 h1 v1 h-1zM8 178 h1 v1 h-1zM15 184 h1 v1 h-1zM32 184 h1 v1 h-1zM34 184 h1 v1 h-1zM19 198 h1 v1 h-1zM19 228 h1 v1 h-1zM11 242 h1 v1 h-1zM28 242 h1 v1 h-1zM30 242 h1 v1 h-1zM18 252 h1 v1 h-1zM40 252 h1 v1 h-1zM11 254 h1 v1 h-1zM28 254 h1 v1 h-1zM30 254 h1 v1 h-1zM18 260 h1 v1 h-1zM40 260 h1 v1 h-1zM23 262 h1 v1 h-1zM24 262 h1 v1 h-1zM26 262 h1 v1 h-1zM8 266 h1 v1 h-1zM16 268 h1 v1 h-1zM17 268 h1 v1 h-1zM19 268 h1 v1 h-1zM12 280 h1 v1 h-1zM15 284 h1 v1 h-1zM16 284 h1 v1 h-1zM18 284 h1 v1 h-1zM20 296 h1 v1 h-1zM21 296 h1 v1 h-1zM23 296 h1 v1 h-1z" fill="#da70d6"/><path d="M19 78 h1 v1 h-1zM20 78 h1 v1 h-1zM22 78 h1 v1 h-1zM31 84 h1 v1 h-1zM32 84 h1 v1 h-1zM34 84 h1 v1 h-1zM4 86 h1 v1 h-1zM19 88 h1 v1 h-1zM20 88 h1 v1 h-1zM22 88 h1 v1 h-1zM19 96 h1 v1 h-1zM12 114 h1 v1 h-1zM22 130 h1 v1 h-1zM44 130 h1 v1 h-1zM4 150 h1 v1 h-1zM15 152 h1 v1 h-1zM32 152 h1 v1 h-1zM34 152 h1 v1 h-1zM12 156 h1 v1 h-1zM26 158 h1 v1 h-1zM7 164 h1 v1 h-1zM24 164 h1 v1 h-1zM26 164 h1 v1 h-1zM8 168 h1 v1 h-1zM7 186 h1 v1 h-1zM24 186 h1 v1 h-1zM26 186 h1 v1 h-1zM12 188 h1 v1 h-1zM10 190 h1 v1 h-1zM32 190 h1 v1 h-1zM27 192 h1 v1 h-1zM23 200 h1 v1 h-1zM8 204 h1 v1 h-1zM18 206 h1 v1 h-1zM40 206 h1 v1 h-1zM11 208 h1 v1 h-1zM11 230 h1 v1 h-1zM28 230 h1 v1 h-1zM30 230 h1 v1 h-1zM19 244 h1 v1 h-1zM11 256 h1 v1 h-1zM28 256 h1 v1 h-1zM30 256 h1 v1 h-1zM23 270 h1 v1 h-1zM8 274 h1 v1 h-1zM10 278 h1 v1 h-1zM32 278 h1 v1 h-1zM19 288 h1 v1 h-1zM23 298 h1 v1 h-1zM24 298 h1 v1 h-1zM26 298 h1 v1 h-1zM4 302 h1 v1 h-1zM14 304 h1 v1 h-1zM36 304 h1 v1 h-1z" fill="#179fff"/></svg><div class="a" style="left:1858px;top:210px;width:48px;height:2px;background:#a86a18"></div><div class="a" style="left:1870px;top:210px;width:20px;height:2px;background:#e0a030"></div><div class="a" style="left:1858px;top:264px;width:48px;height:2px;background:#a86a18"></div><div class="a" style="left:1866px;top:264px;width:20px;height:2px;background:#e0a030"></div><div class="a" style="left:1906px;top:92px;width:14px;height:918px;border-left:1px solid #2b2b2b"></div><div class="a" style="left:1907px;top:356px;width:13px;height:2px;background:#bbbbbb"></div><div class="a" style="left:1910px;top:359px;width:6px;height:7px;background:#a0723a"></div><div class="a" style="left:1910px;top:480px;width:6px;height:6px;background:#a0723a"></div><div class="a" style="left:1424px;top:92px;width:3px;height:40px;background:#3a3a3a"></div><div class="a" style="left:0;top:1010px;width:1920px;height:22px;background:#181818;border-top:1px solid #2b2b2b"></div><div class="a" style="left:0;top:1010px;width:34px;height:22px;background:#0078d4"></div><svg style="left:11px;top:1014px" width="14" height="14"><path d="M1 13 L6 8 L1 3 M13 1 L8 6 L13 11" stroke="#ffffff" stroke-width="1.2" fill="none"/></svg><svg style="left:42px;top:1014px" width="14" height="14"><circle cx="7" cy="7" r="6" stroke="#cccccc" stroke-width="1.1" fill="none"/><path d="M4.5 4.5 L9.5 9.5 M9.5 4.5 L4.5 9.5" stroke="#cccccc" stroke-width="1.1"/></svg><div class="ui" style="left:60px;top:1014px;font-size:12px;color:#cccccc">2</div><svg style="left:70px;top:1013px" width="15" height="14"><path d="M7.5 1 L14 13 H1 Z M7.5 5 V9 M7.5 10.5 V12" stroke="#cccccc" stroke-width="1.1" fill="none"/></svg><div class="ui" style="left:87px;top:1014px;font-size:12px;color:#cccccc">1</div><svg style="left:110px;top:1014px" width="14" height="14"><path d="M4 2 Q1 7 4 12 M10 2 Q13 7 10 12 M7 6 L4.5 13 M7 6 L9.5 13 M5.5 10 H8.5" stroke="#cccccc" stroke-width="1.1" fill="none"/><circle cx="7" cy="5" r="1.2" fill="#cccccc"/></svg><div class="ui" style="left:126px;top:1014px;font-size:12px;color:#cccccc">0</div><svg style="left:1323px;top:1014px" width="14" height="14"><path d="M1 7 Q7 1 13 7 Q7 13 1 7 Z" stroke="#cccccc" stroke-width="1.1" fill="none"/><circle cx="7" cy="7" r="2" stroke="#cccccc" fill="none"/><path d="M2 1 L12 13" stroke="#cccccc" stroke-width="1.1"/></svg><div class="ui" style="left:1339px;top:1014px;font-size:12px;color:#cccccc;letter-spacing:-0.2px">Auto Format Vue: Off</div><div class="ui" style="left:1467px;top:1014px;font-size:12px;color:#cccccc;letter-spacing:-0.3px">行 332，列 24 (已选择14)</div><div class="ui" style="left:1619px;top:1014px;font-size:12px;color:#cccccc;letter-spacing:-0.3px">制表符长度: 4</div><div class="ui" style="left:1706px;top:1014px;font-size:12px;color:#cccccc">UTF</div><div class="a" style="left:1743px;top:1003px;width:176px;height:26px;background:#ffffff"></div><svg style="left:1722px;top:1000px" width="30" height="32"><path d="M14 1 Q27 1 27 13 Q27 26 15 27 L9 31 L10 26 Q1 24 1 13 Q1 1 14 1 Z" fill="#3478e5"/><path d="M8 8 H20 M9 14 H19 M7 21 H21 M14 8 V21" stroke="#ffffff" stroke-width="2.4" fill="none"/></svg><svg style="left:1759px;top:1009px" width="14" height="15"><rect x="1" y="3.5" width="12" height="6.5" stroke="#2f6fd6" stroke-width="2" fill="none"/><path d="M7 0 V15" stroke="#2f6fd6" stroke-width="2"/></svg><svg style="left:1783px;top:1009px" width="14" height="15"><circle cx="3" cy="3.5" r="2.2" stroke="#2f6fd6" stroke-width="1.6" fill="none"/><circle cx="10" cy="8.5" r="2.3" fill="#2f6fd6"/><path d="M11.8 9 Q12 12 9 14" stroke="#2f6fd6" stroke-width="1.8" fill="none"/></svg><svg style="left:1805px;top:1009px" width="14" height="15"><path d="M2 11 L10 3 L12 5 L4 13 H2 Z" fill="#2f6fd6"/><path d="M0 14.3 H14" stroke="#2f6fd6" stroke-width="1.4"/></svg><svg style="left:1828px;top:1009px" width="14" height="15"><path d="M2 1 L11 11 M12 1 L3 11" stroke="#2f6fd6" stroke-width="1.6"/><circle cx="3" cy="12" r="2.2" stroke="#2f6fd6" stroke-width="1.5" fill="none"/><circle cx="11" cy="12" r="2.2" stroke="#2f6fd6" stroke-width="1.5" fill="none"/></svg><svg style="left:1850px;top:1010px" width="16" height="13"><rect x="0.8" y="0.8" width="14.4" height="11" rx="1.5" stroke="#2f6fd6" stroke-width="1.5" fill="none"/><path d="M3 4 H13 M3 6.5 H13 M5 9 H11" stroke="#2f6fd6" stroke-width="1.2" stroke-dasharray="1.3 1"/></svg><svg style="left:1873px;top:1010px" width="15" height="13"><path d="M4.5 0.5 L1 2.5 L0.5 6 L3 6.5 V12.5 H12 V6.5 L14.5 6 L14 2.5 L10.5 0.5 Q7.5 3 4.5 0.5 Z" fill="#2f6fd6"/></svg><svg style="left:1896px;top:1009px" width="15" height="15"><polygon points="7.50,0.50 9.31,0.74 10.10,3.00 11.18,3.82 13.56,4.00 14.26,5.69 12.70,7.50 12.52,8.85 13.56,11.00 12.45,12.45 10.10,12.00 8.85,12.52 7.50,14.50 5.69,14.26 4.90,12.00 3.82,11.18 1.44,11.00 0.74,9.31 2.30,7.50 2.48,6.15 1.44,4.00 2.55,2.55 4.90,3.00 6.15,2.48" stroke="#2f6fd6" stroke-width="1.5" fill="#2f6fd6" stroke-linejoin="round"/><circle fill="#ffffff" cx="7.5" cy="7.5" r="2.4" stroke="#2f6fd6" stroke-width="1.5" fill="#2f6fd6"/></svg><div class="a" style="left:480px;top:34px;width:151px;height:38px;border:3px solid #e8302a;border-radius:3px"></div><div class="a" style="left:398px;top:160px;width:312px;height:25px;border:3px solid #e8302a;border-radius:3px"></div></body></html>
